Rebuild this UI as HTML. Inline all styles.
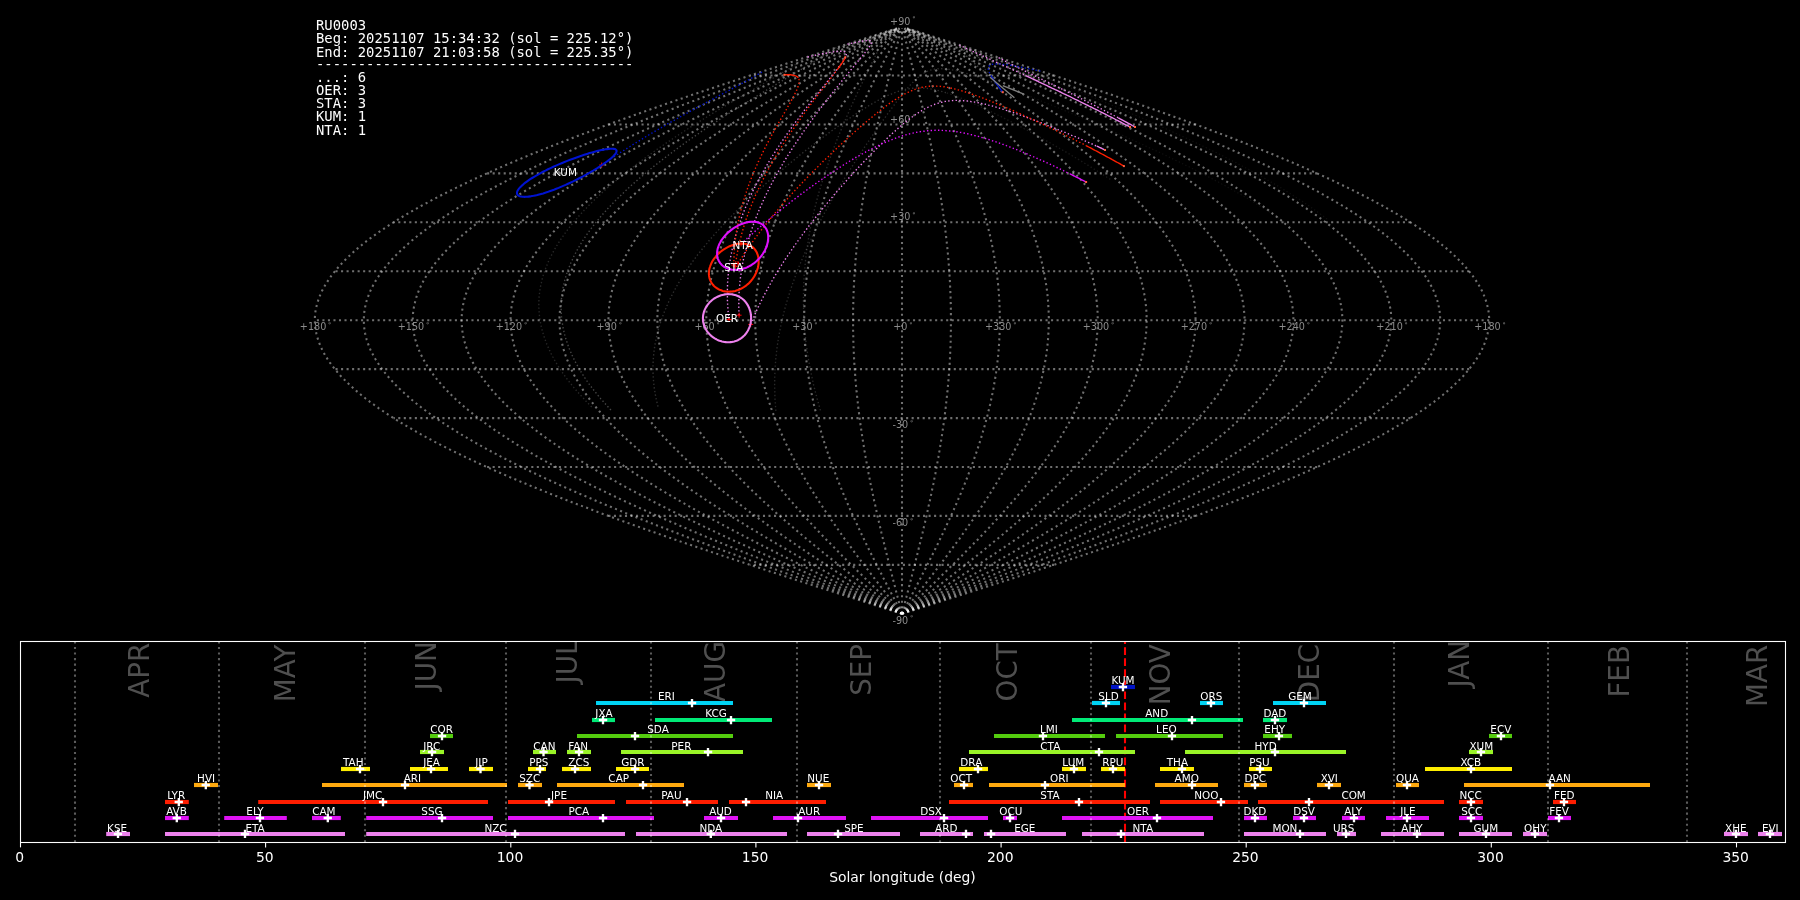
<!DOCTYPE html>
<html><head><meta charset="utf-8"><title>RU0003</title>
<style>html,body{margin:0;padding:0;background:#000;overflow:hidden}svg{display:block;will-change:transform;opacity:0.999}</style></head>
<body>
<svg width="1800" height="900" viewBox="0 0 1800 900">
<rect width="1800" height="900" fill="#000"/>
<g fill="none" stroke="#fff" stroke-opacity="0.44" stroke-width="2.08" stroke-dasharray="2.08 3.44">
<path d="M902.0 613.8L912.2 610.5L922.5 607.3L932.7 604.0L943.0 600.7L953.2 597.5L963.4 594.2L973.6 590.9L983.7 587.7L993.9 584.4L1004.0 581.2L1014.0 577.9L1024.1 574.6L1034.1 571.4L1044.0 568.1L1054.0 564.9L1063.8 561.6L1073.7 558.3L1083.4 555.1L1093.2 551.8L1102.8 548.5L1112.4 545.3L1122.0 542.0L1131.4 538.8L1140.8 535.5L1150.1 532.2L1159.4 529.0L1168.6 525.7L1177.7 522.4L1186.7 519.2L1195.6 515.9L1204.4 512.7L1213.1 509.4L1221.8 506.1L1230.3 502.9L1238.8 499.6L1247.1 496.3L1255.4 493.1L1263.5 489.8L1271.5 486.6L1279.4 483.3L1287.2 480.0L1294.9 476.8L1302.4 473.5L1309.9 470.3L1317.2 467.0L1324.4 463.7L1331.4 460.5L1338.3 457.2L1345.1 453.9L1351.8 450.7L1358.3 447.4L1364.7 444.2L1370.9 440.9L1377.0 437.6L1383.0 434.4L1388.8 431.1L1394.4 427.8L1399.9 424.6L1405.3 421.3L1410.5 418.1L1415.5 414.8L1420.4 411.5L1425.2 408.3L1429.7 405.0L1434.1 401.8L1438.4 398.5L1442.5 395.2L1446.4 392.0L1450.2 388.7L1453.7 385.4L1457.2 382.2L1460.4 378.9L1463.5 375.7L1466.4 372.4L1469.2 369.1L1471.7 365.9L1474.1 362.6L1476.3 359.3L1478.4 356.1L1480.2 352.8L1481.9 349.6L1483.4 346.3L1484.8 343.0L1485.9 339.8L1486.9 336.5L1487.7 333.2L1488.4 330.0L1488.8 326.7L1489.1 323.5L1489.2 320.2L1489.1 316.9L1488.8 313.7L1488.4 310.4L1487.7 307.2L1486.9 303.9L1485.9 300.6L1484.8 297.4L1483.4 294.1L1481.9 290.8L1480.2 287.6L1478.4 284.3L1476.3 281.1L1474.1 277.8L1471.7 274.5L1469.2 271.3L1466.4 268.0L1463.5 264.7L1460.4 261.5L1457.2 258.2L1453.7 255.0L1450.2 251.7L1446.4 248.4L1442.5 245.2L1438.4 241.9L1434.1 238.6L1429.7 235.4L1425.2 232.1L1420.4 228.9L1415.5 225.6L1410.5 222.3L1405.3 219.1L1399.9 215.8L1394.4 212.6L1388.8 209.3L1383.0 206.0L1377.0 202.8L1370.9 199.5L1364.7 196.2L1358.3 193.0L1351.8 189.7L1345.1 186.5L1338.3 183.2L1331.4 179.9L1324.4 176.7L1317.2 173.4L1309.9 170.1L1302.4 166.9L1294.9 163.6L1287.2 160.4L1279.4 157.1L1271.5 153.8L1263.5 150.6L1255.4 147.3L1247.1 144.1L1238.8 140.8L1230.3 137.5L1221.8 134.3L1213.1 131.0L1204.4 127.7L1195.6 124.5L1186.7 121.2L1177.7 118.0L1168.6 114.7L1159.4 111.4L1150.1 108.2L1140.8 104.9L1131.4 101.6L1122.0 98.4L1112.4 95.1L1102.8 91.9L1093.2 88.6L1083.4 85.3L1073.7 82.1L1063.8 78.8L1054.0 75.5L1044.0 72.3L1034.1 69.0L1024.1 65.8L1014.0 62.5L1004.0 59.2L993.9 56.0L983.7 52.7L973.6 49.5L963.4 46.2L953.2 42.9L943.0 39.7L932.7 36.4L922.5 33.1L912.2 29.9L907.1 28.3"/>
<path d="M902.0 613.8L911.4 610.5L920.8 607.3L930.2 604.0L939.5 600.7L948.9 597.5L958.3 594.2L967.6 590.9L976.9 587.7L986.2 584.4L995.5 581.2L1004.7 577.9L1013.9 574.6L1023.1 571.4L1032.2 568.1L1041.3 564.9L1050.4 561.6L1059.4 558.3L1068.3 555.1L1077.2 551.8L1086.1 548.5L1094.9 545.3L1103.6 542.0L1112.3 538.8L1120.9 535.5L1129.5 532.2L1137.9 529.0L1146.4 525.7L1154.7 522.4L1162.9 519.2L1171.1 515.9L1179.2 512.7L1187.2 509.4L1195.1 506.1L1203.0 502.9L1210.7 499.6L1218.4 496.3L1225.9 493.1L1233.4 489.8L1240.7 486.6L1248.0 483.3L1255.1 480.0L1262.1 476.8L1269.1 473.5L1275.9 470.3L1282.6 467.0L1289.2 463.7L1295.6 460.5L1302.0 457.2L1308.2 453.9L1314.3 450.7L1320.3 447.4L1326.1 444.2L1331.8 440.9L1337.4 437.6L1342.9 434.4L1348.2 431.1L1353.4 427.8L1358.4 424.6L1363.4 421.3L1368.1 418.1L1372.7 414.8L1377.2 411.5L1381.6 408.3L1385.8 405.0L1389.8 401.8L1393.7 398.5L1397.4 395.2L1401.0 392.0L1404.5 388.7L1407.8 385.4L1410.9 382.2L1413.9 378.9L1416.7 375.7L1419.4 372.4L1421.9 369.1L1424.2 365.9L1426.4 362.6L1428.5 359.3L1430.3 356.1L1432.1 352.8L1433.6 349.6L1435.0 346.3L1436.2 343.0L1437.3 339.8L1438.2 336.5L1438.9 333.2L1439.5 330.0L1439.9 326.7L1440.1 323.5L1440.2 320.2L1440.1 316.9L1439.9 313.7L1439.5 310.4L1438.9 307.2L1438.2 303.9L1437.3 300.6L1436.2 297.4L1435.0 294.1L1433.6 290.8L1432.1 287.6L1430.3 284.3L1428.5 281.1L1426.4 277.8L1424.2 274.5L1421.9 271.3L1419.4 268.0L1416.7 264.7L1413.9 261.5L1410.9 258.2L1407.8 255.0L1404.5 251.7L1401.0 248.4L1397.4 245.2L1393.7 241.9L1389.8 238.6L1385.8 235.4L1381.6 232.1L1377.2 228.9L1372.7 225.6L1368.1 222.3L1363.4 219.1L1358.4 215.8L1353.4 212.6L1348.2 209.3L1342.9 206.0L1337.4 202.8L1331.8 199.5L1326.1 196.2L1320.3 193.0L1314.3 189.7L1308.2 186.5L1302.0 183.2L1295.6 179.9L1289.2 176.7L1282.6 173.4L1275.9 170.1L1269.1 166.9L1262.1 163.6L1255.1 160.4L1248.0 157.1L1240.7 153.8L1233.4 150.6L1225.9 147.3L1218.4 144.1L1210.7 140.8L1203.0 137.5L1195.1 134.3L1187.2 131.0L1179.2 127.7L1171.1 124.5L1162.9 121.2L1154.7 118.0L1146.4 114.7L1137.9 111.4L1129.5 108.2L1120.9 104.9L1112.3 101.6L1103.6 98.4L1094.9 95.1L1086.1 91.9L1077.2 88.6L1068.3 85.3L1059.4 82.1L1050.4 78.8L1041.3 75.5L1032.2 72.3L1023.1 69.0L1013.9 65.8L1004.7 62.5L995.5 59.2L986.2 56.0L976.9 52.7L967.6 49.5L958.3 46.2L948.9 42.9L939.5 39.7L930.2 36.4L920.8 33.1L911.4 29.9L906.7 28.3"/>
<path d="M902.0 613.8L910.5 610.5L919.1 607.3L927.6 604.0L936.1 600.7L944.6 597.5L953.1 594.2L961.6 590.9L970.1 587.7L978.5 584.4L987.0 581.2L995.4 577.9L1003.7 574.6L1012.1 571.4L1020.4 568.1L1028.6 564.9L1036.9 561.6L1045.1 558.3L1053.2 555.1L1061.3 551.8L1069.4 548.5L1077.3 545.3L1085.3 542.0L1093.2 538.8L1101.0 535.5L1108.8 532.2L1116.5 529.0L1124.1 525.7L1131.7 522.4L1139.2 519.2L1146.7 515.9L1154.0 512.7L1161.3 509.4L1168.5 506.1L1175.6 502.9L1182.7 499.6L1189.6 496.3L1196.5 493.1L1203.2 489.8L1209.9 486.6L1216.5 483.3L1223.0 480.0L1229.4 476.8L1235.7 473.5L1241.9 470.3L1248.0 467.0L1254.0 463.7L1259.9 460.5L1265.6 457.2L1271.3 453.9L1276.8 450.7L1282.3 447.4L1287.6 444.2L1292.8 440.9L1297.9 437.6L1302.8 434.4L1307.6 431.1L1312.4 427.8L1316.9 424.6L1321.4 421.3L1325.7 418.1L1330.0 414.8L1334.0 411.5L1338.0 408.3L1341.8 405.0L1345.5 401.8L1349.0 398.5L1352.4 395.2L1355.7 392.0L1358.8 388.7L1361.8 385.4L1364.6 382.2L1367.4 378.9L1369.9 375.7L1372.3 372.4L1374.6 369.1L1376.8 365.9L1378.8 362.6L1380.6 359.3L1382.3 356.1L1383.9 352.8L1385.3 349.6L1386.5 346.3L1387.7 343.0L1388.6 339.8L1389.4 336.5L1390.1 333.2L1390.6 330.0L1391.0 326.7L1391.2 323.5L1391.3 320.2L1391.2 316.9L1391.0 313.7L1390.6 310.4L1390.1 307.2L1389.4 303.9L1388.6 300.6L1387.7 297.4L1386.5 294.1L1385.3 290.8L1383.9 287.6L1382.3 284.3L1380.6 281.1L1378.8 277.8L1376.8 274.5L1374.6 271.3L1372.3 268.0L1369.9 264.7L1367.4 261.5L1364.6 258.2L1361.8 255.0L1358.8 251.7L1355.7 248.4L1352.4 245.2L1349.0 241.9L1345.5 238.6L1341.8 235.4L1338.0 232.1L1334.0 228.9L1330.0 225.6L1325.7 222.3L1321.4 219.1L1316.9 215.8L1312.4 212.6L1307.6 209.3L1302.8 206.0L1297.9 202.8L1292.8 199.5L1287.6 196.2L1282.3 193.0L1276.8 189.7L1271.3 186.5L1265.6 183.2L1259.9 179.9L1254.0 176.7L1248.0 173.4L1241.9 170.1L1235.7 166.9L1229.4 163.6L1223.0 160.4L1216.5 157.1L1209.9 153.8L1203.2 150.6L1196.5 147.3L1189.6 144.1L1182.7 140.8L1175.6 137.5L1168.5 134.3L1161.3 131.0L1154.0 127.7L1146.7 124.5L1139.2 121.2L1131.7 118.0L1124.1 114.7L1116.5 111.4L1108.8 108.2L1101.0 104.9L1093.2 101.6L1085.3 98.4L1077.3 95.1L1069.4 91.9L1061.3 88.6L1053.2 85.3L1045.1 82.1L1036.9 78.8L1028.6 75.5L1020.4 72.3L1012.1 69.0L1003.7 65.8L995.4 62.5L987.0 59.2L978.5 56.0L970.1 52.7L961.6 49.5L953.1 46.2L944.6 42.9L936.1 39.7L927.6 36.4L919.1 33.1L910.5 29.9L906.3 28.3"/>
<path d="M902.0 613.8L909.7 610.5L917.4 607.3L925.0 604.0L932.7 600.7L940.4 597.5L948.0 594.2L955.7 590.9L963.3 587.7L970.9 584.4L978.5 581.2L986.0 577.9L993.6 574.6L1001.1 571.4L1008.5 568.1L1016.0 564.9L1023.4 561.6L1030.8 558.3L1038.1 555.1L1045.4 551.8L1052.6 548.5L1059.8 545.3L1067.0 542.0L1074.1 538.8L1081.1 535.5L1088.1 532.2L1095.0 529.0L1101.9 525.7L1108.7 522.4L1115.5 519.2L1122.2 515.9L1128.8 512.7L1135.4 509.4L1141.8 506.1L1148.3 502.9L1154.6 499.6L1160.8 496.3L1167.0 493.1L1173.1 489.8L1179.1 486.6L1185.1 483.3L1190.9 480.0L1196.7 476.8L1202.3 473.5L1207.9 470.3L1213.4 467.0L1218.8 463.7L1224.1 460.5L1229.3 457.2L1234.4 453.9L1239.3 450.7L1244.2 447.4L1249.0 444.2L1253.7 440.9L1258.3 437.6L1262.7 434.4L1267.1 431.1L1271.3 427.8L1275.5 424.6L1279.5 421.3L1283.4 418.1L1287.2 414.8L1290.8 411.5L1294.4 408.3L1297.8 405.0L1301.1 401.8L1304.3 398.5L1307.4 395.2L1310.3 392.0L1313.1 388.7L1315.8 385.4L1318.4 382.2L1320.8 378.9L1323.1 375.7L1325.3 372.4L1327.4 369.1L1329.3 365.9L1331.1 362.6L1332.7 359.3L1334.3 356.1L1335.7 352.8L1336.9 349.6L1338.1 346.3L1339.1 343.0L1340.0 339.8L1340.7 336.5L1341.3 333.2L1341.8 330.0L1342.1 326.7L1342.3 323.5L1342.4 320.2L1342.3 316.9L1342.1 313.7L1341.8 310.4L1341.3 307.2L1340.7 303.9L1340.0 300.6L1339.1 297.4L1338.1 294.1L1336.9 290.8L1335.7 287.6L1334.3 284.3L1332.7 281.1L1331.1 277.8L1329.3 274.5L1327.4 271.3L1325.3 268.0L1323.1 264.7L1320.8 261.5L1318.4 258.2L1315.8 255.0L1313.1 251.7L1310.3 248.4L1307.4 245.2L1304.3 241.9L1301.1 238.6L1297.8 235.4L1294.4 232.1L1290.8 228.9L1287.2 225.6L1283.4 222.3L1279.5 219.1L1275.5 215.8L1271.3 212.6L1267.1 209.3L1262.7 206.0L1258.3 202.8L1253.7 199.5L1249.0 196.2L1244.2 193.0L1239.3 189.7L1234.4 186.5L1229.3 183.2L1224.1 179.9L1218.8 176.7L1213.4 173.4L1207.9 170.1L1202.3 166.9L1196.7 163.6L1190.9 160.4L1185.1 157.1L1179.1 153.8L1173.1 150.6L1167.0 147.3L1160.8 144.1L1154.6 140.8L1148.3 137.5L1141.8 134.3L1135.4 131.0L1128.8 127.7L1122.2 124.5L1115.5 121.2L1108.7 118.0L1101.9 114.7L1095.0 111.4L1088.1 108.2L1081.1 104.9L1074.1 101.6L1067.0 98.4L1059.8 95.1L1052.6 91.9L1045.4 88.6L1038.1 85.3L1030.8 82.1L1023.4 78.8L1016.0 75.5L1008.5 72.3L1001.1 69.0L993.6 65.8L986.0 62.5L978.5 59.2L970.9 56.0L963.3 52.7L955.7 49.5L948.0 46.2L940.4 42.9L932.7 39.7L925.0 36.4L917.4 33.1L909.7 29.9L905.8 28.3"/>
<path d="M902.0 613.8L908.8 610.5L915.7 607.3L922.5 604.0L929.3 600.7L936.1 597.5L942.9 594.2L949.7 590.9L956.5 587.7L963.2 584.4L970.0 581.2L976.7 577.9L983.4 574.6L990.1 571.4L996.7 568.1L1003.3 564.9L1009.9 561.6L1016.4 558.3L1023.0 555.1L1029.4 551.8L1035.9 548.5L1042.3 545.3L1048.6 542.0L1054.9 538.8L1061.2 535.5L1067.4 532.2L1073.6 529.0L1079.7 525.7L1085.8 522.4L1091.8 519.2L1097.7 515.9L1103.6 512.7L1109.4 509.4L1115.2 506.1L1120.9 502.9L1126.5 499.6L1132.1 496.3L1137.6 493.1L1143.0 489.8L1148.3 486.6L1153.6 483.3L1158.8 480.0L1163.9 476.8L1169.0 473.5L1173.9 470.3L1178.8 467.0L1183.6 463.7L1188.3 460.5L1192.9 457.2L1197.4 453.9L1201.9 450.7L1206.2 447.4L1210.5 444.2L1214.6 440.9L1218.7 437.6L1222.6 434.4L1226.5 431.1L1230.3 427.8L1234.0 424.6L1237.5 421.3L1241.0 418.1L1244.4 414.8L1247.6 411.5L1250.8 408.3L1253.8 405.0L1256.8 401.8L1259.6 398.5L1262.3 395.2L1264.9 392.0L1267.4 388.7L1269.8 385.4L1272.1 382.2L1274.3 378.9L1276.3 375.7L1278.3 372.4L1280.1 369.1L1281.8 365.9L1283.4 362.6L1284.9 359.3L1286.2 356.1L1287.5 352.8L1288.6 349.6L1289.6 346.3L1290.5 343.0L1291.3 339.8L1292.0 336.5L1292.5 333.2L1292.9 330.0L1293.2 326.7L1293.4 323.5L1293.4 320.2L1293.4 316.9L1293.2 313.7L1292.9 310.4L1292.5 307.2L1292.0 303.9L1291.3 300.6L1290.5 297.4L1289.6 294.1L1288.6 290.8L1287.5 287.6L1286.2 284.3L1284.9 281.1L1283.4 277.8L1281.8 274.5L1280.1 271.3L1278.3 268.0L1276.3 264.7L1274.3 261.5L1272.1 258.2L1269.8 255.0L1267.4 251.7L1264.9 248.4L1262.3 245.2L1259.6 241.9L1256.8 238.6L1253.8 235.4L1250.8 232.1L1247.6 228.9L1244.4 225.6L1241.0 222.3L1237.5 219.1L1234.0 215.8L1230.3 212.6L1226.5 209.3L1222.6 206.0L1218.7 202.8L1214.6 199.5L1210.5 196.2L1206.2 193.0L1201.9 189.7L1197.4 186.5L1192.9 183.2L1188.3 179.9L1183.6 176.7L1178.8 173.4L1173.9 170.1L1169.0 166.9L1163.9 163.6L1158.8 160.4L1153.6 157.1L1148.3 153.8L1143.0 150.6L1137.6 147.3L1132.1 144.1L1126.5 140.8L1120.9 137.5L1115.2 134.3L1109.4 131.0L1103.6 127.7L1097.7 124.5L1091.8 121.2L1085.8 118.0L1079.7 114.7L1073.6 111.4L1067.4 108.2L1061.2 104.9L1054.9 101.6L1048.6 98.4L1042.3 95.1L1035.9 91.9L1029.4 88.6L1023.0 85.3L1016.4 82.1L1009.9 78.8L1003.3 75.5L996.7 72.3L990.1 69.0L983.4 65.8L976.7 62.5L970.0 59.2L963.2 56.0L956.5 52.7L949.7 49.5L942.9 46.2L936.1 42.9L929.3 39.7L922.5 36.4L915.7 33.1L908.8 29.9L905.4 28.3"/>
<path d="M902.0 613.8L908.0 610.5L914.0 607.3L919.9 604.0L925.9 600.7L931.9 597.5L937.8 594.2L943.7 590.9L949.7 587.7L955.6 584.4L961.5 581.2L967.4 577.9L973.2 574.6L979.0 571.4L984.9 568.1L990.6 564.9L996.4 561.6L1002.1 558.3L1007.8 555.1L1013.5 551.8L1019.1 548.5L1024.7 545.3L1030.3 542.0L1035.8 538.8L1041.3 535.5L1046.8 532.2L1052.1 529.0L1057.5 525.7L1062.8 522.4L1068.1 519.2L1073.3 515.9L1078.4 512.7L1083.5 509.4L1088.5 506.1L1093.5 502.9L1098.5 499.6L1103.3 496.3L1108.1 493.1L1112.9 489.8L1117.5 486.6L1122.2 483.3L1126.7 480.0L1131.2 476.8L1135.6 473.5L1139.9 470.3L1144.2 467.0L1148.4 463.7L1152.5 460.5L1156.5 457.2L1160.5 453.9L1164.4 450.7L1168.2 447.4L1171.9 444.2L1175.5 440.9L1179.1 437.6L1182.6 434.4L1186.0 431.1L1189.3 427.8L1192.5 424.6L1195.6 421.3L1198.6 418.1L1201.6 414.8L1204.4 411.5L1207.2 408.3L1209.8 405.0L1212.4 401.8L1214.9 398.5L1217.3 395.2L1219.6 392.0L1221.8 388.7L1223.9 385.4L1225.8 382.2L1227.7 378.9L1229.5 375.7L1231.2 372.4L1232.8 369.1L1234.3 365.9L1235.7 362.6L1237.0 359.3L1238.2 356.1L1239.3 352.8L1240.3 349.6L1241.2 346.3L1242.0 343.0L1242.6 339.8L1243.2 336.5L1243.7 333.2L1244.0 330.0L1244.3 326.7L1244.5 323.5L1244.5 320.2L1244.5 316.9L1244.3 313.7L1244.0 310.4L1243.7 307.2L1243.2 303.9L1242.6 300.6L1242.0 297.4L1241.2 294.1L1240.3 290.8L1239.3 287.6L1238.2 284.3L1237.0 281.1L1235.7 277.8L1234.3 274.5L1232.8 271.3L1231.2 268.0L1229.5 264.7L1227.7 261.5L1225.8 258.2L1223.9 255.0L1221.8 251.7L1219.6 248.4L1217.3 245.2L1214.9 241.9L1212.4 238.6L1209.8 235.4L1207.2 232.1L1204.4 228.9L1201.6 225.6L1198.6 222.3L1195.6 219.1L1192.5 215.8L1189.3 212.6L1186.0 209.3L1182.6 206.0L1179.1 202.8L1175.5 199.5L1171.9 196.2L1168.2 193.0L1164.4 189.7L1160.5 186.5L1156.5 183.2L1152.5 179.9L1148.4 176.7L1144.2 173.4L1139.9 170.1L1135.6 166.9L1131.2 163.6L1126.7 160.4L1122.2 157.1L1117.5 153.8L1112.9 150.6L1108.1 147.3L1103.3 144.1L1098.5 140.8L1093.5 137.5L1088.5 134.3L1083.5 131.0L1078.4 127.7L1073.3 124.5L1068.1 121.2L1062.8 118.0L1057.5 114.7L1052.1 111.4L1046.8 108.2L1041.3 104.9L1035.8 101.6L1030.3 98.4L1024.7 95.1L1019.1 91.9L1013.5 88.6L1007.8 85.3L1002.1 82.1L996.4 78.8L990.6 75.5L984.9 72.3L979.0 69.0L973.2 65.8L967.4 62.5L961.5 59.2L955.6 56.0L949.7 52.7L943.7 49.5L937.8 46.2L931.9 42.9L925.9 39.7L919.9 36.4L914.0 33.1L908.0 29.9L905.0 28.3"/>
<path d="M902.0 613.8L907.1 610.5L912.2 607.3L917.4 604.0L922.5 600.7L927.6 597.5L932.7 594.2L937.8 590.9L942.9 587.7L947.9 584.4L953.0 581.2L958.0 577.9L963.0 574.6L968.0 571.4L973.0 568.1L978.0 564.9L982.9 561.6L987.8 558.3L992.7 555.1L997.6 551.8L1002.4 548.5L1007.2 545.3L1012.0 542.0L1016.7 538.8L1021.4 535.5L1026.1 532.2L1030.7 529.0L1035.3 525.7L1039.8 522.4L1044.3 519.2L1048.8 515.9L1053.2 512.7L1057.6 509.4L1061.9 506.1L1066.2 502.9L1070.4 499.6L1074.6 496.3L1078.7 493.1L1082.7 489.8L1086.8 486.6L1090.7 483.3L1094.6 480.0L1098.4 476.8L1102.2 473.5L1105.9 470.3L1109.6 467.0L1113.2 463.7L1116.7 460.5L1120.2 457.2L1123.6 453.9L1126.9 450.7L1130.2 447.4L1133.3 444.2L1136.5 440.9L1139.5 437.6L1142.5 434.4L1145.4 431.1L1148.2 427.8L1151.0 424.6L1153.6 421.3L1156.2 418.1L1158.8 414.8L1161.2 411.5L1163.6 408.3L1165.9 405.0L1168.1 401.8L1170.2 398.5L1172.2 395.2L1174.2 392.0L1176.1 388.7L1177.9 385.4L1179.6 382.2L1181.2 378.9L1182.8 375.7L1184.2 372.4L1185.6 369.1L1186.9 365.9L1188.1 362.6L1189.2 359.3L1190.2 356.1L1191.1 352.8L1192.0 349.6L1192.7 346.3L1193.4 343.0L1194.0 339.8L1194.5 336.5L1194.9 333.2L1195.2 330.0L1195.4 326.7L1195.5 323.5L1195.6 320.2L1195.5 316.9L1195.4 313.7L1195.2 310.4L1194.9 307.2L1194.5 303.9L1194.0 300.6L1193.4 297.4L1192.7 294.1L1192.0 290.8L1191.1 287.6L1190.2 284.3L1189.2 281.1L1188.1 277.8L1186.9 274.5L1185.6 271.3L1184.2 268.0L1182.8 264.7L1181.2 261.5L1179.6 258.2L1177.9 255.0L1176.1 251.7L1174.2 248.4L1172.2 245.2L1170.2 241.9L1168.1 238.6L1165.9 235.4L1163.6 232.1L1161.2 228.9L1158.8 225.6L1156.2 222.3L1153.6 219.1L1151.0 215.8L1148.2 212.6L1145.4 209.3L1142.5 206.0L1139.5 202.8L1136.5 199.5L1133.3 196.2L1130.2 193.0L1126.9 189.7L1123.6 186.5L1120.2 183.2L1116.7 179.9L1113.2 176.7L1109.6 173.4L1105.9 170.1L1102.2 166.9L1098.4 163.6L1094.6 160.4L1090.7 157.1L1086.8 153.8L1082.7 150.6L1078.7 147.3L1074.6 144.1L1070.4 140.8L1066.2 137.5L1061.9 134.3L1057.6 131.0L1053.2 127.7L1048.8 124.5L1044.3 121.2L1039.8 118.0L1035.3 114.7L1030.7 111.4L1026.1 108.2L1021.4 104.9L1016.7 101.6L1012.0 98.4L1007.2 95.1L1002.4 91.9L997.6 88.6L992.7 85.3L987.8 82.1L982.9 78.8L978.0 75.5L973.0 72.3L968.0 69.0L963.0 65.8L958.0 62.5L953.0 59.2L947.9 56.0L942.9 52.7L937.8 49.5L932.7 46.2L927.6 42.9L922.5 39.7L917.4 36.4L912.2 33.1L907.1 29.9L904.6 28.3"/>
<path d="M902.0 613.8L906.3 610.5L910.5 607.3L914.8 604.0L919.1 600.7L923.3 597.5L927.6 594.2L931.8 590.9L936.0 587.7L940.3 584.4L944.5 581.2L948.7 577.9L952.9 574.6L957.0 571.4L961.2 568.1L965.3 564.9L969.4 561.6L973.5 558.3L977.6 555.1L981.7 551.8L985.7 548.5L989.7 545.3L993.6 542.0L997.6 538.8L1001.5 535.5L1005.4 532.2L1009.2 529.0L1013.1 525.7L1016.9 522.4L1020.6 519.2L1024.3 515.9L1028.0 512.7L1031.6 509.4L1035.2 506.1L1038.8 502.9L1042.3 499.6L1045.8 496.3L1049.2 493.1L1052.6 489.8L1056.0 486.6L1059.3 483.3L1062.5 480.0L1065.7 476.8L1068.9 473.5L1071.9 470.3L1075.0 467.0L1078.0 463.7L1080.9 460.5L1083.8 457.2L1086.6 453.9L1089.4 450.7L1092.1 447.4L1094.8 444.2L1097.4 440.9L1099.9 437.6L1102.4 434.4L1104.8 431.1L1107.2 427.8L1109.5 424.6L1111.7 421.3L1113.9 418.1L1116.0 414.8L1118.0 411.5L1120.0 408.3L1121.9 405.0L1123.7 401.8L1125.5 398.5L1127.2 395.2L1128.8 392.0L1130.4 388.7L1131.9 385.4L1133.3 382.2L1134.7 378.9L1136.0 375.7L1137.2 372.4L1138.3 369.1L1139.4 365.9L1140.4 362.6L1141.3 359.3L1142.2 356.1L1142.9 352.8L1143.6 349.6L1144.3 346.3L1144.8 343.0L1145.3 339.8L1145.7 336.5L1146.1 333.2L1146.3 330.0L1146.5 326.7L1146.6 323.5L1146.7 320.2L1146.6 316.9L1146.5 313.7L1146.3 310.4L1146.1 307.2L1145.7 303.9L1145.3 300.6L1144.8 297.4L1144.3 294.1L1143.6 290.8L1142.9 287.6L1142.2 284.3L1141.3 281.1L1140.4 277.8L1139.4 274.5L1138.3 271.3L1137.2 268.0L1136.0 264.7L1134.7 261.5L1133.3 258.2L1131.9 255.0L1130.4 251.7L1128.8 248.4L1127.2 245.2L1125.5 241.9L1123.7 238.6L1121.9 235.4L1120.0 232.1L1118.0 228.9L1116.0 225.6L1113.9 222.3L1111.7 219.1L1109.5 215.8L1107.2 212.6L1104.8 209.3L1102.4 206.0L1099.9 202.8L1097.4 199.5L1094.8 196.2L1092.1 193.0L1089.4 189.7L1086.6 186.5L1083.8 183.2L1080.9 179.9L1078.0 176.7L1075.0 173.4L1071.9 170.1L1068.9 166.9L1065.7 163.6L1062.5 160.4L1059.3 157.1L1056.0 153.8L1052.6 150.6L1049.2 147.3L1045.8 144.1L1042.3 140.8L1038.8 137.5L1035.2 134.3L1031.6 131.0L1028.0 127.7L1024.3 124.5L1020.6 121.2L1016.9 118.0L1013.1 114.7L1009.2 111.4L1005.4 108.2L1001.5 104.9L997.6 101.6L993.6 98.4L989.7 95.1L985.7 91.9L981.7 88.6L977.6 85.3L973.5 82.1L969.4 78.8L965.3 75.5L961.2 72.3L957.0 69.0L952.9 65.8L948.7 62.5L944.5 59.2L940.3 56.0L936.0 52.7L931.8 49.5L927.6 46.2L923.3 42.9L919.1 39.7L914.8 36.4L910.5 33.1L906.3 29.9L904.1 28.3"/>
<path d="M902.0 613.8L905.4 610.5L908.8 607.3L912.2 604.0L915.7 600.7L919.1 597.5L922.5 594.2L925.9 590.9L929.2 587.7L932.6 584.4L936.0 581.2L939.3 577.9L942.7 574.6L946.0 571.4L949.3 568.1L952.7 564.9L955.9 561.6L959.2 558.3L962.5 555.1L965.7 551.8L968.9 548.5L972.1 545.3L975.3 542.0L978.5 538.8L981.6 535.5L984.7 532.2L987.8 529.0L990.9 525.7L993.9 522.4L996.9 519.2L999.9 515.9L1002.8 512.7L1005.7 509.4L1008.6 506.1L1011.4 502.9L1014.3 499.6L1017.0 496.3L1019.8 493.1L1022.5 489.8L1025.2 486.6L1027.8 483.3L1030.4 480.0L1033.0 476.8L1035.5 473.5L1038.0 470.3L1040.4 467.0L1042.8 463.7L1045.1 460.5L1047.4 457.2L1049.7 453.9L1051.9 450.7L1054.1 447.4L1056.2 444.2L1058.3 440.9L1060.3 437.6L1062.3 434.4L1064.3 431.1L1066.1 427.8L1068.0 424.6L1069.8 421.3L1071.5 418.1L1073.2 414.8L1074.8 411.5L1076.4 408.3L1077.9 405.0L1079.4 401.8L1080.8 398.5L1082.2 395.2L1083.5 392.0L1084.7 388.7L1085.9 385.4L1087.1 382.2L1088.1 378.9L1089.2 375.7L1090.1 372.4L1091.1 369.1L1091.9 365.9L1092.7 362.6L1093.4 359.3L1094.1 356.1L1094.7 352.8L1095.3 349.6L1095.8 346.3L1096.3 343.0L1096.6 339.8L1097.0 336.5L1097.2 333.2L1097.5 330.0L1097.6 326.7L1097.7 323.5L1097.7 320.2L1097.7 316.9L1097.6 313.7L1097.5 310.4L1097.2 307.2L1097.0 303.9L1096.6 300.6L1096.3 297.4L1095.8 294.1L1095.3 290.8L1094.7 287.6L1094.1 284.3L1093.4 281.1L1092.7 277.8L1091.9 274.5L1091.1 271.3L1090.1 268.0L1089.2 264.7L1088.1 261.5L1087.1 258.2L1085.9 255.0L1084.7 251.7L1083.5 248.4L1082.2 245.2L1080.8 241.9L1079.4 238.6L1077.9 235.4L1076.4 232.1L1074.8 228.9L1073.2 225.6L1071.5 222.3L1069.8 219.1L1068.0 215.8L1066.1 212.6L1064.3 209.3L1062.3 206.0L1060.3 202.8L1058.3 199.5L1056.2 196.2L1054.1 193.0L1051.9 189.7L1049.7 186.5L1047.4 183.2L1045.1 179.9L1042.8 176.7L1040.4 173.4L1038.0 170.1L1035.5 166.9L1033.0 163.6L1030.4 160.4L1027.8 157.1L1025.2 153.8L1022.5 150.6L1019.8 147.3L1017.0 144.1L1014.3 140.8L1011.4 137.5L1008.6 134.3L1005.7 131.0L1002.8 127.7L999.9 124.5L996.9 121.2L993.9 118.0L990.9 114.7L987.8 111.4L984.7 108.2L981.6 104.9L978.5 101.6L975.3 98.4L972.1 95.1L968.9 91.9L965.7 88.6L962.5 85.3L959.2 82.1L955.9 78.8L952.7 75.5L949.3 72.3L946.0 69.0L942.7 65.8L939.3 62.5L936.0 59.2L932.6 56.0L929.2 52.7L925.9 49.5L922.5 46.2L919.1 42.9L915.7 39.7L912.2 36.4L908.8 33.1L905.4 29.9L903.7 28.3"/>
<path d="M902.0 613.8L904.6 610.5L907.1 607.3L909.7 604.0L912.2 600.7L914.8 597.5L917.3 594.2L919.9 590.9L922.4 587.7L925.0 584.4L927.5 581.2L930.0 577.9L932.5 574.6L935.0 571.4L937.5 568.1L940.0 564.9L942.5 561.6L944.9 558.3L947.4 555.1L949.8 551.8L952.2 548.5L954.6 545.3L957.0 542.0L959.4 538.8L961.7 535.5L964.0 532.2L966.3 529.0L968.6 525.7L970.9 522.4L973.2 519.2L975.4 515.9L977.6 512.7L979.8 509.4L981.9 506.1L984.1 502.9L986.2 499.6L988.3 496.3L990.3 493.1L992.4 489.8L994.4 486.6L996.4 483.3L998.3 480.0L1000.2 476.8L1002.1 473.5L1004.0 470.3L1005.8 467.0L1007.6 463.7L1009.4 460.5L1011.1 457.2L1012.8 453.9L1014.4 450.7L1016.1 447.4L1017.7 444.2L1019.2 440.9L1020.8 437.6L1022.2 434.4L1023.7 431.1L1025.1 427.8L1026.5 424.6L1027.8 421.3L1029.1 418.1L1030.4 414.8L1031.6 411.5L1032.8 408.3L1033.9 405.0L1035.0 401.8L1036.1 398.5L1037.1 395.2L1038.1 392.0L1039.0 388.7L1039.9 385.4L1040.8 382.2L1041.6 378.9L1042.4 375.7L1043.1 372.4L1043.8 369.1L1044.4 365.9L1045.0 362.6L1045.6 359.3L1046.1 356.1L1046.6 352.8L1047.0 349.6L1047.4 346.3L1047.7 343.0L1048.0 339.8L1048.2 336.5L1048.4 333.2L1048.6 330.0L1048.7 326.7L1048.8 323.5L1048.8 320.2L1048.8 316.9L1048.7 313.7L1048.6 310.4L1048.4 307.2L1048.2 303.9L1048.0 300.6L1047.7 297.4L1047.4 294.1L1047.0 290.8L1046.6 287.6L1046.1 284.3L1045.6 281.1L1045.0 277.8L1044.4 274.5L1043.8 271.3L1043.1 268.0L1042.4 264.7L1041.6 261.5L1040.8 258.2L1039.9 255.0L1039.0 251.7L1038.1 248.4L1037.1 245.2L1036.1 241.9L1035.0 238.6L1033.9 235.4L1032.8 232.1L1031.6 228.9L1030.4 225.6L1029.1 222.3L1027.8 219.1L1026.5 215.8L1025.1 212.6L1023.7 209.3L1022.2 206.0L1020.8 202.8L1019.2 199.5L1017.7 196.2L1016.1 193.0L1014.4 189.7L1012.8 186.5L1011.1 183.2L1009.4 179.9L1007.6 176.7L1005.8 173.4L1004.0 170.1L1002.1 166.9L1000.2 163.6L998.3 160.4L996.4 157.1L994.4 153.8L992.4 150.6L990.3 147.3L988.3 144.1L986.2 140.8L984.1 137.5L981.9 134.3L979.8 131.0L977.6 127.7L975.4 124.5L973.2 121.2L970.9 118.0L968.6 114.7L966.3 111.4L964.0 108.2L961.7 104.9L959.4 101.6L957.0 98.4L954.6 95.1L952.2 91.9L949.8 88.6L947.4 85.3L944.9 82.1L942.5 78.8L940.0 75.5L937.5 72.3L935.0 69.0L932.5 65.8L930.0 62.5L927.5 59.2L925.0 56.0L922.4 52.7L919.9 49.5L917.3 46.2L914.8 42.9L912.2 39.7L909.7 36.4L907.1 33.1L904.6 29.9L903.3 28.3"/>
<path d="M902.0 613.8L903.7 610.5L905.4 607.3L907.1 604.0L908.8 600.7L910.5 597.5L912.2 594.2L913.9 590.9L915.6 587.7L917.3 584.4L919.0 581.2L920.7 577.9L922.3 574.6L924.0 571.4L925.7 568.1L927.3 564.9L929.0 561.6L930.6 558.3L932.2 555.1L933.9 551.8L935.5 548.5L937.1 545.3L938.7 542.0L940.2 538.8L941.8 535.5L943.4 532.2L944.9 529.0L946.4 525.7L947.9 522.4L949.4 519.2L950.9 515.9L952.4 512.7L953.9 509.4L955.3 506.1L956.7 502.9L958.1 499.6L959.5 496.3L960.9 493.1L962.2 489.8L963.6 486.6L964.9 483.3L966.2 480.0L967.5 476.8L968.7 473.5L970.0 470.3L971.2 467.0L972.4 463.7L973.6 460.5L974.7 457.2L975.9 453.9L977.0 450.7L978.1 447.4L979.1 444.2L980.2 440.9L981.2 437.6L982.2 434.4L983.1 431.1L984.1 427.8L985.0 424.6L985.9 421.3L986.7 418.1L987.6 414.8L988.4 411.5L989.2 408.3L990.0 405.0L990.7 401.8L991.4 398.5L992.1 395.2L992.7 392.0L993.4 388.7L994.0 385.4L994.5 382.2L995.1 378.9L995.6 375.7L996.1 372.4L996.5 369.1L997.0 365.9L997.4 362.6L997.7 359.3L998.1 356.1L998.4 352.8L998.7 349.6L998.9 346.3L999.1 343.0L999.3 339.8L999.5 336.5L999.6 333.2L999.7 330.0L999.8 326.7L999.8 323.5L999.9 320.2L999.8 316.9L999.8 313.7L999.7 310.4L999.6 307.2L999.5 303.9L999.3 300.6L999.1 297.4L998.9 294.1L998.7 290.8L998.4 287.6L998.1 284.3L997.7 281.1L997.4 277.8L997.0 274.5L996.5 271.3L996.1 268.0L995.6 264.7L995.1 261.5L994.5 258.2L994.0 255.0L993.4 251.7L992.7 248.4L992.1 245.2L991.4 241.9L990.7 238.6L990.0 235.4L989.2 232.1L988.4 228.9L987.6 225.6L986.7 222.3L985.9 219.1L985.0 215.8L984.1 212.6L983.1 209.3L982.2 206.0L981.2 202.8L980.2 199.5L979.1 196.2L978.1 193.0L977.0 189.7L975.9 186.5L974.7 183.2L973.6 179.9L972.4 176.7L971.2 173.4L970.0 170.1L968.7 166.9L967.5 163.6L966.2 160.4L964.9 157.1L963.6 153.8L962.2 150.6L960.9 147.3L959.5 144.1L958.1 140.8L956.7 137.5L955.3 134.3L953.9 131.0L952.4 127.7L950.9 124.5L949.4 121.2L947.9 118.0L946.4 114.7L944.9 111.4L943.4 108.2L941.8 104.9L940.2 101.6L938.7 98.4L937.1 95.1L935.5 91.9L933.9 88.6L932.2 85.3L930.6 82.1L929.0 78.8L927.3 75.5L925.7 72.3L924.0 69.0L922.3 65.8L920.7 62.5L919.0 59.2L917.3 56.0L915.6 52.7L913.9 49.5L912.2 46.2L910.5 42.9L908.8 39.7L907.1 36.4L905.4 33.1L903.7 29.9L902.9 28.3"/>
<path d="M902.0 613.8L902.9 610.5L903.7 607.3L904.6 604.0L905.4 600.7L906.3 597.5L907.1 594.2L908.0 590.9L908.8 587.7L909.7 584.4L910.5 581.2L911.3 577.9L912.2 574.6L913.0 571.4L913.8 568.1L914.7 564.9L915.5 561.6L916.3 558.3L917.1 555.1L917.9 551.8L918.7 548.5L919.5 545.3L920.3 542.0L921.1 538.8L921.9 535.5L922.7 532.2L923.4 529.0L924.2 525.7L925.0 522.4L925.7 519.2L926.5 515.9L927.2 512.7L927.9 509.4L928.6 506.1L929.4 502.9L930.1 499.6L930.8 496.3L931.4 493.1L932.1 489.8L932.8 486.6L933.5 483.3L934.1 480.0L934.7 476.8L935.4 473.5L936.0 470.3L936.6 467.0L937.2 463.7L937.8 460.5L938.4 457.2L938.9 453.9L939.5 450.7L940.0 447.4L940.6 444.2L941.1 440.9L941.6 437.6L942.1 434.4L942.6 431.1L943.0 427.8L943.5 424.6L943.9 421.3L944.4 418.1L944.8 414.8L945.2 411.5L945.6 408.3L946.0 405.0L946.3 401.8L946.7 398.5L947.0 395.2L947.4 392.0L947.7 388.7L948.0 385.4L948.3 382.2L948.5 378.9L948.8 375.7L949.0 372.4L949.3 369.1L949.5 365.9L949.7 362.6L949.9 359.3L950.0 356.1L950.2 352.8L950.3 349.6L950.5 346.3L950.6 343.0L950.7 339.8L950.7 336.5L950.8 333.2L950.9 330.0L950.9 326.7L950.9 323.5L950.9 320.2L950.9 316.9L950.9 313.7L950.9 310.4L950.8 307.2L950.7 303.9L950.7 300.6L950.6 297.4L950.5 294.1L950.3 290.8L950.2 287.6L950.0 284.3L949.9 281.1L949.7 277.8L949.5 274.5L949.3 271.3L949.0 268.0L948.8 264.7L948.5 261.5L948.3 258.2L948.0 255.0L947.7 251.7L947.4 248.4L947.0 245.2L946.7 241.9L946.3 238.6L946.0 235.4L945.6 232.1L945.2 228.9L944.8 225.6L944.4 222.3L943.9 219.1L943.5 215.8L943.0 212.6L942.6 209.3L942.1 206.0L941.6 202.8L941.1 199.5L940.6 196.2L940.0 193.0L939.5 189.7L938.9 186.5L938.4 183.2L937.8 179.9L937.2 176.7L936.6 173.4L936.0 170.1L935.4 166.9L934.7 163.6L934.1 160.4L933.5 157.1L932.8 153.8L932.1 150.6L931.4 147.3L930.8 144.1L930.1 140.8L929.4 137.5L928.6 134.3L927.9 131.0L927.2 127.7L926.5 124.5L925.7 121.2L925.0 118.0L924.2 114.7L923.4 111.4L922.7 108.2L921.9 104.9L921.1 101.6L920.3 98.4L919.5 95.1L918.7 91.9L917.9 88.6L917.1 85.3L916.3 82.1L915.5 78.8L914.7 75.5L913.8 72.3L913.0 69.0L912.2 65.8L911.3 62.5L910.5 59.2L909.7 56.0L908.8 52.7L908.0 49.5L907.1 46.2L906.3 42.9L905.4 39.7L904.6 36.4L903.7 33.1L902.9 29.9L902.4 28.3"/>
<path d="M902.0 613.8L902.0 610.5L902.0 607.3L902.0 604.0L902.0 600.7L902.0 597.5L902.0 594.2L902.0 590.9L902.0 587.7L902.0 584.4L902.0 581.2L902.0 577.9L902.0 574.6L902.0 571.4L902.0 568.1L902.0 564.9L902.0 561.6L902.0 558.3L902.0 555.1L902.0 551.8L902.0 548.5L902.0 545.3L902.0 542.0L902.0 538.8L902.0 535.5L902.0 532.2L902.0 529.0L902.0 525.7L902.0 522.4L902.0 519.2L902.0 515.9L902.0 512.7L902.0 509.4L902.0 506.1L902.0 502.9L902.0 499.6L902.0 496.3L902.0 493.1L902.0 489.8L902.0 486.6L902.0 483.3L902.0 480.0L902.0 476.8L902.0 473.5L902.0 470.3L902.0 467.0L902.0 463.7L902.0 460.5L902.0 457.2L902.0 453.9L902.0 450.7L902.0 447.4L902.0 444.2L902.0 440.9L902.0 437.6L902.0 434.4L902.0 431.1L902.0 427.8L902.0 424.6L902.0 421.3L902.0 418.1L902.0 414.8L902.0 411.5L902.0 408.3L902.0 405.0L902.0 401.8L902.0 398.5L902.0 395.2L902.0 392.0L902.0 388.7L902.0 385.4L902.0 382.2L902.0 378.9L902.0 375.7L902.0 372.4L902.0 369.1L902.0 365.9L902.0 362.6L902.0 359.3L902.0 356.1L902.0 352.8L902.0 349.6L902.0 346.3L902.0 343.0L902.0 339.8L902.0 336.5L902.0 333.2L902.0 330.0L902.0 326.7L902.0 323.5L902.0 320.2L902.0 316.9L902.0 313.7L902.0 310.4L902.0 307.2L902.0 303.9L902.0 300.6L902.0 297.4L902.0 294.1L902.0 290.8L902.0 287.6L902.0 284.3L902.0 281.1L902.0 277.8L902.0 274.5L902.0 271.3L902.0 268.0L902.0 264.7L902.0 261.5L902.0 258.2L902.0 255.0L902.0 251.7L902.0 248.4L902.0 245.2L902.0 241.9L902.0 238.6L902.0 235.4L902.0 232.1L902.0 228.9L902.0 225.6L902.0 222.3L902.0 219.1L902.0 215.8L902.0 212.6L902.0 209.3L902.0 206.0L902.0 202.8L902.0 199.5L902.0 196.2L902.0 193.0L902.0 189.7L902.0 186.5L902.0 183.2L902.0 179.9L902.0 176.7L902.0 173.4L902.0 170.1L902.0 166.9L902.0 163.6L902.0 160.4L902.0 157.1L902.0 153.8L902.0 150.6L902.0 147.3L902.0 144.1L902.0 140.8L902.0 137.5L902.0 134.3L902.0 131.0L902.0 127.7L902.0 124.5L902.0 121.2L902.0 118.0L902.0 114.7L902.0 111.4L902.0 108.2L902.0 104.9L902.0 101.6L902.0 98.4L902.0 95.1L902.0 91.9L902.0 88.6L902.0 85.3L902.0 82.1L902.0 78.8L902.0 75.5L902.0 72.3L902.0 69.0L902.0 65.8L902.0 62.5L902.0 59.2L902.0 56.0L902.0 52.7L902.0 49.5L902.0 46.2L902.0 42.9L902.0 39.7L902.0 36.4L902.0 33.1L902.0 29.9L902.0 28.3"/>
<path d="M902.0 613.8L901.1 610.5L900.3 607.3L899.4 604.0L898.6 600.7L897.7 597.5L896.9 594.2L896.0 590.9L895.2 587.7L894.3 584.4L893.5 581.2L892.7 577.9L891.8 574.6L891.0 571.4L890.2 568.1L889.3 564.9L888.5 561.6L887.7 558.3L886.9 555.1L886.1 551.8L885.3 548.5L884.5 545.3L883.7 542.0L882.9 538.8L882.1 535.5L881.3 532.2L880.6 529.0L879.8 525.7L879.0 522.4L878.3 519.2L877.5 515.9L876.8 512.7L876.1 509.4L875.4 506.1L874.6 502.9L873.9 499.6L873.2 496.3L872.6 493.1L871.9 489.8L871.2 486.6L870.5 483.3L869.9 480.0L869.3 476.8L868.6 473.5L868.0 470.3L867.4 467.0L866.8 463.7L866.2 460.5L865.6 457.2L865.1 453.9L864.5 450.7L864.0 447.4L863.4 444.2L862.9 440.9L862.4 437.6L861.9 434.4L861.4 431.1L861.0 427.8L860.5 424.6L860.1 421.3L859.6 418.1L859.2 414.8L858.8 411.5L858.4 408.3L858.0 405.0L857.7 401.8L857.3 398.5L857.0 395.2L856.6 392.0L856.3 388.7L856.0 385.4L855.7 382.2L855.5 378.9L855.2 375.7L855.0 372.4L854.7 369.1L854.5 365.9L854.3 362.6L854.1 359.3L854.0 356.1L853.8 352.8L853.7 349.6L853.5 346.3L853.4 343.0L853.3 339.8L853.3 336.5L853.2 333.2L853.1 330.0L853.1 326.7L853.1 323.5L853.1 320.2L853.1 316.9L853.1 313.7L853.1 310.4L853.2 307.2L853.3 303.9L853.3 300.6L853.4 297.4L853.5 294.1L853.7 290.8L853.8 287.6L854.0 284.3L854.1 281.1L854.3 277.8L854.5 274.5L854.7 271.3L855.0 268.0L855.2 264.7L855.5 261.5L855.7 258.2L856.0 255.0L856.3 251.7L856.6 248.4L857.0 245.2L857.3 241.9L857.7 238.6L858.0 235.4L858.4 232.1L858.8 228.9L859.2 225.6L859.6 222.3L860.1 219.1L860.5 215.8L861.0 212.6L861.4 209.3L861.9 206.0L862.4 202.8L862.9 199.5L863.4 196.2L864.0 193.0L864.5 189.7L865.1 186.5L865.6 183.2L866.2 179.9L866.8 176.7L867.4 173.4L868.0 170.1L868.6 166.9L869.3 163.6L869.9 160.4L870.5 157.1L871.2 153.8L871.9 150.6L872.6 147.3L873.2 144.1L873.9 140.8L874.6 137.5L875.4 134.3L876.1 131.0L876.8 127.7L877.5 124.5L878.3 121.2L879.0 118.0L879.8 114.7L880.6 111.4L881.3 108.2L882.1 104.9L882.9 101.6L883.7 98.4L884.5 95.1L885.3 91.9L886.1 88.6L886.9 85.3L887.7 82.1L888.5 78.8L889.3 75.5L890.2 72.3L891.0 69.0L891.8 65.8L892.7 62.5L893.5 59.2L894.3 56.0L895.2 52.7L896.0 49.5L896.9 46.2L897.7 42.9L898.6 39.7L899.4 36.4L900.3 33.1L901.1 29.9L901.6 28.3"/>
<path d="M902.0 613.8L900.3 610.5L898.6 607.3L896.9 604.0L895.2 600.7L893.5 597.5L891.8 594.2L890.1 590.9L888.4 587.7L886.7 584.4L885.0 581.2L883.3 577.9L881.7 574.6L880.0 571.4L878.3 568.1L876.7 564.9L875.0 561.6L873.4 558.3L871.8 555.1L870.1 551.8L868.5 548.5L866.9 545.3L865.3 542.0L863.8 538.8L862.2 535.5L860.6 532.2L859.1 529.0L857.6 525.7L856.1 522.4L854.6 519.2L853.1 515.9L851.6 512.7L850.1 509.4L848.7 506.1L847.3 502.9L845.9 499.6L844.5 496.3L843.1 493.1L841.8 489.8L840.4 486.6L839.1 483.3L837.8 480.0L836.5 476.8L835.3 473.5L834.0 470.3L832.8 467.0L831.6 463.7L830.4 460.5L829.3 457.2L828.1 453.9L827.0 450.7L825.9 447.4L824.9 444.2L823.8 440.9L822.8 437.6L821.8 434.4L820.9 431.1L819.9 427.8L819.0 424.6L818.1 421.3L817.3 418.1L816.4 414.8L815.6 411.5L814.8 408.3L814.0 405.0L813.3 401.8L812.6 398.5L811.9 395.2L811.3 392.0L810.6 388.7L810.0 385.4L809.5 382.2L808.9 378.9L808.4 375.7L807.9 372.4L807.5 369.1L807.0 365.9L806.6 362.6L806.3 359.3L805.9 356.1L805.6 352.8L805.3 349.6L805.1 346.3L804.9 343.0L804.7 339.8L804.5 336.5L804.4 333.2L804.3 330.0L804.2 326.7L804.2 323.5L804.1 320.2L804.2 316.9L804.2 313.7L804.3 310.4L804.4 307.2L804.5 303.9L804.7 300.6L804.9 297.4L805.1 294.1L805.3 290.8L805.6 287.6L805.9 284.3L806.3 281.1L806.6 277.8L807.0 274.5L807.5 271.3L807.9 268.0L808.4 264.7L808.9 261.5L809.5 258.2L810.0 255.0L810.6 251.7L811.3 248.4L811.9 245.2L812.6 241.9L813.3 238.6L814.0 235.4L814.8 232.1L815.6 228.9L816.4 225.6L817.3 222.3L818.1 219.1L819.0 215.8L819.9 212.6L820.9 209.3L821.8 206.0L822.8 202.8L823.8 199.5L824.9 196.2L825.9 193.0L827.0 189.7L828.1 186.5L829.3 183.2L830.4 179.9L831.6 176.7L832.8 173.4L834.0 170.1L835.3 166.9L836.5 163.6L837.8 160.4L839.1 157.1L840.4 153.8L841.8 150.6L843.1 147.3L844.5 144.1L845.9 140.8L847.3 137.5L848.7 134.3L850.1 131.0L851.6 127.7L853.1 124.5L854.6 121.2L856.1 118.0L857.6 114.7L859.1 111.4L860.6 108.2L862.2 104.9L863.8 101.6L865.3 98.4L866.9 95.1L868.5 91.9L870.1 88.6L871.8 85.3L873.4 82.1L875.0 78.8L876.7 75.5L878.3 72.3L880.0 69.0L881.7 65.8L883.3 62.5L885.0 59.2L886.7 56.0L888.4 52.7L890.1 49.5L891.8 46.2L893.5 42.9L895.2 39.7L896.9 36.4L898.6 33.1L900.3 29.9L901.1 28.3"/>
<path d="M902.0 613.8L899.4 610.5L896.9 607.3L894.3 604.0L891.8 600.7L889.2 597.5L886.7 594.2L884.1 590.9L881.6 587.7L879.0 584.4L876.5 581.2L874.0 577.9L871.5 574.6L869.0 571.4L866.5 568.1L864.0 564.9L861.5 561.6L859.1 558.3L856.6 555.1L854.2 551.8L851.8 548.5L849.4 545.3L847.0 542.0L844.6 538.8L842.3 535.5L840.0 532.2L837.7 529.0L835.4 525.7L833.1 522.4L830.8 519.2L828.6 515.9L826.4 512.7L824.2 509.4L822.1 506.1L819.9 502.9L817.8 499.6L815.7 496.3L813.7 493.1L811.6 489.8L809.6 486.6L807.6 483.3L805.7 480.0L803.8 476.8L801.9 473.5L800.0 470.3L798.2 467.0L796.4 463.7L794.6 460.5L792.9 457.2L791.2 453.9L789.6 450.7L787.9 447.4L786.3 444.2L784.8 440.9L783.2 437.6L781.8 434.4L780.3 431.1L778.9 427.8L777.5 424.6L776.2 421.3L774.9 418.1L773.6 414.8L772.4 411.5L771.2 408.3L770.1 405.0L769.0 401.8L767.9 398.5L766.9 395.2L765.9 392.0L765.0 388.7L764.1 385.4L763.2 382.2L762.4 378.9L761.6 375.7L760.9 372.4L760.2 369.1L759.6 365.9L759.0 362.6L758.4 359.3L757.9 356.1L757.4 352.8L757.0 349.6L756.6 346.3L756.3 343.0L756.0 339.8L755.8 336.5L755.6 333.2L755.4 330.0L755.3 326.7L755.2 323.5L755.2 320.2L755.2 316.9L755.3 313.7L755.4 310.4L755.6 307.2L755.8 303.9L756.0 300.6L756.3 297.4L756.6 294.1L757.0 290.8L757.4 287.6L757.9 284.3L758.4 281.1L759.0 277.8L759.6 274.5L760.2 271.3L760.9 268.0L761.6 264.7L762.4 261.5L763.2 258.2L764.1 255.0L765.0 251.7L765.9 248.4L766.9 245.2L767.9 241.9L769.0 238.6L770.1 235.4L771.2 232.1L772.4 228.9L773.6 225.6L774.9 222.3L776.2 219.1L777.5 215.8L778.9 212.6L780.3 209.3L781.8 206.0L783.2 202.8L784.8 199.5L786.3 196.2L787.9 193.0L789.6 189.7L791.2 186.5L792.9 183.2L794.6 179.9L796.4 176.7L798.2 173.4L800.0 170.1L801.9 166.9L803.8 163.6L805.7 160.4L807.6 157.1L809.6 153.8L811.6 150.6L813.7 147.3L815.7 144.1L817.8 140.8L819.9 137.5L822.1 134.3L824.2 131.0L826.4 127.7L828.6 124.5L830.8 121.2L833.1 118.0L835.4 114.7L837.7 111.4L840.0 108.2L842.3 104.9L844.6 101.6L847.0 98.4L849.4 95.1L851.8 91.9L854.2 88.6L856.6 85.3L859.1 82.1L861.5 78.8L864.0 75.5L866.5 72.3L869.0 69.0L871.5 65.8L874.0 62.5L876.5 59.2L879.0 56.0L881.6 52.7L884.1 49.5L886.7 46.2L889.2 42.9L891.8 39.7L894.3 36.4L896.9 33.1L899.4 29.9L900.7 28.3"/>
<path d="M902.0 613.8L898.6 610.5L895.2 607.3L891.8 604.0L888.3 600.7L884.9 597.5L881.5 594.2L878.1 590.9L874.8 587.7L871.4 584.4L868.0 581.2L864.7 577.9L861.3 574.6L858.0 571.4L854.7 568.1L851.3 564.9L848.1 561.6L844.8 558.3L841.5 555.1L838.3 551.8L835.1 548.5L831.9 545.3L828.7 542.0L825.5 538.8L822.4 535.5L819.3 532.2L816.2 529.0L813.1 525.7L810.1 522.4L807.1 519.2L804.1 515.9L801.2 512.7L798.3 509.4L795.4 506.1L792.6 502.9L789.7 499.6L787.0 496.3L784.2 493.1L781.5 489.8L778.8 486.6L776.2 483.3L773.6 480.0L771.0 476.8L768.5 473.5L766.0 470.3L763.6 467.0L761.2 463.7L758.9 460.5L756.6 457.2L754.3 453.9L752.1 450.7L749.9 447.4L747.8 444.2L745.7 440.9L743.7 437.6L741.7 434.4L739.7 431.1L737.9 427.8L736.0 424.6L734.2 421.3L732.5 418.1L730.8 414.8L729.2 411.5L727.6 408.3L726.1 405.0L724.6 401.8L723.2 398.5L721.8 395.2L720.5 392.0L719.3 388.7L718.1 385.4L716.9 382.2L715.9 378.9L714.8 375.7L713.9 372.4L712.9 369.1L712.1 365.9L711.3 362.6L710.6 359.3L709.9 356.1L709.3 352.8L708.7 349.6L708.2 346.3L707.7 343.0L707.4 339.8L707.0 336.5L706.8 333.2L706.5 330.0L706.4 326.7L706.3 323.5L706.3 320.2L706.3 316.9L706.4 313.7L706.5 310.4L706.8 307.2L707.0 303.9L707.4 300.6L707.7 297.4L708.2 294.1L708.7 290.8L709.3 287.6L709.9 284.3L710.6 281.1L711.3 277.8L712.1 274.5L712.9 271.3L713.9 268.0L714.8 264.7L715.9 261.5L716.9 258.2L718.1 255.0L719.3 251.7L720.5 248.4L721.8 245.2L723.2 241.9L724.6 238.6L726.1 235.4L727.6 232.1L729.2 228.9L730.8 225.6L732.5 222.3L734.2 219.1L736.0 215.8L737.9 212.6L739.7 209.3L741.7 206.0L743.7 202.8L745.7 199.5L747.8 196.2L749.9 193.0L752.1 189.7L754.3 186.5L756.6 183.2L758.9 179.9L761.2 176.7L763.6 173.4L766.0 170.1L768.5 166.9L771.0 163.6L773.6 160.4L776.2 157.1L778.8 153.8L781.5 150.6L784.2 147.3L787.0 144.1L789.7 140.8L792.6 137.5L795.4 134.3L798.3 131.0L801.2 127.7L804.1 124.5L807.1 121.2L810.1 118.0L813.1 114.7L816.2 111.4L819.3 108.2L822.4 104.9L825.5 101.6L828.7 98.4L831.9 95.1L835.1 91.9L838.3 88.6L841.5 85.3L844.8 82.1L848.1 78.8L851.3 75.5L854.7 72.3L858.0 69.0L861.3 65.8L864.7 62.5L868.0 59.2L871.4 56.0L874.8 52.7L878.1 49.5L881.5 46.2L884.9 42.9L888.3 39.7L891.8 36.4L895.2 33.1L898.6 29.9L900.3 28.3"/>
<path d="M902.0 613.8L897.7 610.5L893.5 607.3L889.2 604.0L884.9 600.7L880.7 597.5L876.4 594.2L872.2 590.9L868.0 587.7L863.7 584.4L859.5 581.2L855.3 577.9L851.1 574.6L847.0 571.4L842.8 568.1L838.7 564.9L834.6 561.6L830.5 558.3L826.4 555.1L822.3 551.8L818.3 548.5L814.3 545.3L810.4 542.0L806.4 538.8L802.5 535.5L798.6 532.2L794.8 529.0L790.9 525.7L787.1 522.4L783.4 519.2L779.7 515.9L776.0 512.7L772.4 509.4L768.8 506.1L765.2 502.9L761.7 499.6L758.2 496.3L754.8 493.1L751.4 489.8L748.0 486.6L744.7 483.3L741.5 480.0L738.3 476.8L735.1 473.5L732.1 470.3L729.0 467.0L726.0 463.7L723.1 460.5L720.2 457.2L717.4 453.9L714.6 450.7L711.9 447.4L709.2 444.2L706.6 440.9L704.1 437.6L701.6 434.4L699.2 431.1L696.8 427.8L694.5 424.6L692.3 421.3L690.1 418.1L688.0 414.8L686.0 411.5L684.0 408.3L682.1 405.0L680.3 401.8L678.5 398.5L676.8 395.2L675.2 392.0L673.6 388.7L672.1 385.4L670.7 382.2L669.3 378.9L668.0 375.7L666.8 372.4L665.7 369.1L664.6 365.9L663.6 362.6L662.7 359.3L661.8 356.1L661.1 352.8L660.4 349.6L659.7 346.3L659.2 343.0L658.7 339.8L658.3 336.5L657.9 333.2L657.7 330.0L657.5 326.7L657.4 323.5L657.4 320.2L657.4 316.9L657.5 313.7L657.7 310.4L657.9 307.2L658.3 303.9L658.7 300.6L659.2 297.4L659.7 294.1L660.4 290.8L661.1 287.6L661.8 284.3L662.7 281.1L663.6 277.8L664.6 274.5L665.7 271.3L666.8 268.0L668.0 264.7L669.3 261.5L670.7 258.2L672.1 255.0L673.6 251.7L675.2 248.4L676.8 245.2L678.5 241.9L680.3 238.6L682.1 235.4L684.0 232.1L686.0 228.9L688.0 225.6L690.1 222.3L692.3 219.1L694.5 215.8L696.8 212.6L699.2 209.3L701.6 206.0L704.1 202.8L706.6 199.5L709.2 196.2L711.9 193.0L714.6 189.7L717.4 186.5L720.2 183.2L723.1 179.9L726.0 176.7L729.0 173.4L732.1 170.1L735.1 166.9L738.3 163.6L741.5 160.4L744.7 157.1L748.0 153.8L751.4 150.6L754.8 147.3L758.2 144.1L761.7 140.8L765.2 137.5L768.8 134.3L772.4 131.0L776.0 127.7L779.7 124.5L783.4 121.2L787.1 118.0L790.9 114.7L794.8 111.4L798.6 108.2L802.5 104.9L806.4 101.6L810.4 98.4L814.3 95.1L818.3 91.9L822.3 88.6L826.4 85.3L830.5 82.1L834.6 78.8L838.7 75.5L842.8 72.3L847.0 69.0L851.1 65.8L855.3 62.5L859.5 59.2L863.7 56.0L868.0 52.7L872.2 49.5L876.4 46.2L880.7 42.9L884.9 39.7L889.2 36.4L893.5 33.1L897.7 29.9L899.9 28.3"/>
<path d="M902.0 613.8L896.9 610.5L891.8 607.3L886.6 604.0L881.5 600.7L876.4 597.5L871.3 594.2L866.2 590.9L861.1 587.7L856.1 584.4L851.0 581.2L846.0 577.9L841.0 574.6L836.0 571.4L831.0 568.1L826.0 564.9L821.1 561.6L816.2 558.3L811.3 555.1L806.4 551.8L801.6 548.5L796.8 545.3L792.0 542.0L787.3 538.8L782.6 535.5L777.9 532.2L773.3 529.0L768.7 525.7L764.2 522.4L759.7 519.2L755.2 515.9L750.8 512.7L746.4 509.4L742.1 506.1L737.8 502.9L733.6 499.6L729.4 496.3L725.3 493.1L721.3 489.8L717.2 486.6L713.3 483.3L709.4 480.0L705.6 476.8L701.8 473.5L698.1 470.3L694.4 467.0L690.8 463.7L687.3 460.5L683.8 457.2L680.4 453.9L677.1 450.7L673.8 447.4L670.7 444.2L667.5 440.9L664.5 437.6L661.5 434.4L658.6 431.1L655.8 427.8L653.0 424.6L650.4 421.3L647.8 418.1L645.2 414.8L642.8 411.5L640.4 408.3L638.1 405.0L635.9 401.8L633.8 398.5L631.8 395.2L629.8 392.0L627.9 388.7L626.1 385.4L624.4 382.2L622.8 378.9L621.2 375.7L619.8 372.4L618.4 369.1L617.1 365.9L615.9 362.6L614.8 359.3L613.8 356.1L612.9 352.8L612.0 349.6L611.3 346.3L610.6 343.0L610.0 339.8L609.5 336.5L609.1 333.2L608.8 330.0L608.6 326.7L608.5 323.5L608.4 320.2L608.5 316.9L608.6 313.7L608.8 310.4L609.1 307.2L609.5 303.9L610.0 300.6L610.6 297.4L611.3 294.1L612.0 290.8L612.9 287.6L613.8 284.3L614.8 281.1L615.9 277.8L617.1 274.5L618.4 271.3L619.8 268.0L621.2 264.7L622.8 261.5L624.4 258.2L626.1 255.0L627.9 251.7L629.8 248.4L631.8 245.2L633.8 241.9L635.9 238.6L638.1 235.4L640.4 232.1L642.8 228.9L645.2 225.6L647.8 222.3L650.4 219.1L653.0 215.8L655.8 212.6L658.6 209.3L661.5 206.0L664.5 202.8L667.5 199.5L670.7 196.2L673.8 193.0L677.1 189.7L680.4 186.5L683.8 183.2L687.3 179.9L690.8 176.7L694.4 173.4L698.1 170.1L701.8 166.9L705.6 163.6L709.4 160.4L713.3 157.1L717.2 153.8L721.3 150.6L725.3 147.3L729.4 144.1L733.6 140.8L737.8 137.5L742.1 134.3L746.4 131.0L750.8 127.7L755.2 124.5L759.7 121.2L764.2 118.0L768.7 114.7L773.3 111.4L777.9 108.2L782.6 104.9L787.3 101.6L792.0 98.4L796.8 95.1L801.6 91.9L806.4 88.6L811.3 85.3L816.2 82.1L821.1 78.8L826.0 75.5L831.0 72.3L836.0 69.0L841.0 65.8L846.0 62.5L851.0 59.2L856.1 56.0L861.1 52.7L866.2 49.5L871.3 46.2L876.4 42.9L881.5 39.7L886.6 36.4L891.8 33.1L896.9 29.9L899.4 28.3"/>
<path d="M902.0 613.8L896.0 610.5L890.0 607.3L884.1 604.0L878.1 600.7L872.1 597.5L866.2 594.2L860.3 590.9L854.3 587.7L848.4 584.4L842.5 581.2L836.6 577.9L830.8 574.6L825.0 571.4L819.1 568.1L813.4 564.9L807.6 561.6L801.9 558.3L796.2 555.1L790.5 551.8L784.9 548.5L779.3 545.3L773.7 542.0L768.2 538.8L762.7 535.5L757.2 532.2L751.9 529.0L746.5 525.7L741.2 522.4L735.9 519.2L730.7 515.9L725.6 512.7L720.5 509.4L715.5 506.1L710.5 502.9L705.5 499.6L700.7 496.3L695.9 493.1L691.1 489.8L686.5 486.6L681.8 483.3L677.3 480.0L672.8 476.8L668.4 473.5L664.1 470.3L659.8 467.0L655.6 463.7L651.5 460.5L647.5 457.2L643.5 453.9L639.6 450.7L635.8 447.4L632.1 444.2L628.5 440.9L624.9 437.6L621.4 434.4L618.0 431.1L614.7 427.8L611.5 424.6L608.4 421.3L605.4 418.1L602.4 414.8L599.6 411.5L596.8 408.3L594.2 405.0L591.6 401.8L589.1 398.5L586.7 395.2L584.4 392.0L582.2 388.7L580.1 385.4L578.2 382.2L576.3 378.9L574.5 375.7L572.8 372.4L571.2 369.1L569.7 365.9L568.3 362.6L567.0 359.3L565.8 356.1L564.7 352.8L563.7 349.6L562.8 346.3L562.0 343.0L561.4 339.8L560.8 336.5L560.3 333.2L560.0 330.0L559.7 326.7L559.5 323.5L559.5 320.2L559.5 316.9L559.7 313.7L560.0 310.4L560.3 307.2L560.8 303.9L561.4 300.6L562.0 297.4L562.8 294.1L563.7 290.8L564.7 287.6L565.8 284.3L567.0 281.1L568.3 277.8L569.7 274.5L571.2 271.3L572.8 268.0L574.5 264.7L576.3 261.5L578.2 258.2L580.1 255.0L582.2 251.7L584.4 248.4L586.7 245.2L589.1 241.9L591.6 238.6L594.2 235.4L596.8 232.1L599.6 228.9L602.4 225.6L605.4 222.3L608.4 219.1L611.5 215.8L614.7 212.6L618.0 209.3L621.4 206.0L624.9 202.8L628.5 199.5L632.1 196.2L635.8 193.0L639.6 189.7L643.5 186.5L647.5 183.2L651.5 179.9L655.6 176.7L659.8 173.4L664.1 170.1L668.4 166.9L672.8 163.6L677.3 160.4L681.8 157.1L686.5 153.8L691.1 150.6L695.9 147.3L700.7 144.1L705.5 140.8L710.5 137.5L715.5 134.3L720.5 131.0L725.6 127.7L730.7 124.5L735.9 121.2L741.2 118.0L746.5 114.7L751.9 111.4L757.2 108.2L762.7 104.9L768.2 101.6L773.7 98.4L779.3 95.1L784.9 91.9L790.5 88.6L796.2 85.3L801.9 82.1L807.6 78.8L813.4 75.5L819.1 72.3L825.0 69.0L830.8 65.8L836.6 62.5L842.5 59.2L848.4 56.0L854.3 52.7L860.3 49.5L866.2 46.2L872.1 42.9L878.1 39.7L884.1 36.4L890.0 33.1L896.0 29.9L899.0 28.3"/>
<path d="M902.0 613.8L895.2 610.5L888.3 607.3L881.5 604.0L874.7 600.7L867.9 597.5L861.1 594.2L854.3 590.9L847.5 587.7L840.8 584.4L834.0 581.2L827.3 577.9L820.6 574.6L813.9 571.4L807.3 568.1L800.7 564.9L794.1 561.6L787.6 558.3L781.0 555.1L774.6 551.8L768.1 548.5L761.7 545.3L755.4 542.0L749.1 538.8L742.8 535.5L736.6 532.2L730.4 529.0L724.3 525.7L718.2 522.4L712.2 519.2L706.3 515.9L700.4 512.7L694.6 509.4L688.8 506.1L683.1 502.9L677.5 499.6L671.9 496.3L666.4 493.1L661.0 489.8L655.7 486.6L650.4 483.3L645.2 480.0L640.1 476.8L635.0 473.5L630.1 470.3L625.2 467.0L620.4 463.7L615.7 460.5L611.1 457.2L606.6 453.9L602.1 450.7L597.8 447.4L593.5 444.2L589.4 440.9L585.3 437.6L581.4 434.4L577.5 431.1L573.7 427.8L570.0 424.6L566.5 421.3L563.0 418.1L559.6 414.8L556.4 411.5L553.2 408.3L550.2 405.0L547.2 401.8L544.4 398.5L541.7 395.2L539.1 392.0L536.6 388.7L534.2 385.4L531.9 382.2L529.7 378.9L527.7 375.7L525.7 372.4L523.9 369.1L522.2 365.9L520.6 362.6L519.1 359.3L517.8 356.1L516.5 352.8L515.4 349.6L514.4 346.3L513.5 343.0L512.7 339.8L512.0 336.5L511.5 333.2L511.1 330.0L510.8 326.7L510.6 323.5L510.6 320.2L510.6 316.9L510.8 313.7L511.1 310.4L511.5 307.2L512.0 303.9L512.7 300.6L513.5 297.4L514.4 294.1L515.4 290.8L516.5 287.6L517.8 284.3L519.1 281.1L520.6 277.8L522.2 274.5L523.9 271.3L525.7 268.0L527.7 264.7L529.7 261.5L531.9 258.2L534.2 255.0L536.6 251.7L539.1 248.4L541.7 245.2L544.4 241.9L547.2 238.6L550.2 235.4L553.2 232.1L556.4 228.9L559.6 225.6L563.0 222.3L566.5 219.1L570.0 215.8L573.7 212.6L577.5 209.3L581.4 206.0L585.3 202.8L589.4 199.5L593.5 196.2L597.8 193.0L602.1 189.7L606.6 186.5L611.1 183.2L615.7 179.9L620.4 176.7L625.2 173.4L630.1 170.1L635.0 166.9L640.1 163.6L645.2 160.4L650.4 157.1L655.7 153.8L661.0 150.6L666.4 147.3L671.9 144.1L677.5 140.8L683.1 137.5L688.8 134.3L694.6 131.0L700.4 127.7L706.3 124.5L712.2 121.2L718.2 118.0L724.3 114.7L730.4 111.4L736.6 108.2L742.8 104.9L749.1 101.6L755.4 98.4L761.7 95.1L768.1 91.9L774.6 88.6L781.0 85.3L787.6 82.1L794.1 78.8L800.7 75.5L807.3 72.3L813.9 69.0L820.6 65.8L827.3 62.5L834.0 59.2L840.8 56.0L847.5 52.7L854.3 49.5L861.1 46.2L867.9 42.9L874.7 39.7L881.5 36.4L888.3 33.1L895.2 29.9L898.6 28.3"/>
<path d="M902.0 613.8L894.3 610.5L886.6 607.3L879.0 604.0L871.3 600.7L863.6 597.5L856.0 594.2L848.3 590.9L840.7 587.7L833.1 584.4L825.5 581.2L818.0 577.9L810.4 574.6L802.9 571.4L795.5 568.1L788.0 564.9L780.6 561.6L773.2 558.3L765.9 555.1L758.6 551.8L751.4 548.5L744.2 545.3L737.0 542.0L729.9 538.8L722.9 535.5L715.9 532.2L709.0 529.0L702.1 525.7L695.3 522.4L688.5 519.2L681.8 515.9L675.2 512.7L668.6 509.4L662.2 506.1L655.7 502.9L649.4 499.6L643.2 496.3L637.0 493.1L630.9 489.8L624.9 486.6L618.9 483.3L613.1 480.0L607.3 476.8L601.7 473.5L596.1 470.3L590.6 467.0L585.2 463.7L579.9 460.5L574.7 457.2L569.6 453.9L564.7 450.7L559.8 447.4L555.0 444.2L550.3 440.9L545.7 437.6L541.3 434.4L536.9 431.1L532.7 427.8L528.5 424.6L524.5 421.3L520.6 418.1L516.8 414.8L513.2 411.5L509.6 408.3L506.2 405.0L502.9 401.8L499.7 398.5L496.6 395.2L493.7 392.0L490.9 388.7L488.2 385.4L485.6 382.2L483.2 378.9L480.9 375.7L478.7 372.4L476.6 369.1L474.7 365.9L472.9 362.6L471.3 359.3L469.7 356.1L468.3 352.8L467.1 349.6L465.9 346.3L464.9 343.0L464.0 339.8L463.3 336.5L462.7 333.2L462.2 330.0L461.9 326.7L461.7 323.5L461.6 320.2L461.7 316.9L461.9 313.7L462.2 310.4L462.7 307.2L463.3 303.9L464.0 300.6L464.9 297.4L465.9 294.1L467.1 290.8L468.3 287.6L469.7 284.3L471.3 281.1L472.9 277.8L474.7 274.5L476.6 271.3L478.7 268.0L480.9 264.7L483.2 261.5L485.6 258.2L488.2 255.0L490.9 251.7L493.7 248.4L496.6 245.2L499.7 241.9L502.9 238.6L506.2 235.4L509.6 232.1L513.2 228.9L516.8 225.6L520.6 222.3L524.5 219.1L528.5 215.8L532.7 212.6L536.9 209.3L541.3 206.0L545.7 202.8L550.3 199.5L555.0 196.2L559.8 193.0L564.7 189.7L569.6 186.5L574.7 183.2L579.9 179.9L585.2 176.7L590.6 173.4L596.1 170.1L601.7 166.9L607.3 163.6L613.1 160.4L618.9 157.1L624.9 153.8L630.9 150.6L637.0 147.3L643.2 144.1L649.4 140.8L655.7 137.5L662.2 134.3L668.6 131.0L675.2 127.7L681.8 124.5L688.5 121.2L695.3 118.0L702.1 114.7L709.0 111.4L715.9 108.2L722.9 104.9L729.9 101.6L737.0 98.4L744.2 95.1L751.4 91.9L758.6 88.6L765.9 85.3L773.2 82.1L780.6 78.8L788.0 75.5L795.5 72.3L802.9 69.0L810.4 65.8L818.0 62.5L825.5 59.2L833.1 56.0L840.7 52.7L848.3 49.5L856.0 46.2L863.6 42.9L871.3 39.7L879.0 36.4L886.6 33.1L894.3 29.9L898.2 28.3"/>
<path d="M902.0 613.8L893.5 610.5L884.9 607.3L876.4 604.0L867.9 600.7L859.4 597.5L850.9 594.2L842.4 590.9L833.9 587.7L825.5 584.4L817.0 581.2L808.6 577.9L800.3 574.6L791.9 571.4L783.6 568.1L775.4 564.9L767.1 561.6L758.9 558.3L750.8 555.1L742.7 551.8L734.6 548.5L726.7 545.3L718.7 542.0L710.8 538.8L703.0 535.5L695.2 532.2L687.5 529.0L679.9 525.7L672.3 522.4L664.8 519.2L657.3 515.9L650.0 512.7L642.7 509.4L635.5 506.1L628.4 502.9L621.3 499.6L614.4 496.3L607.5 493.1L600.8 489.8L594.1 486.6L587.5 483.3L581.0 480.0L574.6 476.8L568.3 473.5L562.1 470.3L556.0 467.0L550.0 463.7L544.1 460.5L538.4 457.2L532.7 453.9L527.2 450.7L521.7 447.4L516.4 444.2L511.2 440.9L506.1 437.6L501.2 434.4L496.4 431.1L491.6 427.8L487.1 424.6L482.6 421.3L478.3 418.1L474.0 414.8L470.0 411.5L466.0 408.3L462.2 405.0L458.5 401.8L455.0 398.5L451.6 395.2L448.3 392.0L445.2 388.7L442.2 385.4L439.4 382.2L436.6 378.9L434.1 375.7L431.7 372.4L429.4 369.1L427.2 365.9L425.2 362.6L423.4 359.3L421.7 356.1L420.1 352.8L418.7 349.6L417.5 346.3L416.3 343.0L415.4 339.8L414.6 336.5L413.9 333.2L413.4 330.0L413.0 326.7L412.8 323.5L412.7 320.2L412.8 316.9L413.0 313.7L413.4 310.4L413.9 307.2L414.6 303.9L415.4 300.6L416.3 297.4L417.5 294.1L418.7 290.8L420.1 287.6L421.7 284.3L423.4 281.1L425.2 277.8L427.2 274.5L429.4 271.3L431.7 268.0L434.1 264.7L436.6 261.5L439.4 258.2L442.2 255.0L445.2 251.7L448.3 248.4L451.6 245.2L455.0 241.9L458.5 238.6L462.2 235.4L466.0 232.1L470.0 228.9L474.0 225.6L478.3 222.3L482.6 219.1L487.1 215.8L491.6 212.6L496.4 209.3L501.2 206.0L506.1 202.8L511.2 199.5L516.4 196.2L521.7 193.0L527.2 189.7L532.7 186.5L538.4 183.2L544.1 179.9L550.0 176.7L556.0 173.4L562.1 170.1L568.3 166.9L574.6 163.6L581.0 160.4L587.5 157.1L594.1 153.8L600.8 150.6L607.5 147.3L614.4 144.1L621.3 140.8L628.4 137.5L635.5 134.3L642.7 131.0L650.0 127.7L657.3 124.5L664.8 121.2L672.3 118.0L679.9 114.7L687.5 111.4L695.2 108.2L703.0 104.9L710.8 101.6L718.7 98.4L726.7 95.1L734.6 91.9L742.7 88.6L750.8 85.3L758.9 82.1L767.1 78.8L775.4 75.5L783.6 72.3L791.9 69.0L800.3 65.8L808.6 62.5L817.0 59.2L825.5 56.0L833.9 52.7L842.4 49.5L850.9 46.2L859.4 42.9L867.9 39.7L876.4 36.4L884.9 33.1L893.5 29.9L897.7 28.3"/>
<path d="M902.0 613.8L892.6 610.5L883.2 607.3L873.8 604.0L864.5 600.7L855.1 597.5L845.7 594.2L836.4 590.9L827.1 587.7L817.8 584.4L808.5 581.2L799.3 577.9L790.1 574.6L780.9 571.4L771.8 568.1L762.7 564.9L753.6 561.6L744.6 558.3L735.7 555.1L726.8 551.8L717.9 548.5L709.1 545.3L700.4 542.0L691.7 538.8L683.1 535.5L674.5 532.2L666.1 529.0L657.6 525.7L649.3 522.4L641.1 519.2L632.9 515.9L624.8 512.7L616.8 509.4L608.9 506.1L601.0 502.9L593.3 499.6L585.6 496.3L578.1 493.1L570.6 489.8L563.3 486.6L556.0 483.3L548.9 480.0L541.9 476.8L534.9 473.5L528.1 470.3L521.4 467.0L514.8 463.7L508.4 460.5L502.0 457.2L495.8 453.9L489.7 450.7L483.7 447.4L477.9 444.2L472.2 440.9L466.6 437.6L461.1 434.4L455.8 431.1L450.6 427.8L445.6 424.6L440.6 421.3L435.9 418.1L431.3 414.8L426.8 411.5L422.4 408.3L418.2 405.0L414.2 401.8L410.3 398.5L406.6 395.2L403.0 392.0L399.5 388.7L396.2 385.4L393.1 382.2L390.1 378.9L387.3 375.7L384.6 372.4L382.1 369.1L379.8 365.9L377.6 362.6L375.5 359.3L373.7 356.1L371.9 352.8L370.4 349.6L369.0 346.3L367.8 343.0L366.7 339.8L365.8 336.5L365.1 333.2L364.5 330.0L364.1 326.7L363.9 323.5L363.8 320.2L363.9 316.9L364.1 313.7L364.5 310.4L365.1 307.2L365.8 303.9L366.7 300.6L367.8 297.4L369.0 294.1L370.4 290.8L371.9 287.6L373.7 284.3L375.5 281.1L377.6 277.8L379.8 274.5L382.1 271.3L384.6 268.0L387.3 264.7L390.1 261.5L393.1 258.2L396.2 255.0L399.5 251.7L403.0 248.4L406.6 245.2L410.3 241.9L414.2 238.6L418.2 235.4L422.4 232.1L426.8 228.9L431.3 225.6L435.9 222.3L440.6 219.1L445.6 215.8L450.6 212.6L455.8 209.3L461.1 206.0L466.6 202.8L472.2 199.5L477.9 196.2L483.7 193.0L489.7 189.7L495.8 186.5L502.0 183.2L508.4 179.9L514.8 176.7L521.4 173.4L528.1 170.1L534.9 166.9L541.9 163.6L548.9 160.4L556.0 157.1L563.3 153.8L570.6 150.6L578.1 147.3L585.6 144.1L593.3 140.8L601.0 137.5L608.9 134.3L616.8 131.0L624.8 127.7L632.9 124.5L641.1 121.2L649.3 118.0L657.6 114.7L666.1 111.4L674.5 108.2L683.1 104.9L691.7 101.6L700.4 98.4L709.1 95.1L717.9 91.9L726.8 88.6L735.7 85.3L744.6 82.1L753.6 78.8L762.7 75.5L771.8 72.3L780.9 69.0L790.1 65.8L799.3 62.5L808.5 59.2L817.8 56.0L827.1 52.7L836.4 49.5L845.7 46.2L855.1 42.9L864.5 39.7L873.8 36.4L883.2 33.1L892.6 29.9L897.3 28.3"/>
<path d="M902.0 613.8L891.8 610.5L881.5 607.3L871.3 604.0L861.0 600.7L850.8 597.5L840.6 594.2L830.4 590.9L820.3 587.7L810.1 584.4L800.0 581.2L790.0 577.9L779.9 574.6L769.9 571.4L760.0 568.1L750.0 564.9L740.2 561.6L730.3 558.3L720.6 555.1L710.8 551.8L701.2 548.5L691.6 545.3L682.0 542.0L672.6 538.8L663.2 535.5L653.9 532.2L644.6 529.0L635.4 525.7L626.3 522.4L617.3 519.2L608.4 515.9L599.6 512.7L590.9 509.4L582.2 506.1L573.7 502.9L565.2 499.6L556.9 496.3L548.6 493.1L540.5 489.8L532.5 486.6L524.6 483.3L516.8 480.0L509.1 476.8L501.6 473.5L494.1 470.3L486.8 467.0L479.6 463.7L472.6 460.5L465.7 457.2L458.9 453.9L452.2 450.7L445.7 447.4L439.3 444.2L433.1 440.9L427.0 437.6L421.0 434.4L415.2 431.1L409.6 427.8L404.1 424.6L398.7 421.3L393.5 418.1L388.5 414.8L383.6 411.5L378.8 408.3L374.3 405.0L369.9 401.8L365.6 398.5L361.5 395.2L357.6 392.0L353.8 388.7L350.3 385.4L346.8 382.2L343.6 378.9L340.5 375.7L337.6 372.4L334.8 369.1L332.3 365.9L329.9 362.6L327.7 359.3L325.6 356.1L323.8 352.8L322.1 349.6L320.6 346.3L319.2 343.0L318.1 339.8L317.1 336.5L316.3 333.2L315.6 330.0L315.2 326.7L314.9 323.5L314.8 320.2L314.9 316.9L315.2 313.7L315.6 310.4L316.3 307.2L317.1 303.9L318.1 300.6L319.2 297.4L320.6 294.1L322.1 290.8L323.8 287.6L325.6 284.3L327.7 281.1L329.9 277.8L332.3 274.5L334.8 271.3L337.6 268.0L340.5 264.7L343.6 261.5L346.8 258.2L350.3 255.0L353.8 251.7L357.6 248.4L361.5 245.2L365.6 241.9L369.9 238.6L374.3 235.4L378.8 232.1L383.6 228.9L388.5 225.6L393.5 222.3L398.7 219.1L404.1 215.8L409.6 212.6L415.2 209.3L421.0 206.0L427.0 202.8L433.1 199.5L439.3 196.2L445.7 193.0L452.2 189.7L458.9 186.5L465.7 183.2L472.6 179.9L479.6 176.7L486.8 173.4L494.1 170.1L501.6 166.9L509.1 163.6L516.8 160.4L524.6 157.1L532.5 153.8L540.5 150.6L548.6 147.3L556.9 144.1L565.2 140.8L573.7 137.5L582.2 134.3L590.9 131.0L599.6 127.7L608.4 124.5L617.3 121.2L626.3 118.0L635.4 114.7L644.6 111.4L653.9 108.2L663.2 104.9L672.6 101.6L682.0 98.4L691.6 95.1L701.2 91.9L710.8 88.6L720.6 85.3L730.3 82.1L740.2 78.8L750.0 75.5L760.0 72.3L769.9 69.0L779.9 65.8L790.0 62.5L800.0 59.2L810.1 56.0L820.3 52.7L830.4 49.5L840.6 46.2L850.8 42.9L861.0 39.7L871.3 36.4L881.5 33.1L891.8 29.9L896.9 28.3"/>
<path d="M1054.0 564.9L750.0 564.9"/>
<path d="M1195.6 515.9L608.4 515.9"/>
<path d="M1317.2 467.0L486.8 467.0"/>
<path d="M1410.5 418.1L393.5 418.1"/>
<path d="M1469.2 369.1L334.8 369.1"/>
<path d="M1489.2 320.2L314.8 320.2"/>
<path d="M1469.2 271.3L334.8 271.3"/>
<path d="M1410.5 222.3L393.5 222.3"/>
<path d="M1317.2 173.4L486.8 173.4"/>
<path d="M1195.6 124.5L608.4 124.5"/>
<path d="M1054.0 75.5L750.0 75.5"/>
</g>
<g font-family="'DejaVu Sans','Liberation Sans',sans-serif" font-size="9.64" fill="#8c8c8c" text-anchor="middle">
<text x="1490.0" y="330.2">+180<tspan font-size="6.5" dx="1.8" dy="-3.4">°</tspan></text>
<text x="1392.1" y="330.2">+210<tspan font-size="6.5" dx="1.8" dy="-3.4">°</tspan></text>
<text x="1294.2" y="330.2">+240<tspan font-size="6.5" dx="1.8" dy="-3.4">°</tspan></text>
<text x="1196.4" y="330.2">+270<tspan font-size="6.5" dx="1.8" dy="-3.4">°</tspan></text>
<text x="1098.5" y="330.2">+300<tspan font-size="6.5" dx="1.8" dy="-3.4">°</tspan></text>
<text x="1000.7" y="330.2">+330<tspan font-size="6.5" dx="1.8" dy="-3.4">°</tspan></text>
<text x="902.8" y="330.2">+0<tspan font-size="6.5" dx="1.8" dy="-3.4">°</tspan></text>
<text x="804.9" y="330.2">+30<tspan font-size="6.5" dx="1.8" dy="-3.4">°</tspan></text>
<text x="707.1" y="330.2">+60<tspan font-size="6.5" dx="1.8" dy="-3.4">°</tspan></text>
<text x="609.2" y="330.2">+90<tspan font-size="6.5" dx="1.8" dy="-3.4">°</tspan></text>
<text x="511.4" y="330.2">+120<tspan font-size="6.5" dx="1.8" dy="-3.4">°</tspan></text>
<text x="413.5" y="330.2">+150<tspan font-size="6.5" dx="1.8" dy="-3.4">°</tspan></text>
<text x="315.6" y="330.2">+180<tspan font-size="6.5" dx="1.8" dy="-3.4">°</tspan></text>
<text x="902.8" y="24.6">+90<tspan font-size="6.5" dx="1.8" dy="-3.4">°</tspan></text>
<text x="902.8" y="122.5">+60<tspan font-size="6.5" dx="1.8" dy="-3.4">°</tspan></text>
<text x="902.8" y="220.3">+30<tspan font-size="6.5" dx="1.8" dy="-3.4">°</tspan></text>
<text x="902.8" y="428.1">-30<tspan font-size="6.5" dx="1.8" dy="-3.4">°</tspan></text>
<text x="902.8" y="525.9">-60<tspan font-size="6.5" dx="1.8" dy="-3.4">°</tspan></text>
<text x="902.8" y="623.8">-90<tspan font-size="6.5" dx="1.8" dy="-3.4">°</tspan></text>
</g>
<g fill="none" stroke="#fff" stroke-width="1.39" stroke-dasharray="1.39 2.29">
<path d="M591.7 406.9L590.1 405.3L588.5 403.7L586.9 402.1L585.4 400.5L583.9 398.8L582.4 397.2L580.9 395.6L579.4 394.0L578.0 392.4L576.6 390.8L575.2 389.2L573.9 387.6L572.6 386.0L571.3 384.4L570.0 382.8L568.7 381.2L567.5 379.6L566.3 378.0L565.1 376.3L563.9 374.7L562.8 373.1L561.7 371.5L560.6 369.9L559.6 368.3L558.5 366.7L557.5 365.1L556.6 363.5L555.6 361.9L554.7 360.3L553.8 358.6L552.9 357.0L552.1 355.4L551.2 353.8L550.4 352.2L549.7 350.6L548.9 349.0L548.2 347.4L547.5 345.8L546.8 344.2L546.2 342.5L545.6 340.9L545.0 339.3L544.4 337.7L543.9 336.1L543.4 334.5L542.9 332.9L542.4 331.3L542.0 329.7L541.6 328.1L541.2 326.4L540.9 324.8L540.6 323.2L540.3 321.6L540.0 320.0L539.8 318.4L539.5 316.8L539.4 315.2L539.2 313.6L539.1 311.9L539.0 310.3L538.9 308.7L538.8 307.1L538.8 305.5L538.8 303.9L538.8 302.3L538.9 300.7L539.0 299.1L539.1 297.5L539.2 295.8L539.4 294.2L539.6 292.6L539.8 291.0L540.0 289.4L540.3 287.8L540.6 286.2L540.9 284.6L541.3 283.0L541.6 281.4L542.0 279.7L542.5 278.1L542.9 276.5L543.4 274.9L543.9 273.3L544.5 271.7L545.0 270.1L545.6 268.5L546.2 266.9L546.9 265.3L547.5 263.7L548.2 262.0L549.0 260.4L549.7 258.8L550.5 257.2L551.3 255.6L552.1 254.0L553.0 252.4L553.8 250.8L554.7 249.2L555.7 247.6L556.6 246.0L557.6 244.4L558.6 242.8L559.6 241.2L560.7 239.5L561.8 237.9L562.9 236.3L564.0 234.7L565.1 233.1L566.3 231.5L567.5 229.9L568.8 228.3L570.0 226.7L571.3 225.1L572.6 223.5L573.9 221.9L575.3 220.3L576.6 218.7L578.0 217.1L579.4 215.5L580.9 213.9L582.3 212.3L583.8 210.7L585.3 209.1L586.9 207.5L588.4 205.9L590.0 204.3L591.6 202.7L593.2 201.1L594.9 199.5L596.6 197.9L598.2 196.3L600.0 194.7L601.7 193.1L603.4 191.5L605.2 189.9L607.0 188.3L608.8 186.7L610.7 185.1L612.5 183.5L614.4 181.9L616.3 180.3L618.2 178.7L620.2 177.1L622.1 175.6L624.1 174.0L626.1 172.4L628.1 170.8L630.1 169.2L632.2 167.6L634.3 166.0L636.4 164.4L638.5 162.8L640.6 161.3L642.7 159.7L644.9 158.1L647.1 156.5L649.2 154.9L651.5 153.4L653.7 151.8L655.9 150.2L658.2 148.6L660.4 147.1L662.7 145.5L665.0 143.9L667.3 142.3L669.7 140.8L672.0 139.2L674.4 137.6L676.7 136.1L679.1 134.5L681.5 133.0L683.9 131.4L686.3 129.8L688.7 128.3L691.2 126.7L693.6 125.2L696.1 123.6L698.5 122.1L701.0 120.6L703.5 119.0L706.0 117.5L708.5 115.9L711.0 114.4L713.5 112.9L716.0 111.4L718.5 109.8L721.1 108.3L723.6 106.8L726.1 105.3L728.6 103.8L731.2 102.3L733.7 100.8L736.2 99.3L738.8 97.9L741.3 96.4L743.8 94.9L746.3 93.5L748.8 92.0L751.3 90.6L753.8 89.1L756.3 87.7L758.7 86.3L761.1 84.9L763.6 83.5L766.0 82.1L768.3 80.8L770.7 79.4L773.0 78.1L775.2 76.8L777.5 75.5L779.7 74.2L781.8 72.9L783.9 71.7L785.9 70.5L787.9 69.3L789.8 68.1L791.6 67.0L793.3 65.9L794.9 64.9L796.4 63.9L797.8 62.9L799.0 62.0L800.1 61.2L801.1 60.4L801.8 59.6L802.4 58.9M1001.1 58.3L997.9 57.8L994.9 57.3L992.2 57.0L989.8 56.7L987.5 56.5L985.6 56.3L983.9 56.3L982.4 56.4L981.1 56.5L980.1 56.7L979.3 57.1L978.7 57.4L978.3 57.9L978.1 58.5L978.1 59.1L978.2 59.8L978.4 60.6L978.8 61.4L979.3 62.2L980.0 63.2L980.7 64.1L981.5 65.2L982.4 66.2L983.3 67.3L984.3 68.4L985.4 69.6L986.6 70.8L987.7 72.0L989.0 73.2L990.2 74.5L991.5 75.8L992.8 77.1L994.2 78.4" stroke-opacity="0.16"/>
<path d="M610.9 410.0L609.4 408.3L607.9 406.7L606.4 405.1L605.0 403.5L603.6 401.9L602.1 400.3L600.7 398.7L599.4 397.0L598.0 395.4L596.7 393.8L595.4 392.2L594.1 390.6L592.9 389.0L591.6 387.3L590.4 385.7L589.2 384.1L588.1 382.5L586.9 380.9L585.8 379.2L584.7 377.6L583.7 376.0L582.6 374.4L581.6 372.8L580.6 371.2L579.6 369.5L578.7 367.9L577.8 366.3L576.9 364.7L576.0 363.1L575.1 361.5L574.3 359.8L573.5 358.2L572.7 356.6L572.0 355.0L571.3 353.4L570.6 351.7L569.9 350.1L569.2 348.5L568.6 346.9L568.0 345.3L567.4 343.6L566.9 342.0L566.3 340.4L565.8 338.8L565.4 337.2L564.9 335.6L564.5 333.9L564.1 332.3L563.7 330.7L563.4 329.1L563.0 327.5L562.7 325.8L562.5 324.2L562.2 322.6L562.0 321.0L561.8 319.4L561.6 317.7L561.5 316.1L561.3 314.5L561.3 312.9L561.2 311.3L561.1 309.7L561.1 308.0L561.1 306.4L561.2 304.8L561.2 303.2L561.3 301.6L561.4 299.9L561.5 298.3L561.7 296.7L561.9 295.1L562.1 293.5L562.3 291.8L562.6 290.2L562.9 288.6L563.2 287.0L563.5 285.4L563.9 283.8L564.3 282.1L564.7 280.5L565.1 278.9L565.6 277.3L566.1 275.7L566.6 274.0L567.1 272.4L567.7 270.8L568.3 269.2L568.9 267.6L569.6 266.0L570.2 264.3L570.9 262.7L571.6 261.1L572.4 259.5L573.1 257.9L573.9 256.2L574.7 254.6L575.6 253.0L576.4 251.4L577.3 249.8L578.2 248.2L579.2 246.5L580.1 244.9L581.1 243.3L582.1 241.7L583.1 240.1L584.2 238.5L585.3 236.8L586.4 235.2L587.5 233.6L588.6 232.0L589.8 230.4L591.0 228.8L592.2 227.2L593.5 225.5L594.7 223.9L596.0 222.3L597.3 220.7L598.7 219.1L600.0 217.5L601.4 215.8L602.8 214.2L604.2 212.6L605.7 211.0L607.1 209.4L608.6 207.8L610.1 206.2L611.7 204.6L613.2 202.9L614.8 201.3L616.4 199.7L618.0 198.1L619.6 196.5L621.3 194.9L623.0 193.3L624.6 191.7L626.4 190.0L628.1 188.4L629.9 186.8L631.6 185.2L633.4 183.6L635.2 182.0L637.1 180.4L638.9 178.8L640.8 177.2L642.7 175.6L644.6 174.0L646.5 172.4L648.5 170.7L650.5 169.1L652.4 167.5L654.4 165.9L656.5 164.3L658.5 162.7L660.6 161.1L662.6 159.5L664.7 157.9L666.8 156.3L668.9 154.7L671.1 153.1L673.2 151.5L675.4 149.9L677.6 148.3L679.8 146.7L682.0 145.1L684.2 143.5L686.5 141.9L688.7 140.3L691.0 138.7L693.3 137.2L695.6 135.6L697.9 134.0L700.2 132.4L702.5 130.8L704.9 129.2L707.2 127.6L709.6 126.0L712.0 124.5L714.4 122.9L716.8 121.3L719.2 119.7L721.6 118.1L724.1 116.6L726.5 115.0L729.0 113.4L731.4 111.9L733.9 110.3L736.4 108.7L738.9 107.2L741.4 105.6L743.9 104.0L746.4 102.5L748.9 100.9L751.4 99.4L753.9 97.9L756.4 96.3L758.9 94.8L761.5 93.2L764.0 91.7L766.5 90.2L769.0 88.7L771.5 87.2L774.0 85.7L776.5 84.2L779.0 82.7L781.5 81.2L784.0 79.7L786.5 78.3L788.9 76.8L791.3 75.4L793.7 73.9L796.1 72.5L798.5 71.1L800.8 69.7L803.1 68.3L805.4 67.0L807.6 65.7L809.8 64.3L811.9 63.1L813.9 61.8L815.9 60.6L817.8 59.4L819.6 58.2L821.2 57.1L822.8 56.1L824.2 55.1L825.5 54.1L826.5 53.3L827.4 52.4L828.1 51.7L828.4 51.1L828.6 50.5M975.5 50.1L972.8 49.8L970.5 49.5L968.6 49.4L966.9 49.4L965.6 49.5L964.6 49.8L964.0 50.1L963.6 50.6L963.4 51.1L963.5 51.7L963.8 52.5L964.3 53.3L964.9 54.2L965.7 55.1L966.6 56.1L967.7 57.2L968.8 58.3L970.0 59.4L971.3 60.6L972.7 61.8L974.1 63.1L975.6 64.4L977.1 65.7L978.7 67.0L980.3 68.4L982.0 69.8L983.6 71.1L985.3 72.6L987.0 74.0L988.7 75.4L990.5 76.8L992.2 78.3" stroke-opacity="0.28"/>
<path d="M658.0 406.6L657.6 405.1L657.2 403.5L656.9 402.0L656.5 400.5L656.2 399.0L655.9 397.4L655.6 395.9L655.3 394.4L655.0 392.9L654.8 391.3L654.5 389.8L654.3 388.3L654.1 386.7L653.9 385.2L653.8 383.7L653.6 382.1L653.5 380.6L653.4 379.1L653.3 377.5L653.2 376.0L653.1 374.5L653.0 372.9L653.0 371.4L653.0 369.9L653.0 368.3L653.0 366.8L653.0 365.2L653.1 363.7L653.1 362.2L653.2 360.6L653.3 359.1L653.4 357.6L653.5 356.0L653.7 354.5L653.9 352.9L654.0 351.4L654.2 349.8L654.4 348.3L654.7 346.8L654.9 345.2L655.2 343.7L655.5 342.1L655.8 340.6L656.1 339.0L656.4 337.5L656.8 336.0L657.1 334.4L657.5 332.9L657.9 331.3L658.3 329.8L658.8 328.2L659.2 326.7L659.7 325.2L660.1 323.6L660.6 322.1L661.2 320.5L661.7 319.0L662.2 317.4L662.8 315.9L663.4 314.3L664.0 312.8L664.6 311.3L665.2 309.7L665.9 308.2L666.5 306.6L667.2 305.1L667.9 303.5L668.6 302.0L669.3 300.5L670.1 298.9L670.8 297.4L671.6 295.8L672.4 294.3L673.2 292.7L674.0 291.2L674.8 289.7L675.7 288.1L676.5 286.6L677.4 285.0L678.3 283.5L679.2 282.0L680.2 280.4L681.1 278.9L682.1 277.3L683.0 275.8L684.0 274.3L685.0 272.7L686.0 271.2L687.0 269.6L688.1 268.1L689.1 266.6L690.2 265.0L691.3 263.5L692.4 262.0L693.5 260.4L694.6 258.9L695.8 257.4L696.9 255.8L698.1 254.3L699.3 252.8L700.5 251.2L701.7 249.7L702.9 248.2L704.1 246.7L705.4 245.1L706.7 243.6L707.9 242.1L709.2 240.5L710.5 239.0L711.8 237.5L713.1 236.0L714.5 234.4L715.8 232.9L717.2 231.4L718.6 229.9L719.9 228.4L721.3 226.8L722.7 225.3L724.2 223.8L725.6 222.3L727.0 220.8L728.5 219.3L729.9 217.8L731.4 216.3L732.9 214.7L734.4 213.2L735.9 211.7L737.4 210.2L738.9 208.7L740.4 207.2L742.0 205.7L743.5 204.2L745.1 202.7L746.6 201.2L748.2 199.7L749.8 198.3L751.4 196.8L753.0 195.3L754.6 193.8L756.2 192.3L757.9 190.8L759.5 189.3L761.1 187.9L762.8 186.4L764.4 184.9L766.1 183.4L767.8 182.0L769.4 180.5L771.1 179.0L772.8 177.6L774.5 176.1L776.2 174.7L777.9 173.2L779.6 171.8L781.3 170.3L783.1 168.9L784.8 167.4L786.5 166.0L788.3 164.6L790.0 163.1L791.8 161.7L793.5 160.3L795.3 158.9L797.0 157.5L798.8 156.0L800.5 154.6L802.3 153.2L804.1 151.8L805.8 150.4L807.6 149.1L809.4 147.7L811.2 146.3L812.9 144.9L814.7 143.6L816.5 142.2L818.3 140.9L820.0 139.5L821.8 138.2L823.6 136.8L825.4 135.5L827.2 134.2L828.9 132.9L830.7 131.6L832.5 130.3L834.3 129.0L836.0 127.7L837.8 126.5L839.6 125.2L841.3 124.0L843.1 122.7L844.8 121.5L846.6 120.3L848.3 119.1L850.1 117.9L851.8 116.7L853.5 115.5L855.3 114.4L857.0 113.2L858.7 112.1L860.4 111.0L862.1 109.9L863.8 108.8L865.5 107.8L867.2 106.8L868.9 105.7L870.6 104.7L872.2 103.7L873.9 102.8L875.5 101.9L877.2 100.9L878.8 100.0L880.5 99.2L882.1 98.3L883.7 97.5L885.3 96.7L886.9 96.0L888.5 95.2L890.1 94.5L891.7 93.9L893.3 93.2L894.9 92.6L896.5 92.0L898.0 91.5L899.6 91.0L901.2 90.5L902.8 90.1L904.3 89.7L905.9 89.3L907.5 89.0L909.1 88.8L910.7 88.5L912.3 88.3L913.8 88.2L915.5 88.1L917.1 88.0L918.7 88.0L920.3 88.0L922.0 88.0L923.6 88.1L925.3 88.3L927.0 88.4L928.7 88.6L930.4 88.9L932.2 89.2L933.9 89.5L935.7 89.9L937.5 90.3L939.3 90.8L941.1 91.3L943.0 91.8L944.9 92.4L946.8 93.0" stroke-opacity="0.19"/>
<path d="M946.8 93.0L948.7 93.6L950.6 94.2L952.6 94.9L954.6 95.7L956.6 96.4L958.6 97.2L960.6 98.0L962.7 98.8L964.8 99.7L966.8 100.6L969.0 101.5L971.1 102.4L973.3 103.3L975.4 104.3L977.6 105.3L979.8 106.3L982.0 107.4L984.2 108.4L986.5 109.5L988.7 110.6L991.0 111.7L993.3 112.8L995.6 113.9L997.9 115.1L1000.2 116.2L1002.5 117.4L1004.9 118.6L1007.2 119.8L1009.6 121.0L1011.9 122.2L1014.3 123.4L1016.6 124.7L1019.0 125.9L1021.4 127.2L1023.8 128.5L1026.2 129.7L1028.6 131.0L1031.0 132.3L1033.4 133.6L1035.8 135.0L1038.2 136.3L1040.6 137.6L1043.0 138.9L1045.4 140.3L1047.8 141.6L1050.2 143.0L1052.6 144.4L1055.0 145.7L1057.4 147.1L1059.8 148.5L1062.2 149.9L1064.6 151.3L1067.0 152.7L1069.3 154.0L1071.7 155.5L1074.1 156.9L1076.5 158.3L1078.8 159.7L1081.2 161.1L1083.5 162.5L1085.9 164.0L1088.2 165.4L1090.5 166.8L1092.9 168.3L1095.2 169.7L1097.5 171.2L1099.8 172.6L1102.1 174.1L1104.3 175.5L1106.6 177.0L1108.9 178.4L1111.1 179.9" stroke-opacity="0.10"/>
<path d="M820.4 410.4L820.0 408.8L819.5 407.1L819.0 405.5L818.6 403.9L818.1 402.3L817.7 400.6L817.2 399.0L816.8 397.4L816.4 395.7L815.9 394.1L815.5 392.5L815.1 390.9L814.7 389.2L814.3 387.6L813.9 386.0L813.5 384.4L813.2 382.7L812.8 381.1L812.4 379.5L812.1 377.8L811.7 376.2L811.4 374.6L811.1 373.0L810.7 371.3L810.4 369.7L810.1 368.1L809.8 366.4L809.5 364.8L809.2 363.2L808.9 361.6L808.6 359.9L808.4 358.3L808.1 356.7L807.8 355.0L807.6 353.4L807.3 351.8L807.1 350.2L806.9 348.5L806.7 346.9L806.4 345.3L806.2 343.7L806.0 342.0L805.8 340.4L805.7 338.8L805.5 337.1L805.3 335.5L805.1 333.9L805.0 332.3L804.8 330.6L804.7 329.0L804.6 327.4L804.4 325.7L804.3 324.1L804.2 322.5L804.1 320.9L804.0 319.2L803.9 317.6L803.8 316.0L803.8 314.3L803.7 312.7L803.6 311.1L803.6 309.5L803.5 307.8L803.5 306.2L803.5 304.6L803.4 303.0L803.4 301.3L803.4 299.7L803.4 298.1L803.4 296.4L803.5 294.8L803.5 293.2L803.5 291.6L803.5 289.9L803.6 288.3L803.6 286.7L803.7 285.0L803.8 283.4L803.8 281.8L803.9 280.2L804.0 278.5L804.1 276.9L804.2 275.3L804.3 273.6L804.4 272.0L804.6 270.4L804.7 268.8L804.9 267.1L805.0 265.5L805.2 263.9L805.3 262.3L805.5 260.6L805.7 259.0L805.9 257.4L806.0 255.7L806.2 254.1L806.5 252.5L806.7 250.9L806.9 249.2L807.1 247.6L807.4 246.0L807.6 244.3L807.9 242.7L808.1 241.1L808.4 239.5L808.6 237.8L808.9 236.2L809.2 234.6L809.5 233.0L809.8 231.3L810.1 229.7L810.4 228.1L810.7 226.4L811.1 224.8L811.4 223.2L811.8 221.6L812.1 219.9L812.5 218.3L812.8 216.7L813.2 215.1L813.6 213.4L813.9 211.8L814.3 210.2L814.7 208.5L815.1 206.9L815.5 205.3L816.0 203.7L816.4 202.0L816.8 200.4L817.2 198.8L817.7 197.2L818.1 195.5L818.6 193.9L819.0 192.3L819.5 190.7L820.0 189.0L820.5 187.4L820.9 185.8L821.4 184.2L821.9 182.5L822.4 180.9L822.9 179.3L823.5 177.7L824.0 176.0L824.5 174.4L825.0 172.8L825.6 171.2L826.1 169.5L826.7 167.9L827.2 166.3L827.8 164.7L828.4 163.0L828.9 161.4L829.5 159.8L830.1 158.2L830.7 156.5L831.3 154.9L831.9 153.3L832.5 151.7L833.1 150.0L833.7 148.4L834.3 146.8L834.9 145.2L835.6 143.5L836.2 141.9L836.8 140.3L837.5 138.7L838.1 137.1L838.8 135.4L839.4 133.8L840.1 132.2L840.8 130.6L841.4 129.0L842.1 127.3L842.8 125.7L843.5 124.1L844.2 122.5L844.9 120.9L845.6 119.2L846.3 117.6L847.0 116.0L847.7 114.4L848.4 112.8L849.1 111.2L849.8 109.5L850.5 107.9L851.3 106.3L852.0 104.7L852.7 103.1L853.5 101.5L854.2 99.9L855.0 98.2L855.7 96.6L856.5 95.0L857.2 93.4L858.0 91.8L858.7 90.2L859.5 88.6L860.2 87.0L861.0 85.4L861.8 83.8L862.5 82.2L863.3 80.6L864.1 79.0L864.8 77.4L865.6 75.8L866.4 74.3L867.2 72.7L867.9 71.1L868.7 69.5L869.5 67.9L870.2 66.4L871.0 64.8L871.8 63.3L872.5 61.7L873.3 60.2L874.0 58.6L874.8 57.1L875.5 55.6L876.3 54.1L877.0 52.6L877.7 51.2L878.3 49.7L879.0 48.3L879.6 46.9L880.2 45.6L880.7 44.3L881.1 43.1L881.5 41.9L881.7 40.9L881.8 39.9L881.6 39.1L881.2 38.5L880.4 38.0L879.2 37.8L877.5 37.8L875.3 38.1L872.7 38.6L869.5 39.2L865.9 40.1L861.9 41.0L857.7 42.1L853.2 43.3L848.4 44.5L843.5 45.8L838.5 47.2L833.4 48.6M974.6 50.0L978.3 51.4L982.0 52.9" stroke-opacity="0.17"/>
<path d="M982.0 52.9L985.8 54.4L989.6 55.9L993.5 57.4L997.4 58.9L1001.3 60.5L1005.2 62.0L1009.2 63.6L1013.2 65.1L1017.1 66.7L1021.1 68.2L1025.1 69.8L1029.1 71.4L1033.0 73.0L1037.0 74.6L1041.0 76.1L1045.0 77.7L1049.0 79.3L1052.9 80.9L1056.9 82.5L1060.8 84.1L1064.8 85.7L1068.7 87.3L1072.7 88.9L1076.6 90.5L1080.5 92.1L1084.4 93.7L1088.3 95.3L1092.2 96.9L1096.1 98.6L1100.0 100.2L1103.8 101.8L1107.6 103.4L1111.5 105.0L1115.3 106.6L1119.1 108.2L1122.8 109.8L1126.6 111.5L1130.4 113.1L1134.1 114.7L1137.8 116.3L1141.5 117.9L1145.2 119.5L1148.9 121.2L1152.5 122.8L1156.1 124.4L1159.8 126.0L1163.4 127.6L1166.9 129.3L1170.5 130.9L1174.0 132.5L1177.5 134.1L1181.0 135.7L1184.5 137.4L1188.0 139.0L1191.4 140.6L1194.8 142.2L1198.2 143.9L1201.6 145.5L1204.9 147.1L1208.3 148.7L1211.6 150.3L1214.8 152.0L1218.1 153.6L1221.3 155.2L1224.5 156.8L1227.7 158.5L1230.9 160.1L1234.0 161.7L1237.1 163.3L1240.2 165.0L1243.3 166.6L1246.3 168.2L1249.3 169.8L1252.3 171.5L1255.3 173.1L1258.2 174.7L1261.1 176.3L1264.0 178.0L1266.8 179.6L1269.7 181.2L1272.4 182.8L1275.2 184.5L1278.0 186.1L1280.7 187.7L1283.3 189.3L1286.0 191.0L1288.6 192.6L1291.2 194.2L1293.8 195.8L1296.3 197.5L1298.8 199.1L1301.3 200.7L1303.8 202.4L1306.2 204.0L1308.6 205.6L1310.9 207.2L1313.2 208.9L1315.5 210.5L1317.8 212.1L1320.0 213.7L1322.2 215.4L1324.4 217.0L1326.5 218.6L1328.6 220.2" stroke-opacity="0.06"/>
<path d="M775.9 410.9L775.8 409.3L775.6 407.8L775.5 406.2L775.4 404.6L775.3 403.0L775.2 401.4L775.1 399.9L775.0 398.3L774.9 396.7L774.9 395.1L774.8 393.5L774.8 391.9L774.7 390.4L774.7 388.8L774.7 387.2L774.7 385.6L774.6 384.0L774.7 382.4L774.7 380.9L774.7 379.3L774.7 377.7L774.8 376.1L774.8 374.5L774.9 372.9L775.0 371.3L775.0 369.8L775.1 368.2L775.2 366.6L775.3 365.0L775.4 363.4L775.6 361.8L775.7 360.2L775.8 358.6L776.0 357.1L776.2 355.5L776.3 353.9L776.5 352.3L776.7 350.7L776.9 349.1L777.1 347.5L777.3 345.9L777.5 344.3L777.8 342.8L778.0 341.2L778.3 339.6L778.5 338.0L778.8 336.4L779.1 334.8L779.4 333.2L779.7 331.6L780.0 330.0L780.3 328.4L780.6 326.9L780.9 325.3L781.3 323.7L781.6 322.1L782.0 320.5L782.4 318.9L782.7 317.3L783.1 315.7L783.5 314.1L783.9 312.5L784.3 311.0L784.7 309.4L785.2 307.8L785.6 306.2L786.0 304.6L786.5 303.0L786.9 301.4L787.4 299.8L787.9 298.2L788.4 296.7L788.9 295.1L789.4 293.5L789.9 291.9L790.4 290.3L790.9 288.7L791.5 287.1L792.0 285.5L792.5 283.9L793.1 282.4L793.7 280.8L794.2 279.2L794.8 277.6L795.4 276.0L796.0 274.4L796.6 272.8L797.2 271.2L797.8 269.7L798.5 268.1L799.1 266.5L799.7 264.9L800.4 263.3L801.0 261.7L801.7 260.1L802.4 258.6L803.1 257.0L803.7 255.4L804.4 253.8L805.1 252.2L805.8 250.6L806.5 249.0L807.3 247.5L808.0 245.9L808.7 244.3L809.5 242.7L810.2 241.1L811.0 239.6L811.7 238.0L812.5 236.4L813.3 234.8L814.0 233.2L814.8 231.7L815.6 230.1L816.4 228.5L817.2 226.9L818.0 225.3L818.8 223.8L819.6 222.2L820.5 220.6L821.3 219.0L822.1 217.5L823.0 215.9L823.8 214.3L824.7 212.7L825.5 211.2L826.4 209.6L827.3 208.0L828.1 206.5L829.0 204.9L829.9 203.3L830.8 201.8L831.7 200.2L832.6 198.6L833.5 197.1L834.4 195.5L835.3 193.9L836.2 192.4L837.1 190.8L838.0 189.2L839.0 187.7L839.9 186.1L840.8 184.6L841.8 183.0L842.7 181.5L843.7 179.9L844.6 178.3L845.6 176.8L846.5 175.2L847.5 173.7L848.5 172.2L849.4 170.6L850.4 169.1L851.4 167.5L852.4 166.0L853.3 164.4L854.3 162.9L855.3 161.4L856.3 159.8L857.3 158.3L858.3 156.8L859.3 155.2L860.3 153.7L861.3 152.2L862.3 150.7L863.3 149.1L864.3 147.6L865.3 146.1L866.3 144.6L867.3 143.1L868.3 141.6L869.3 140.1L870.4 138.6L871.4 137.1L872.4 135.6L873.4 134.1L874.4 132.6L875.5 131.1L876.5 129.7L877.5 128.2L878.5 126.7L879.5 125.3L880.6 123.8L881.6 122.3L882.6 120.9L883.6 119.4L884.7 118.0L885.7 116.6L886.7 115.1L887.7 113.7L888.8 112.3L889.8 110.9L890.8 109.5L891.8 108.1L892.9 106.7L893.9 105.4L894.9 104.0L895.9 102.7L896.9 101.3L898.0 100.0L899.0 98.7L900.0 97.4L901.0 96.1L902.0 94.8L903.1 93.5L904.1 92.3L905.1 91.0L906.1 89.8L907.1 88.6L908.2 87.4L909.2 86.3L910.2 85.1L911.2 84.0L912.3 82.9L913.3 81.9L914.4 80.8L915.4 79.8L916.5 78.9L917.5 77.9L918.6 77.0L919.7 76.1L920.8 75.3L921.9 74.5L923.0 73.7L924.2 73.0L925.3 72.4L926.5 71.8L927.7 71.2L929.0 70.7L930.3 70.2L931.6 69.8L932.9 69.5L934.3 69.2L935.8 69.0L937.3 68.8L938.8 68.7L940.4 68.6L942.1 68.7L943.8 68.7L945.5 68.9L947.4 69.1L949.3 69.4L951.2 69.7L953.2 70.1L955.3 70.5L957.5 71.0L959.7 71.5L962.0 72.1L964.3 72.8L966.7 73.5L969.2 74.2L971.7 75.0L974.3 75.8L976.9 76.7L979.6 77.6L982.3 78.5L985.1 79.5L987.9 80.5L990.8 81.5L993.7 82.5L996.6 83.6L999.6 84.7" stroke-opacity="0.17"/>
<path d="M999.6 84.7L1002.7 85.9L1005.7 87.0L1008.8 88.2L1011.9 89.4L1015.0 90.6L1018.2 91.8L1021.4 93.0L1024.6 94.3L1027.8 95.6L1031.1 96.9L1034.4 98.2L1037.6 99.5L1040.9 100.8L1044.2 102.2L1047.6 103.5L1050.9 104.9L1054.2 106.2L1057.6 107.6L1060.9 109.0L1064.3 110.4L1067.7 111.8L1071.0 113.2L1074.4 114.6L1077.8 116.0L1081.2 117.5L1084.6 118.9L1087.9 120.3L1091.3 121.8L1094.7 123.2L1098.1 124.7L1101.4 126.2L1104.8 127.6L1108.2 129.1L1111.5 130.6L1114.9 132.1L1118.2 133.6L1121.6 135.0L1124.9 136.5L1128.2 138.0L1131.5 139.5L1134.8 141.0L1138.1 142.5L1141.4 144.0L1144.7 145.5L1147.9 147.1L1151.2 148.6L1154.4 150.1L1157.7 151.6L1160.9 153.1L1164.1 154.7L1167.3 156.2L1170.4 157.7L1173.6 159.3L1176.7 160.8L1179.9 162.3L1183.0 163.9L1186.1 165.4L1189.2 166.9L1192.2 168.5L1195.3 170.0L1198.3 171.6L1201.3 173.1L1204.3 174.7L1207.3 176.2L1210.2 177.8L1213.2 179.3L1216.1 180.9L1219.0 182.4L1221.8 184.0L1224.7 185.5L1227.5 187.1L1230.4 188.7L1233.1 190.2L1235.9 191.8L1238.7 193.3L1241.4 194.9L1244.1 196.5L1246.8 198.0L1249.4 199.6L1252.1 201.2L1254.7 202.7L1257.3 204.3L1259.8 205.9L1262.4 207.4L1264.9 209.0L1267.4 210.6L1269.8 212.2L1272.3 213.7L1274.7 215.3L1277.1 216.9L1279.5 218.4L1281.8 220.0L1284.1 221.6L1286.4 223.2L1288.6 224.7L1290.9 226.3" stroke-opacity="0.06"/>
</g>
<g fill="none" stroke-width="1.39">
<path d="M739.1 315.2L739.1 314.4L739.0 313.6L739.0 312.8L739.0 312.0L738.9 311.1L738.9 310.3L738.9 309.5L738.9 308.7L738.9 307.9L738.8 307.1L738.8 306.3L738.8 305.5L738.8 304.6L738.8 303.8L738.8 303.0L738.8 302.2L738.8 301.4L738.9 300.6L738.9 299.8L738.9 299.0L738.9 298.1L738.9 297.3L739.0 296.5L739.0 295.7L739.0 294.9L739.1 294.1L739.1 293.3L739.1 292.5L739.2 291.6L739.2 290.8L739.3 290.0L739.3 289.2L739.4 288.4L739.5 287.6L739.5 286.8L739.6 286.0L739.7 285.1L739.7 284.3L739.8 283.5L739.9 282.7L740.0 281.9L740.1 281.1L740.2 280.3L740.3 279.5L740.4 278.6L740.4 277.8L740.6 277.0L740.7 276.2L740.8 275.4L740.9 274.6L741.0 273.8L741.1 273.0L741.2 272.2L741.3 271.3L741.5 270.5L741.6 269.7L741.7 268.9L741.9 268.1L742.0 267.3L742.1 266.5L742.3 265.7L742.4 264.8L742.6 264.0L742.7 263.2L742.9 262.4L743.1 261.6L743.2 260.8L743.4 260.0L743.5 259.2L743.7 258.3L743.9 257.5L744.1 256.7L744.3 255.9L744.4 255.1L744.6 254.3L744.8 253.5L745.0 252.7L745.2 251.9L745.4 251.0L745.6 250.2L745.8 249.4L746.0 248.6L746.2 247.8L746.4 247.0L746.6 246.2L746.9 245.4L747.1 244.5L747.3 243.7L747.5 242.9L747.8 242.1L748.0 241.3L748.2 240.5L748.5 239.7L748.7 238.9L749.0 238.0L749.2 237.2L749.5 236.4L749.7 235.6L750.0 234.8L750.2 234.0L750.5 233.2L750.7 232.4L751.0 231.6L751.3 230.7L751.6 229.9L751.8 229.1L752.1 228.3L752.4 227.5L752.7 226.7L753.0 225.9L753.3 225.1L753.5 224.3L753.8 223.4L754.1 222.6L754.4 221.8L754.7 221.0L755.0 220.2L755.4 219.4L755.7 218.6L756.0 217.8L756.3 216.9L756.6 216.1L756.9 215.3L757.3 214.5L757.6 213.7L757.9 212.9L758.3 212.1L758.6 211.3L758.9 210.5L759.3 209.6L759.6 208.8L760.0 208.0L760.3 207.2L760.7 206.4L761.0 205.6L761.4 204.8L761.8 204.0L762.1 203.2L762.5 202.3L762.9 201.5L763.2 200.7L763.6 199.9L764.0 199.1L764.4 198.3L764.7 197.5L765.1 196.7L765.5 195.9L765.9 195.0L766.3 194.2L766.7 193.4L767.1 192.6L767.5 191.8L767.9 191.0L768.3 190.2L768.7 189.4L769.1 188.6L769.5 187.7L769.9 186.9L770.3 186.1L770.8 185.3L771.2 184.5L771.6 183.7L772.0 182.9L772.5 182.1L772.9 181.3L773.3 180.5L773.8 179.6L774.2 178.8L774.6 178.0L775.1 177.2L775.5 176.4L776.0 175.6L776.4 174.8L776.9 174.0L777.3 173.2L777.8 172.4L778.3 171.5L778.7 170.7L779.2 169.9L779.6 169.1L780.1 168.3L780.6 167.5L781.1 166.7L781.5 165.9L782.0 165.1L782.5 164.3L783.0 163.4L783.5 162.6L783.9 161.8L784.4 161.0L784.9 160.2L785.4 159.4L785.9 158.6L786.4 157.8L786.9 157.0L787.4 156.2L787.9 155.4L788.4 154.5L788.9 153.7L789.4 152.9L790.0 152.1L790.5 151.3L791.0 150.5L791.5 149.7L792.0 148.9L792.5 148.1L793.1 147.3L793.6 146.5L794.1 145.7L794.6 144.8L795.2 144.0L795.7 143.2L796.3 142.4L796.8 141.6L797.3 140.8L797.9 140.0L798.4 139.2L799.0 138.4L799.5 137.6L800.1 136.8L800.6 136.0L801.2 135.2L801.7 134.3L802.3 133.5L802.8 132.7L803.4 131.9L803.9 131.1L804.5 130.3L805.1 129.5L805.6 128.7L806.2 127.9L806.8 127.1L807.4 126.3L807.9 125.5L808.5 124.7L809.1 123.9L809.7 123.1L810.2 122.3L810.8 121.4L811.4 120.6L812.0 119.8L812.6 119.0L813.2 118.2L813.7 117.4L814.3 116.6L814.9 115.8L815.5 115.0L816.1 114.2L816.7 113.4L817.3 112.6L817.9 111.8L818.5 111.0L819.1 110.2L819.7 109.4L820.3 108.6L820.9 107.8L821.5 107.0L822.1 106.2L822.8 105.4L823.4 104.6L824.0 103.8L824.6 103.0L825.2 102.2L825.8 101.4L826.4 100.6L827.0 99.8L827.7 99.0L828.3 98.2L828.9 97.4L829.5 96.6L830.2 95.8L830.8 95.0L831.4 94.2L832.0 93.4L832.7 92.6L833.3 91.8L833.9 91.0L834.5 90.2L835.2 89.4L835.8 88.6L836.4 87.8L837.1 87.1L837.7 86.3L838.3 85.5L838.9 84.7L839.6 83.9L840.2 83.1L840.8 82.3L841.5 81.5L842.1 80.7L842.8 79.9L843.4 79.2L844.0 78.4L844.7 77.6L845.3 76.8L845.9 76.0L846.6 75.3L847.2 74.5L847.8 73.7L848.5 72.9L849.1 72.1L849.7 71.4L850.4 70.6L851.0 69.8L851.6 69.1L852.2 68.3L852.9 67.5L853.5 66.8L854.1 66.0L854.7 65.2L855.4 64.5L856.0 63.7L856.6 63.0L857.2 62.2L857.8 61.5L858.4 60.7L859.0 60.0L859.6 59.2L860.2 58.5L860.8 57.8L861.4 57.0L862.0 56.3L862.6 55.6L863.1 54.9L863.7 54.2L864.3 53.5L864.8 52.8L865.3 52.1L865.9 51.4L866.4 50.8L866.9 50.1L867.4 49.4L867.8 48.8L868.3 48.2L868.7 47.6L869.1 47.0L869.5 46.4L869.9 45.8L870.2 45.2L870.5 44.7L870.8 44.2L871.0 43.7L871.2 43.3L871.3 42.8L871.4 42.4L871.4 42.0L871.3 41.7L871.2 41.4L871.0 41.1L870.6 40.9L870.2 40.7L869.7 40.6L869.1 40.5L868.4 40.5L867.5 40.5L866.6 40.6L865.5 40.7L864.3 40.8L863.0 41.0L861.6 41.3L860.0 41.5L858.4 41.9L856.6 42.2L854.8 42.6L852.8 43.0L850.8 43.5L848.7 43.9L846.5 44.4M959.3 45.0L960.3 45.5L961.5 46.1L962.6 46.6L963.9 47.2L965.1 47.8L966.4 48.5L967.8 49.1L969.2 49.7L970.6 50.4L972.0 51.1L973.5 51.7L974.9 52.4L976.4 53.1L978.0 53.8L979.5 54.5L981.0 55.2L982.6 55.9L984.2 56.6L985.8 57.4L987.4 58.1L989.0 58.8L990.6 59.6L992.2 60.3L993.8 61.1L995.5 61.8L997.1 62.5L998.8 63.3L1000.4 64.1L1002.1 64.8L1003.7 65.6L1005.4 66.3L1007.1 67.1L1008.7 67.9L1010.4 68.6L1012.1 69.4L1013.8 70.2L1015.5 70.9L1017.2 71.7L1018.8 72.5L1020.5 73.3L1022.2 74.0L1023.9 74.8L1025.6 75.6" stroke="#ee82ee" stroke-dasharray="1.39 2.29"/>
<path d="M1025.6 75.6L1027.3 76.4L1028.9 77.1L1030.6 77.9L1032.2 78.7L1033.9 79.5L1035.5 80.2L1037.2 81.0L1038.8 81.8L1040.5 82.6L1042.1 83.4L1043.8 84.1L1045.4 84.9L1047.1 85.7L1048.7 86.5L1050.4 87.3L1052.0 88.1L1053.7 88.8L1055.3 89.6L1057.0 90.4L1058.6 91.2L1060.3 92.0L1061.9 92.8L1063.5 93.6L1065.2 94.4L1066.8 95.2L1068.4 95.9L1070.1 96.7L1071.7 97.5L1073.3 98.3L1074.9 99.1L1076.6 99.9L1078.2 100.7L1079.8 101.5L1081.4 102.3L1083.0 103.1L1084.6 103.9L1086.2 104.7L1087.9 105.5L1089.5 106.3L1091.1 107.0L1092.7 107.8L1094.2 108.6L1095.8 109.4L1097.4 110.2L1099.0 111.0L1100.6 111.8L1102.2 112.6L1103.7 113.4L1105.3 114.2L1106.9 115.0L1108.4 115.8L1110.0 116.6L1111.6 117.4L1113.1 118.2L1114.7 119.0L1116.2 119.8L1117.8 120.6L1119.3 121.4L1120.9 122.2L1122.4 123.0L1123.9 123.8L1125.4 124.6L1127.0 125.4L1128.5 126.2L1130.0 127.0" stroke="#ee82ee"/>
<path d="M729.0 319.5L728.9 318.7L728.8 317.9L728.7 317.1L728.6 316.3L728.5 315.5L728.4 314.7L728.3 313.9L728.3 313.0L728.2 312.2L728.1 311.4L728.0 310.6L728.0 309.8L727.9 309.0L727.9 308.2L727.8 307.4L727.7 306.6L727.7 305.8L727.6 305.0L727.6 304.2L727.6 303.4L727.5 302.6L727.5 301.7L727.5 300.9L727.4 300.1L727.4 299.3L727.4 298.5L727.4 297.7L727.4 296.9L727.3 296.1L727.3 295.3L727.3 294.5L727.3 293.7L727.3 292.9L727.3 292.1L727.3 291.3L727.3 290.5L727.4 289.6L727.4 288.8L727.4 288.0L727.4 287.2L727.5 286.4L727.5 285.6L727.5 284.8L727.6 284.0L727.6 283.2L727.6 282.4L727.7 281.6L727.7 280.8L727.8 280.0L727.8 279.2L727.9 278.4L728.0 277.5L728.0 276.7L728.1 275.9L728.2 275.1L728.3 274.3L728.3 273.5L728.4 272.7L728.5 271.9L728.6 271.1L728.7 270.3L728.8 269.5L728.9 268.7L729.0 267.9L729.1 267.1L729.2 266.3L729.3 265.5L729.4 264.6L729.5 263.8L729.7 263.0L729.8 262.2L729.9 261.4L730.0 260.6L730.2 259.8L730.3 259.0L730.4 258.2L730.6 257.4L730.7 256.6L730.9 255.8L731.0 255.0L731.2 254.2L731.4 253.4L731.5 252.6L731.7 251.8L731.8 250.9L732.0 250.1L732.2 249.3L732.4 248.5L732.6 247.7L732.7 246.9L732.9 246.1L733.1 245.3L733.3 244.5L733.5 243.7L733.7 242.9L733.9 242.1L734.1 241.3L734.3 240.5L734.5 239.7L734.8 238.9L735.0 238.1L735.2 237.3L735.4 236.4L735.6 235.6L735.9 234.8L736.1 234.0L736.3 233.2L736.6 232.4L736.8 231.6L737.1 230.8L737.3 230.0L737.6 229.2L737.8 228.4L738.1 227.6L738.4 226.8L738.6 226.0L738.9 225.2L739.2 224.4L739.4 223.6L739.7 222.8L740.0 222.0L740.3 221.2L740.6 220.3L740.8 219.5L741.1 218.7L741.4 217.9L741.7 217.1L742.0 216.3L742.3 215.5L742.6 214.7L742.9 213.9L743.3 213.1L743.6 212.3L743.9 211.5L744.2 210.7L744.5 209.9L744.9 209.1L745.2 208.3L745.5 207.5L745.9 206.7L746.2 205.9L746.5 205.1L746.9 204.3L747.2 203.5L747.6 202.7L747.9 201.9L748.3 201.1L748.6 200.3L749.0 199.5L749.4 198.7L749.7 197.8L750.1 197.0L750.5 196.2L750.8 195.4L751.2 194.6L751.6 193.8L752.0 193.0L752.4 192.2L752.7 191.4L753.1 190.6L753.5 189.8L753.9 189.0L754.3 188.2L754.7 187.4L755.1 186.6L755.5 185.8L755.9 185.0L756.4 184.2L756.8 183.4L757.2 182.6L757.6 181.8L758.0 181.0L758.5 180.2L758.9 179.4L759.3 178.6L759.7 177.8L760.2 177.0L760.6 176.2L761.1 175.4L761.5 174.6L761.9 173.8L762.4 173.0L762.8 172.2L763.3 171.4L763.7 170.6L764.2 169.8L764.7 169.0L765.1 168.2L765.6 167.4L766.0 166.6L766.5 165.8L767.0 165.0L767.5 164.2L767.9 163.4L768.4 162.6L768.9 161.8L769.4 161.0L769.9 160.2L770.4 159.4L770.8 158.6L771.3 157.8L771.8 157.0L772.3 156.2L772.8 155.4L773.3 154.7L773.8 153.9L774.3 153.1L774.8 152.3L775.3 151.5L775.9 150.7L776.4 149.9L776.9 149.1L777.4 148.3L777.9 147.5L778.4 146.7L779.0 145.9L779.5 145.1L780.0 144.3L780.6 143.5L781.1 142.7L781.6 141.9L782.2 141.1L782.7 140.4L783.2 139.6L783.8 138.8L784.3 138.0L784.9 137.2L785.4 136.4L786.0 135.6L786.5 134.8L787.1 134.0L787.6 133.2L788.2 132.4L788.7 131.7L789.3 130.9L789.8 130.1L790.4 129.3L791.0 128.5L791.5 127.7L792.1 126.9L792.7 126.1L793.2 125.4L793.8 124.6L794.4 123.8L795.0 123.0L795.5 122.2L796.1 121.4L796.7 120.7L797.3 119.9L797.9 119.1L798.4 118.3L799.0 117.5L799.6 116.7L800.2 116.0L800.8 115.2L801.4 114.4L802.0 113.6L802.6 112.8L803.2 112.1L803.7 111.3L804.3 110.5L804.9 109.7L805.5 109.0L806.1 108.2L806.7 107.4L807.3 106.7L807.9 105.9L808.5 105.1L809.1 104.3L809.7 103.6L810.3 102.8L810.9 102.0L811.5 101.3L812.1 100.5L812.7 99.7L813.3 99.0L814.0 98.2L814.6 97.4L815.2 96.7L815.8 95.9L816.4 95.2L817.0 94.4L817.6 93.7L818.2 92.9L818.8 92.2L819.4 91.4L820.0 90.7L820.6 89.9L821.2 89.2L821.8 88.4L822.4 87.7L823.0 86.9L823.6 86.2L824.2 85.4L824.8 84.7L825.4 84.0L826.0 83.2L826.6 82.5L827.2 81.8L827.7 81.1L828.3 80.3L828.9 79.6L829.5 78.9L830.1 78.2L830.7 77.5L831.2 76.8L831.8 76.1L832.4 75.4L832.9 74.7L833.5 74.0L834.0 73.3L834.6 72.6L835.1 71.9L835.7 71.2L836.2 70.6L836.7 69.9L837.2 69.2L837.7 68.6L838.2 67.9L838.7 67.3L839.2 66.6L839.7 66.0L840.2 65.4L840.6 64.7L841.1 64.1L841.5 63.5L842.0 62.9L842.4 62.3L842.8 61.7L843.1 61.2L843.5 60.6L843.9 60.0L844.2 59.5L844.5 59.0L844.8 58.4L845.1 57.9L845.3 57.4L845.6 57.0L845.7 56.5L845.9 56.0L846.1 55.6L846.2 55.2L846.2 54.8L846.3 54.4L846.3 54.0L846.3 53.7L846.2 53.4L846.1 53.1L845.9 52.8L845.7 52.5L845.4 52.3L845.1 52.1L844.8 51.9L844.3 51.7L843.9 51.6L843.3 51.5L842.7 51.4L842.1 51.3L841.3 51.3L840.5 51.3L839.7 51.3L838.8 51.3L837.8 51.4L836.7 51.5L835.6 51.6L834.4 51.8L833.1 51.9L831.8 52.1L830.4 52.4L828.9 52.6L827.4 52.9L825.8 53.2L824.2 53.5L822.5 53.8L820.7 54.2L818.9 54.5L817.0 54.9L815.1 55.3L813.1 55.8L811.1 56.2L809.0 56.7L806.9 57.1M998.6 57.6L999.5 58.1L1000.4 58.6L1001.4 59.2L1002.4 59.7L1003.4 60.2L1004.5 60.8L1005.6 61.4L1006.7 61.9L1007.9 62.5L1009.0 63.1L1010.2 63.7L1011.4 64.3L1012.7 64.9L1013.9 65.6L1015.2 66.2L1016.5 66.8L1017.8 67.5L1019.1 68.1L1020.4 68.8L1021.8 69.5L1023.1 70.1L1024.5 70.8L1025.9 71.5L1027.3 72.1L1028.7 72.8L1030.1 73.5L1031.5 74.2L1032.9 74.9L1034.4 75.6L1035.8 76.3L1037.3 77.0L1038.7 77.7L1040.2 78.4L1041.7 79.2L1043.1 79.9L1044.6 80.6L1046.1 81.3L1047.6 82.0L1049.1 82.8L1050.6 83.5L1052.0 84.2L1053.5 85.0L1055.0 85.7L1056.5 86.4L1058.1 87.2L1059.6 87.9L1061.1 88.7L1062.6 89.4L1064.1 90.2L1065.6 90.9L1067.1 91.7L1068.6 92.4L1070.2 93.2L1071.7 93.9L1073.2 94.7L1074.7 95.4L1076.2 96.2L1077.7 97.0L1079.3 97.7L1080.8 98.5L1082.3 99.2L1083.8 100.0L1085.3 100.8L1086.8 101.5L1088.4 102.3L1089.9 103.1L1091.4 103.8L1092.9 104.6L1094.4 105.4L1095.9 106.1L1097.4 106.9L1098.9 107.7L1100.4 108.5L1101.9 109.2L1103.4 110.0L1104.9 110.8L1106.4 111.6L1107.9 112.3L1109.4 113.1L1110.9 113.9L1112.4 114.7L1113.9 115.5L1115.3 116.2L1116.8 117.0L1118.3 117.8" stroke="#ee82ee" stroke-dasharray="1.39 2.29"/>
<path d="M1118.3 117.8L1119.7 118.6L1121.1 119.3L1122.5 120.1L1123.9 120.9L1125.3 121.6L1126.7 122.4L1128.1 123.2L1129.5 123.9L1130.9 124.7L1132.2 125.5L1133.6 126.2L1135.0 127.0" stroke="#ee82ee"/>
<path d="M750.7 324.4L751.0 323.6L751.3 322.9L751.6 322.1L751.9 321.4L752.2 320.6L752.5 319.9L752.9 319.1L753.2 318.4L753.5 317.6L753.8 316.9L754.1 316.1L754.5 315.4L754.8 314.6L755.1 313.9L755.5 313.1L755.8 312.4L756.1 311.6L756.5 310.9L756.8 310.1L757.2 309.4L757.5 308.6L757.9 307.9L758.2 307.1L758.6 306.4L758.9 305.6L759.3 304.9L759.7 304.1L760.0 303.4L760.4 302.6L760.8 301.9L761.1 301.1L761.5 300.4L761.9 299.6L762.3 298.9L762.6 298.1L763.0 297.4L763.4 296.6L763.8 295.9L764.2 295.1L764.6 294.4L765.0 293.6L765.4 292.9L765.8 292.1L766.2 291.4L766.6 290.6L767.0 289.9L767.4 289.1L767.8 288.4L768.2 287.6L768.6 286.9L769.0 286.1L769.4 285.4L769.9 284.6L770.3 283.9L770.7 283.1L771.1 282.4L771.6 281.6L772.0 280.9L772.4 280.1L772.9 279.4L773.3 278.6L773.7 277.9L774.2 277.1L774.6 276.4L775.1 275.6L775.5 274.9L776.0 274.2L776.4 273.4L776.9 272.7L777.3 271.9L777.8 271.2L778.2 270.4L778.7 269.7L779.2 268.9L779.6 268.2L780.1 267.4L780.6 266.7L781.0 265.9L781.5 265.2L782.0 264.5L782.4 263.7L782.9 263.0L783.4 262.2L783.9 261.5L784.4 260.7L784.9 260.0L785.3 259.2L785.8 258.5L786.3 257.8L786.8 257.0L787.3 256.3L787.8 255.5L788.3 254.8L788.8 254.0L789.3 253.3L789.8 252.6L790.3 251.8L790.8 251.1L791.3 250.3L791.8 249.6L792.3 248.9L792.8 248.1L793.4 247.4L793.9 246.6L794.4 245.9L794.9 245.2L795.4 244.4L796.0 243.7L796.5 242.9L797.0 242.2L797.5 241.5L798.1 240.7L798.6 240.0L799.1 239.2L799.7 238.5L800.2 237.8L800.7 237.0L801.3 236.3L801.8 235.6L802.3 234.8L802.9 234.1L803.4 233.4L804.0 232.6L804.5 231.9L805.1 231.2L805.6 230.4L806.2 229.7L806.7 229.0L807.3 228.2L807.8 227.5L808.4 226.8L808.9 226.0L809.5 225.3L810.1 224.6L810.6 223.8L811.2 223.1L811.8 222.4L812.3 221.7L812.9 220.9L813.5 220.2L814.0 219.5L814.6 218.7L815.2 218.0L815.7 217.3L816.3 216.6L816.9 215.8L817.5 215.1L818.0 214.4L818.6 213.7L819.2 212.9L819.8 212.2L820.4 211.5L820.9 210.8L821.5 210.0L822.1 209.3L822.7 208.6L823.3 207.9L823.9 207.2L824.5 206.4L825.1 205.7L825.6 205.0L826.2 204.3L826.8 203.6L827.4 202.9L828.0 202.1L828.6 201.4L829.2 200.7L829.8 200.0L830.4 199.3L831.0 198.6L831.6 197.9L832.2 197.2L832.8 196.4L833.4 195.7L834.0 195.0L834.6 194.3L835.2 193.6L835.8 192.9L836.4 192.2L837.0 191.5L837.6 190.8L838.3 190.1L838.9 189.4L839.5 188.7L840.1 188.0L840.7 187.3L841.3 186.6L841.9 185.9L842.5 185.2L843.1 184.5L843.8 183.8L844.4 183.1L845.0 182.4L845.6 181.7L846.2 181.0L846.8 180.3L847.5 179.6L848.1 178.9L848.7 178.2L849.3 177.5L849.9 176.8L850.6 176.2L851.2 175.5L851.8 174.8L852.4 174.1L853.0 173.4L853.7 172.7L854.3 172.1L854.9 171.4L855.5 170.7L856.1 170.0L856.8 169.3L857.4 168.7L858.0 168.0L858.6 167.3L859.3 166.6L859.9 166.0L860.5 165.3L861.1 164.6L861.8 164.0L862.4 163.3L863.0 162.6L863.6 162.0L864.3 161.3L864.9 160.7L865.5 160.0L866.2 159.3L866.8 158.7L867.4 158.0L868.0 157.4L868.7 156.7L869.3 156.1L869.9 155.4L870.5 154.8L871.2 154.1L871.8 153.5L872.4 152.8L873.1 152.2L873.7 151.6L874.3 150.9L874.9 150.3L875.6 149.7L876.2 149.0L876.8 148.4L877.4 147.8L878.1 147.1L878.7 146.5L879.3 145.9L880.0 145.3L880.6 144.7L881.2 144.0L881.8 143.4L882.5 142.8L883.1 142.2L883.7 141.6L884.3 141.0L885.0 140.4L885.6 139.8L886.2 139.2L886.8 138.6L887.5 138.0L888.1 137.4L888.7 136.8L889.3 136.2L890.0 135.6L890.6 135.1L891.2 134.5L891.8 133.9L892.5 133.3L893.1 132.8L893.7 132.2L894.3 131.6L895.0 131.1L895.6 130.5L896.2 130.0L896.8 129.4L897.5 128.9L898.1 128.3L898.7 127.8L899.3 127.2L900.0 126.7L900.6 126.2L901.2 125.6L901.8 125.1L902.5 124.6L903.1 124.1L903.7 123.5L904.3 123.0L904.9 122.5L905.6 122.0L906.2 121.5L906.8 121.0L907.4 120.5L908.1 120.0L908.7 119.6L909.3 119.1L909.9 118.6L910.6 118.1L911.2 117.7L911.8 117.2L912.4 116.8L913.1 116.3L913.7 115.9L914.3 115.4L915.0 115.0L915.6 114.5L916.2 114.1L916.8 113.7L917.5 113.3L918.1 112.9L918.7 112.5L919.4 112.1L920.0 111.7L920.6 111.3L921.3 110.9L921.9 110.5L922.6 110.1L923.2 109.8L923.8 109.4L924.5 109.0L925.1 108.7L925.8 108.4L926.4 108.0L927.1 107.7L927.7 107.4L928.4 107.0L929.0 106.7L929.7 106.4L930.3 106.1L931.0 105.8L931.7 105.6L932.3 105.3L933.0 105.0L933.7 104.7L934.3 104.5L935.0 104.2L935.7 104.0L936.4 103.8L937.1 103.5L937.8 103.3L938.4 103.1L939.1 102.9L939.8 102.7L940.5 102.5L941.3 102.3L942.0 102.2L942.7 102.0L943.4 101.8L944.1 101.7L944.8 101.5L945.6 101.4L946.3 101.3L947.0 101.2L947.8 101.1L948.5 101.0L949.3 100.9L950.1 100.8L950.8 100.7L951.6 100.7L952.4 100.6L953.1 100.5L953.9 100.5L954.7 100.5L955.5 100.4L956.3 100.4L957.1 100.4L957.9 100.4L958.8 100.4L959.6 100.5L960.4 100.5L961.3 100.5L962.1 100.6L963.0 100.6L963.8 100.7L964.7 100.7L965.6 100.8L966.4 100.9L967.3 101.0L968.2 101.1L969.1 101.2L970.0 101.3L970.9 101.5L971.9 101.6L972.8 101.7L973.7 101.9L974.7 102.1L975.6 102.2L976.6 102.4L977.5 102.6L978.5 102.8L979.5 103.0L980.5 103.2L981.5 103.4L982.5 103.6L983.5 103.8L984.5 104.1L985.5 104.3L986.5 104.6L987.6 104.8L988.6 105.1L989.7 105.4L990.7 105.6L991.8 105.9L992.9 106.2L993.9 106.5L995.0 106.8L996.1 107.1L997.2 107.5L998.3 107.8L999.4 108.1L1000.6 108.5L1001.7 108.8L1002.8 109.2L1004.0 109.5L1005.1 109.9L1006.3 110.3L1007.4 110.6L1008.6 111.0L1009.8 111.4L1010.9 111.8L1012.1 112.2L1013.3 112.6L1014.5 113.0L1015.7 113.4L1016.9 113.8L1018.1 114.3L1019.4 114.7L1020.6 115.1L1021.8 115.6L1023.1 116.0L1024.3 116.5L1025.5 116.9L1026.8 117.4L1028.0 117.8L1029.3 118.3L1030.6 118.8L1031.8 119.2L1033.1 119.7L1034.4 120.2L1035.7 120.7L1037.0 121.2L1038.3 121.7L1039.6 122.2L1040.9 122.7L1042.2 123.2L1043.5 123.7L1044.8 124.2L1046.1 124.8L1047.4 125.3L1048.8 125.8L1050.1 126.3L1051.4 126.9L1052.8 127.4L1054.1 127.9L1055.4 128.5L1056.8 129.0L1058.1 129.6L1059.5 130.1L1060.8 130.7L1062.2 131.3L1063.5 131.8L1064.9 132.4L1066.3 133.0L1067.6 133.5L1069.0 134.1L1070.4 134.7L1071.7 135.3L1073.1 135.8L1074.5 136.4L1075.9 137.0L1077.2 137.6L1078.6 138.2L1080.0 138.8L1081.4 139.4L1082.8 140.0L1084.2 140.6L1085.6 141.2L1086.9 141.8L1088.3 142.4L1089.7 143.0L1091.1 143.6L1092.5 144.2L1093.9 144.9L1095.3 145.5L1096.7 146.1" stroke="#ee82ee" stroke-dasharray="1.39 2.29"/>
<path d="M1096.7 146.1L1098.1 146.7L1099.5 147.4L1100.9 148.0L1102.2 148.7L1103.6 149.3L1105.0 150.0" stroke="#ee82ee"/>
<path d="M738.0 263.5L738.5 262.7L739.0 262.0L739.4 261.2L739.9 260.4L740.4 259.7L740.9 258.9L741.4 258.1L741.9 257.4L742.4 256.6L742.9 255.8L743.4 255.0L743.9 254.3L744.4 253.5L745.0 252.7L745.5 252.0L746.0 251.2L746.5 250.4L747.0 249.7L747.6 248.9L748.1 248.1L748.6 247.4L749.2 246.6L749.7 245.8L750.2 245.1L750.8 244.3L751.3 243.6L751.9 242.8L752.4 242.0L753.0 241.3L753.5 240.5L754.1 239.7L754.6 239.0L755.2 238.2L755.8 237.4L756.3 236.7L756.9 235.9L757.5 235.1L758.1 234.4L758.6 233.6L759.2 232.9L759.8 232.1L760.4 231.3L761.0 230.6L761.5 229.8L762.1 229.0L762.7 228.3L763.3 227.5L763.9 226.8L764.5 226.0L765.1 225.2L765.7 224.5L766.3 223.7L766.9 223.0L767.5 222.2L768.1 221.4L768.8 220.7L769.4 219.9L770.0 219.2L770.6 218.4L771.2 217.7L771.9 216.9L772.5 216.1L773.1 215.4L773.7 214.6L774.4 213.9L775.0 213.1L775.6 212.4L776.3 211.6L776.9 210.9L777.6 210.1L778.2 209.3L778.8 208.6L779.5 207.8L780.1 207.1L780.8 206.3L781.4 205.6L782.1 204.8L782.8 204.1L783.4 203.3L784.1 202.6L784.7 201.8L785.4 201.1L786.1 200.3L786.7 199.6L787.4 198.8L788.1 198.1L788.7 197.3L789.4 196.6L790.1 195.8L790.8 195.1L791.4 194.3L792.1 193.6L792.8 192.8L793.5 192.1L794.2 191.4L794.8 190.6L795.5 189.9L796.2 189.1L796.9 188.4L797.6 187.6L798.3 186.9L799.0 186.2L799.7 185.4L800.4 184.7L801.1 183.9L801.8 183.2L802.5 182.5L803.2 181.7L803.9 181.0L804.6 180.3L805.3 179.5L806.0 178.8L806.7 178.0L807.4 177.3L808.1 176.6L808.8 175.8L809.5 175.1L810.2 174.4L811.0 173.7L811.7 172.9L812.4 172.2L813.1 171.5L813.8 170.7L814.5 170.0L815.3 169.3L816.0 168.6L816.7 167.8L817.4 167.1L818.2 166.4L818.9 165.7L819.6 164.9L820.3 164.2L821.1 163.5L821.8 162.8L822.5 162.1L823.2 161.3L824.0 160.6L824.7 159.9L825.4 159.2L826.2 158.5L826.9 157.8L827.6 157.1L828.4 156.4L829.1 155.6L829.8 154.9L830.6 154.2L831.3 153.5L832.0 152.8L832.8 152.1L833.5 151.4L834.3 150.7L835.0 150.0L835.7 149.3L836.5 148.6L837.2 147.9L838.0 147.2L838.7 146.5L839.4 145.8L840.2 145.1L840.9 144.4L841.7 143.8L842.4 143.1L843.1 142.4L843.9 141.7L844.6 141.0L845.4 140.3L846.1 139.7L846.8 139.0L847.6 138.3L848.3 137.6L849.1 136.9L849.8 136.3L850.6 135.6L851.3 134.9L852.0 134.3L852.8 133.6L853.5 132.9L854.3 132.3L855.0 131.6L855.8 131.0L856.5 130.3L857.2 129.6L858.0 129.0L858.7 128.3L859.5 127.7L860.2 127.1L860.9 126.4L861.7 125.8L862.4 125.1L863.1 124.5L863.9 123.9L864.6 123.2L865.4 122.6L866.1 122.0L866.8 121.3L867.6 120.7L868.3 120.1L869.0 119.5L869.8 118.9L870.5 118.3L871.2 117.7L872.0 117.1L872.7 116.5L873.4 115.9L874.2 115.3L874.9 114.7L875.6 114.1L876.3 113.5L877.1 112.9L877.8 112.3L878.5 111.8L879.3 111.2L880.0 110.6L880.7 110.1L881.4 109.5L882.1 109.0L882.9 108.4L883.6 107.9L884.3 107.3L885.0 106.8L885.7 106.2L886.5 105.7L887.2 105.2L887.9 104.7L888.6 104.1L889.3 103.6L890.0 103.1L890.8 102.6L891.5 102.1L892.2 101.6L892.9 101.2L893.6 100.7L894.3 100.2L895.0 99.7L895.7 99.3L896.4 98.8L897.2 98.4L897.9 97.9L898.6 97.5L899.3 97.1L900.0 96.6L900.7 96.2L901.4 95.8L902.1 95.4L902.8 95.0L903.5 94.6L904.2 94.2L904.9 93.8L905.7 93.5L906.4 93.1L907.1 92.8L907.8 92.4L908.5 92.1L909.2 91.7L909.9 91.4L910.6 91.1L911.3 90.8L912.1 90.5L912.8 90.2L913.5 89.9L914.2 89.7L914.9 89.4L915.6 89.2L916.4 88.9L917.1 88.7L917.8 88.5L918.6 88.2L919.3 88.0L920.0 87.8L920.8 87.7L921.5 87.5L922.3 87.3L923.0 87.2L923.8 87.0L924.5 86.9L925.3 86.8L926.0 86.6L926.8 86.5L927.6 86.5L928.3 86.4L929.1 86.3L929.9 86.2L930.7 86.2L931.5 86.1L932.3 86.1L933.1 86.1L933.9 86.1L934.7 86.1L935.6 86.1L936.4 86.1L937.2 86.2L938.1 86.2L938.9 86.3L939.7 86.3L940.6 86.4L941.5 86.5L942.3 86.6L943.2 86.7L944.1 86.8L945.0 87.0L945.9 87.1L946.8 87.3L947.7 87.4L948.6 87.6L949.6 87.8L950.5 88.0L951.5 88.2L952.4 88.4L953.4 88.6L954.3 88.8L955.3 89.1L956.3 89.3L957.3 89.6L958.3 89.9L959.3 90.1L960.3 90.4L961.3 90.7L962.3 91.0L963.4 91.3L964.4 91.6L965.5 92.0L966.5 92.3L967.6 92.6L968.6 93.0L969.7 93.4L970.8 93.7L971.9 94.1L973.0 94.5L974.1 94.9L975.2 95.3L976.3 95.7L977.5 96.1L978.6 96.5L979.7 96.9L980.9 97.3L982.0 97.8L983.2 98.2L984.4 98.7L985.5 99.1L986.7 99.6L987.9 100.1L989.1 100.5L990.3 101.0L991.5 101.5L992.7 102.0L993.9 102.5L995.1 103.0L996.3 103.5L997.5 104.0L998.8 104.5L1000.0 105.0L1001.2 105.5L1002.5 106.1L1003.7 106.6L1005.0 107.1L1006.3 107.7L1007.5 108.2L1008.8 108.8L1010.1 109.3L1011.3 109.9L1012.6 110.4L1013.9 111.0L1015.2 111.6L1016.5 112.2L1017.8 112.7L1019.1 113.3L1020.4 113.9L1021.7 114.5L1023.0 115.1L1024.3 115.7L1025.6 116.3L1026.9 116.9L1028.2 117.5L1029.5 118.1L1030.9 118.7L1032.2 119.3L1033.5 119.9L1034.8 120.5L1036.2 121.1L1037.5 121.8L1038.8 122.4L1040.2 123.0L1041.5 123.7L1042.8 124.3L1044.2 124.9L1045.5 125.6L1046.9 126.2L1048.2 126.8L1049.6 127.5L1050.9 128.1L1052.3 128.8L1053.6 129.4L1055.0 130.1L1056.3 130.7L1057.7 131.4L1059.0 132.1L1060.4 132.7L1061.7 133.4L1063.1 134.0L1064.4 134.7L1065.8 135.4L1067.1 136.1L1068.5 136.7L1069.9 137.4L1071.2 138.1L1072.6 138.7L1073.9 139.4L1075.3 140.1L1076.6 140.8L1078.0 141.5L1079.3 142.2L1080.7 142.8L1082.0 143.5L1083.4 144.2L1084.7 144.9L1086.1 145.6" stroke="#ff2000" stroke-dasharray="1.39 2.29"/>
<path d="M1086.1 145.6L1087.4 146.3L1088.7 147.0L1090.1 147.7L1091.4 148.4L1092.7 149.1L1094.0 149.8L1095.3 150.5L1096.7 151.2L1098.0 151.9L1099.3 152.6L1100.6 153.3L1101.9 154.0L1103.2 154.7L1104.5 155.4L1105.8 156.1L1107.1 156.8L1108.4 157.5L1109.7 158.2L1111.0 158.9L1112.3 159.7L1113.6 160.4L1114.9 161.1L1116.2 161.8L1117.5 162.5L1118.8 163.2L1120.1 163.9L1121.3 164.7L1122.6 165.4L1123.9 166.1" stroke="#ff2000"/>
<path d="M735.3 266.4L735.4 265.6L735.5 264.8L735.6 264.0L735.7 263.2L735.8 262.4L735.9 261.6L736.1 260.8L736.2 259.9L736.3 259.1L736.4 258.3L736.6 257.5L736.7 256.7L736.8 255.9L737.0 255.1L737.1 254.3L737.2 253.5L737.4 252.7L737.5 251.9L737.7 251.1L737.9 250.3L738.0 249.5L738.2 248.6L738.3 247.8L738.5 247.0L738.7 246.2L738.9 245.4L739.0 244.6L739.2 243.8L739.4 243.0L739.6 242.2L739.8 241.4L740.0 240.6L740.2 239.8L740.4 239.0L740.6 238.2L740.8 237.4L741.0 236.6L741.2 235.7L741.4 234.9L741.6 234.1L741.9 233.3L742.1 232.5L742.3 231.7L742.5 230.9L742.8 230.1L743.0 229.3L743.2 228.5L743.5 227.7L743.7 226.9L744.0 226.1L744.2 225.3L744.5 224.5L744.7 223.7L745.0 222.9L745.2 222.1L745.5 221.2L745.8 220.4L746.0 219.6L746.3 218.8L746.6 218.0L746.9 217.2L747.2 216.4L747.4 215.6L747.7 214.8L748.0 214.0L748.3 213.2L748.6 212.4L748.9 211.6L749.2 210.8L749.5 210.0L749.8 209.2L750.1 208.4L750.4 207.6L750.7 206.8L751.1 206.0L751.4 205.2L751.7 204.3L752.0 203.5L752.4 202.7L752.7 201.9L753.0 201.1L753.4 200.3L753.7 199.5L754.0 198.7L754.4 197.9L754.7 197.1L755.1 196.3L755.4 195.5L755.8 194.7L756.2 193.9L756.5 193.1L756.9 192.3L757.2 191.5L757.6 190.7L758.0 189.9L758.4 189.1L758.7 188.3L759.1 187.5L759.5 186.7L759.9 185.9L760.3 185.1L760.7 184.3L761.1 183.5L761.4 182.7L761.8 181.9L762.2 181.1L762.6 180.3L763.0 179.5L763.5 178.7L763.9 177.9L764.3 177.1L764.7 176.3L765.1 175.5L765.5 174.7L765.9 173.9L766.4 173.1L766.8 172.3L767.2 171.5L767.7 170.7L768.1 169.9L768.5 169.1L769.0 168.3L769.4 167.5L769.8 166.7L770.3 165.9L770.7 165.1L771.2 164.3L771.6 163.5L772.1 162.7L772.6 161.9L773.0 161.1L773.5 160.3L773.9 159.5L774.4 158.7L774.9 157.9L775.3 157.1L775.8 156.3L776.3 155.5L776.8 154.7L777.2 153.9L777.7 153.1L778.2 152.3L778.7 151.5L779.2 150.7L779.7 149.9L780.1 149.1L780.6 148.3L781.1 147.5L781.6 146.7L782.1 146.0L782.6 145.2L783.1 144.4L783.6 143.6L784.1 142.8L784.6 142.0L785.2 141.2L785.7 140.4L786.2 139.6L786.7 138.8L787.2 138.0L787.7 137.2L788.2 136.4L788.8 135.7L789.3 134.9L789.8 134.1L790.3 133.3L790.9 132.5L791.4 131.7L791.9 130.9L792.5 130.1L793.0 129.4L793.5 128.6L794.1 127.8L794.6 127.0L795.2 126.2L795.7 125.4L796.3 124.6L796.8 123.9L797.3 123.1L797.9 122.3L798.4 121.5L799.0 120.7L799.5 119.9L800.1 119.2L800.7 118.4L801.2 117.6L801.8 116.8L802.3 116.0L802.9 115.3L803.4 114.5L804.0 113.7L804.6 112.9L805.1 112.1L805.7 111.4L806.3 110.6L806.8 109.8L807.4 109.1L808.0 108.3L808.5 107.5L809.1 106.7L809.7 106.0L810.2 105.2L810.8 104.4L811.4 103.7L812.0 102.9L812.5 102.1L813.1 101.4L813.7 100.6L814.3 99.8L814.8 99.1L815.4 98.3L816.0 97.6L816.6 96.8L817.1 96.1L817.7 95.3L818.3 94.5L818.8 93.8L819.4 93.0L820.0 92.3L820.6 91.5L821.1 90.8L821.7 90.1L822.3 89.3L822.8 88.6L823.4 87.8L824.0 87.1L824.5 86.4L825.1 85.6L825.7 84.9L826.2 84.2L826.8 83.4L827.4 82.7L827.9 82.0L828.5 81.3L829.0 80.6L829.6 79.8L830.1 79.1L830.7 78.4L831.2 77.7L831.7 77.0L832.3 76.3L832.8 75.6L833.3 74.9L833.8 74.2L834.4 73.6L834.9 72.9L835.4 72.2L835.9 71.5L836.4 70.9L836.8 70.2L837.3 69.5L837.8 68.9" stroke="#ff2000" stroke-dasharray="1.39 2.29"/>
<path d="M837.8 68.9L838.3 68.3L838.7 67.6L839.2 67.0L839.6 66.4L840.1 65.8L840.5 65.2L840.9 64.6L841.3 64.0L841.7 63.4L842.1 62.9L842.5 62.3L842.8 61.7L843.2 61.2L843.5 60.7L843.8 60.1L844.1 59.6L844.4 59.1L844.7 58.6L844.9 58.1L845.1 57.7L845.3 57.2" stroke="#ff2000"/>
<path d="M733.8 265.0L733.8 264.2L733.8 263.4L733.8 262.6L733.8 261.9L733.8 261.1L733.9 260.3L733.9 259.5L733.9 258.7L733.9 257.9L734.0 257.1L734.0 256.4L734.0 255.6L734.1 254.8L734.1 254.0L734.1 253.2L734.2 252.4L734.2 251.6L734.3 250.9L734.3 250.1L734.4 249.3L734.5 248.5L734.5 247.7L734.6 246.9L734.7 246.2L734.7 245.4L734.8 244.6L734.9 243.8L735.0 243.0L735.0 242.2L735.1 241.4L735.2 240.7L735.3 239.9L735.4 239.1L735.5 238.3L735.6 237.5L735.7 236.7L735.8 236.0L735.9 235.2L736.0 234.4L736.2 233.6L736.3 232.8L736.4 232.1L736.5 231.3L736.6 230.5L736.8 229.7L736.9 228.9L737.0 228.1L737.2 227.4L737.3 226.6L737.5 225.8L737.6 225.0L737.8 224.2L737.9 223.5L738.1 222.7L738.2 221.9L738.4 221.1L738.5 220.3L738.7 219.6L738.9 218.8L739.0 218.0L739.2 217.2L739.4 216.5L739.6 215.7L739.8 214.9L739.9 214.1L740.1 213.3L740.3 212.6L740.5 211.8L740.7 211.0L740.9 210.2L741.1 209.5L741.3 208.7L741.5 207.9L741.7 207.1L741.9 206.3L742.2 205.6L742.4 204.8L742.6 204.0L742.8 203.2L743.0 202.5L743.3 201.7L743.5 200.9L743.7 200.1L744.0 199.4L744.2 198.6L744.4 197.8L744.7 197.1L744.9 196.3L745.2 195.5L745.4 194.7L745.7 194.0L745.9 193.2L746.2 192.4L746.4 191.7L746.7 190.9L747.0 190.1L747.2 189.3L747.5 188.6L747.8 187.8L748.0 187.0L748.3 186.3L748.6 185.5L748.9 184.7L749.2 184.0L749.5 183.2L749.7 182.4L750.0 181.7L750.3 180.9L750.6 180.1L750.9 179.4L751.2 178.6L751.5 177.8L751.8 177.1L752.1 176.3L752.4 175.6L752.7 174.8L753.1 174.0L753.4 173.3L753.7 172.5L754.0 171.7L754.3 171.0L754.6 170.2L755.0 169.5L755.3 168.7L755.6 167.9L756.0 167.2L756.3 166.4L756.6 165.7L757.0 164.9L757.3 164.2L757.6 163.4L758.0 162.7L758.3 161.9L758.7 161.1L759.0 160.4L759.4 159.6L759.7 158.9L760.1 158.1L760.4 157.4L760.8 156.6L761.1 155.9L761.5 155.1L761.9 154.4L762.2 153.6L762.6 152.9L763.0 152.2L763.3 151.4L763.7 150.7L764.1 149.9L764.4 149.2L764.8 148.4L765.2 147.7L765.6 147.0L765.9 146.2L766.3 145.5L766.7 144.7L767.1 144.0L767.5 143.3L767.8 142.5L768.2 141.8L768.6 141.1L769.0 140.3L769.4 139.6L769.8 138.9L770.2 138.1L770.6 137.4L770.9 136.7L771.3 136.0L771.7 135.2L772.1 134.5L772.5 133.8L772.9 133.1L773.3 132.4L773.7 131.6L774.1 130.9L774.5 130.2L774.9 129.5L775.3 128.8L775.7 128.1L776.1 127.3L776.5 126.6L776.9 125.9L777.3 125.2L777.7 124.5L778.1 123.8L778.5 123.1L778.9 122.4L779.3 121.7L779.7 121.0L780.1 120.3L780.5 119.6L780.9 118.9L781.3 118.3L781.7 117.6L782.1 116.9L782.5 116.2L782.9 115.5L783.2 114.8L783.6 114.2L784.0 113.5L784.4 112.8L784.8 112.1L785.2 111.5L785.6 110.8L786.0 110.1L786.3 109.5L786.7 108.8L787.1 108.2L787.5 107.5L787.8 106.9L788.2 106.2L788.6 105.6L788.9 104.9L789.3 104.3L789.7 103.7L790.0 103.0L790.4 102.4L790.7 101.8L791.1 101.2L791.4 100.5L791.7 99.9L792.1 99.3L792.4 98.7L792.7 98.1L793.0 97.5L793.4 96.9L793.7 96.3L794.0 95.7L794.3 95.2L794.6 94.6L794.8 94.0L795.1 93.4L795.4 92.9L795.7 92.3L795.9 91.8L796.2 91.2L796.4 90.7L796.7 90.1L796.9 89.6L797.1 89.1L797.3 88.6L797.5 88.1L797.7 87.6L797.9 87.1L798.1 86.6L798.2 86.1L798.4 85.6L798.5 85.1L798.6 84.7L798.7 84.2L798.8 83.8L798.9 83.3L799.0 82.9L799.1 82.5L799.1 82.1L799.1 81.6L799.1 81.2L799.1 80.9L799.1 80.5L799.1 80.1L799.0 79.7L799.0 79.4L798.9 79.1L798.8 78.7L798.6 78.4L798.5 78.1L798.3 77.8" stroke="#ff2000" stroke-dasharray="1.39 2.29"/>
<path d="M798.3 77.8L798.1 77.5L797.8 77.3L797.6 77.0L797.3 76.8L797.0 76.6L796.6 76.4L796.3 76.2L795.9 76.0L795.5 75.8L795.0 75.7L794.6 75.5L794.1 75.4L793.6 75.3L793.0 75.2L792.5 75.1L791.9 75.0L791.3 74.9L790.6 74.8L789.9 74.8L789.2 74.8L788.5 74.7L787.7 74.7L787.0 74.7L786.1 74.7L785.3 74.8L784.4 74.8" stroke="#ff2000"/>
<path d="M741.0 244.0L741.7 243.3L742.4 242.7L743.2 242.0L743.9 241.3L744.6 240.7L745.3 240.0L746.1 239.3L746.8 238.7L747.5 238.0L748.2 237.4L749.0 236.7L749.7 236.0L750.5 235.4L751.2 234.7L751.9 234.1L752.7 233.4L753.4 232.7L754.2 232.1L754.9 231.4L755.7 230.8L756.4 230.1L757.2 229.5L757.9 228.8L758.7 228.2L759.4 227.5L760.2 226.8L760.9 226.2L761.7 225.5L762.5 224.9L763.2 224.2L764.0 223.6L764.8 223.0L765.5 222.3L766.3 221.7L767.1 221.0L767.8 220.4L768.6 219.7L769.4 219.1L770.2 218.4L770.9 217.8L771.7 217.2L772.5 216.5L773.3 215.9L774.1 215.2L774.8 214.6L775.6 214.0L776.4 213.3L777.2 212.7L778.0 212.1L778.8 211.4L779.5 210.8L780.3 210.2L781.1 209.5L781.9 208.9L782.7 208.3L783.5 207.7L784.3 207.0L785.1 206.4L785.9 205.8L786.7 205.2L787.5 204.5L788.3 203.9L789.1 203.3L789.9 202.7L790.7 202.1L791.5 201.4L792.3 200.8L793.1 200.2L793.9 199.6L794.7 199.0L795.5 198.4L796.3 197.8L797.1 197.2L797.9 196.6L798.7 196.0L799.5 195.4L800.3 194.7L801.1 194.1L802.0 193.5L802.8 192.9L803.6 192.3L804.4 191.8L805.2 191.2L806.0 190.6L806.8 190.0L807.6 189.4L808.4 188.8L809.3 188.2L810.1 187.6L810.9 187.0L811.7 186.4L812.5 185.9L813.3 185.3L814.1 184.7L815.0 184.1L815.8 183.5L816.6 183.0L817.4 182.4L818.2 181.8L819.0 181.3L819.8 180.7L820.7 180.1L821.5 179.6L822.3 179.0L823.1 178.4L823.9 177.9L824.7 177.3L825.5 176.8L826.4 176.2L827.2 175.7L828.0 175.1L828.8 174.6L829.6 174.0L830.4 173.5L831.2 172.9L832.1 172.4L832.9 171.8L833.7 171.3L834.5 170.8L835.3 170.2L836.1 169.7L836.9 169.2L837.8 168.7L838.6 168.1L839.4 167.6L840.2 167.1L841.0 166.6L841.8 166.1L842.6 165.6L843.4 165.0L844.2 164.5L845.1 164.0L845.9 163.5L846.7 163.0L847.5 162.5L848.3 162.0L849.1 161.5L849.9 161.0L850.7 160.6L851.5 160.1L852.3 159.6L853.1 159.1L853.9 158.6L854.7 158.2L855.5 157.7L856.3 157.2L857.1 156.8L858.0 156.3L858.8 155.8L859.6 155.4L860.4 154.9L861.2 154.5L862.0 154.0L862.8 153.6L863.5 153.1L864.3 152.7L865.1 152.3L865.9 151.8L866.7 151.4L867.5 151.0L868.3 150.5L869.1 150.1L869.9 149.7L870.7 149.3L871.5 148.9L872.3 148.5L873.1 148.1L873.9 147.7L874.7 147.3L875.4 146.9L876.2 146.5L877.0 146.1L877.8 145.7L878.6 145.4L879.4 145.0L880.2 144.6L881.0 144.3L881.7 143.9L882.5 143.5L883.3 143.2L884.1 142.8L884.9 142.5L885.7 142.1L886.4 141.8L887.2 141.5L888.0 141.1L888.8 140.8L889.6 140.5L890.3 140.2L891.1 139.9L891.9 139.6L892.7 139.3L893.5 139.0L894.2 138.7L895.0 138.4L895.8 138.1L896.6 137.8L897.3 137.5L898.1 137.3L898.9 137.0L899.7 136.7L900.5 136.5L901.2 136.2L902.0 136.0L902.8 135.7L903.6 135.5L904.3 135.3L905.1 135.0L905.9 134.8L906.7 134.6L907.4 134.4L908.2 134.2L909.0 134.0L909.8 133.8L910.6 133.6L911.3 133.4L912.1 133.2L912.9 133.1L913.7 132.9L914.5 132.7L915.2 132.6L916.0 132.4L916.8 132.3L917.6 132.1L918.4 132.0L919.2 131.8L919.9 131.7L920.7 131.6L921.5 131.5L922.3 131.4L923.1 131.3L923.9 131.2L924.7 131.1L925.5 131.0L926.3 130.9L927.1 130.8L927.8 130.7L928.6 130.7L929.4 130.6L930.2 130.6L931.0 130.5L931.8 130.5L932.7 130.4L933.5 130.4L934.3 130.4L935.1 130.3L935.9 130.3L936.7 130.3L937.5 130.3L938.3 130.3L939.1 130.3L940.0 130.3L940.8 130.4L941.6 130.4L942.4 130.4L943.3 130.5L944.1 130.5L944.9 130.5L945.7 130.6L946.6 130.7L947.4 130.7L948.3 130.8L949.1 130.9L949.9 131.0L950.8 131.0L951.6 131.1L952.5 131.2L953.3 131.3L954.2 131.4L955.0 131.6L955.9 131.7L956.8 131.8L957.6 131.9L958.5 132.1L959.4 132.2L960.2 132.4L961.1 132.5L962.0 132.7L962.9 132.8L963.8 133.0L964.7 133.2L965.5 133.4L966.4 133.6L967.3 133.7L968.2 133.9L969.1 134.1L970.0 134.4L970.9 134.6L971.8 134.8L972.8 135.0L973.7 135.2L974.6 135.5L975.5 135.7L976.4 135.9L977.4 136.2L978.3 136.4L979.2 136.7L980.1 137.0L981.1 137.2L982.0 137.5L983.0 137.8L983.9 138.0L984.9 138.3L985.8 138.6L986.8 138.9L987.7 139.2L988.7 139.5L989.6 139.8L990.6 140.1L991.6 140.4L992.5 140.8L993.5 141.1L994.5 141.4L995.5 141.7L996.4 142.1L997.4 142.4L998.4 142.8L999.4 143.1L1000.4 143.5L1001.4 143.8L1002.4 144.2L1003.4 144.5L1004.4 144.9L1005.4 145.3L1006.4 145.7L1007.4 146.0L1008.4 146.4L1009.4 146.8L1010.4 147.2L1011.4 147.6L1012.5 148.0L1013.5 148.4L1014.5 148.8L1015.5 149.2L1016.6 149.6L1017.6 150.0L1018.6 150.5L1019.7 150.9L1020.7 151.3L1021.7 151.7L1022.8 152.2L1023.8 152.6L1024.9 153.0L1025.9 153.5L1027.0 153.9L1028.0 154.4L1029.1 154.8L1030.1 155.3L1031.2 155.7L1032.2 156.2L1033.3 156.7L1034.3 157.1L1035.4 157.6L1036.5 158.1L1037.5 158.5L1038.6 159.0L1039.7 159.5L1040.7 160.0L1041.8 160.5L1042.9 160.9L1044.0 161.4L1045.0 161.9L1046.1 162.4L1047.2 162.9L1048.3 163.4L1049.3 163.9L1050.4 164.4L1051.5 164.9L1052.6 165.4L1053.7 166.0L1054.8 166.5L1055.8 167.0L1056.9 167.5L1058.0 168.0L1059.1 168.6L1060.2 169.1L1061.3 169.6L1062.4 170.1L1063.5 170.7L1064.5 171.2L1065.6 171.7L1066.7 172.3L1067.8 172.8L1068.9 173.4L1070.0 173.9" stroke="#e010ff" stroke-dasharray="1.39 2.29"/>
<path d="M1070.0 173.9L1071.1 174.4L1072.1 175.0L1073.2 175.5L1074.3 176.0L1075.4 176.6L1076.4 177.1L1077.5 177.6L1078.6 178.2L1079.7 178.7L1080.7 179.3L1081.8 179.8L1082.9 180.3L1084.0 180.9L1085.0 181.4L1086.1 182.0" stroke="#e010ff"/>
<path d="M601.7 165.0L602.8 164.2L604.0 163.4L605.1 162.7L606.2 161.9L607.4 161.1L608.5 160.3L609.7 159.6L610.9 158.8L612.0 158.0L613.2 157.2L614.4 156.5L615.5 155.7L616.7 154.9L617.9 154.2L619.1 153.4L620.3 152.6L621.5 151.8L622.7 151.1L623.9 150.3L625.1 149.5L626.3 148.8L627.5 148.0L628.8 147.2L630.0 146.5L631.2 145.7L632.4 144.9L633.7 144.2L634.9 143.4L636.2 142.6L637.4 141.9L638.7 141.1L639.9 140.3L641.2 139.6L642.4 138.8L643.7 138.1L644.9 137.3L646.2 136.5L647.5 135.8L648.7 135.0L650.0 134.3L651.3 133.5L652.6 132.7L653.9 132.0L655.1 131.2L656.4 130.5L657.7 129.7L659.0 129.0L660.3 128.2L661.6 127.5L662.9 126.7L664.2 126.0L665.5 125.2L666.8 124.5L668.1 123.7L669.4 123.0L670.7 122.2L672.0 121.5L673.3 120.8L674.7 120.0L676.0 119.3L677.3 118.5L678.6 117.8L679.9 117.1L681.2 116.3L682.5 115.6L683.9 114.9L685.2 114.1L686.5 113.4L687.8 112.7L689.1 112.0L690.5 111.2L691.8 110.5L693.1 109.8L694.4 109.1L695.7 108.3L697.0 107.6L698.3 106.9L699.7 106.2L701.0 105.5L702.3 104.8L703.6 104.1L704.9 103.4L706.2 102.6L707.5 101.9L708.8 101.2L710.1 100.5L711.4 99.9L712.7 99.2L714.0 98.5L715.2 97.8L716.5 97.1L717.8 96.4L719.1 95.7L720.3 95.0L721.6 94.4L722.9 93.7L724.1 93.0L725.4 92.4L726.6 91.7L727.8 91.0L729.1 90.4L730.3 89.7L731.5 89.1L732.7 88.4L733.9 87.8L735.1 87.2L736.3 86.5L737.4 85.9L738.6 85.3L739.7 84.7L740.9 84.0L742.0 83.4L743.1 82.8L744.2 82.2L745.3 81.6L746.4 81.0L747.5 80.4L748.5 79.9L749.5 79.3L750.5 78.7L751.5 78.2L752.5 77.6L753.5 77.1L754.4 76.5L755.4 76.0L756.3 75.5L757.1 75.0L758.0 74.4L758.8 73.9L759.6 73.5L760.4 73.0L761.2 72.5L761.9 72.0L762.6 71.6M1040.4 71.1L1038.4 70.7L1036.4 70.3L1034.4 69.9L1032.5 69.5L1030.7 69.1L1028.8 68.7L1027.0 68.3L1025.2 68.0L1023.5 67.6L1021.8 67.3L1020.2 67.0L1018.5 66.7L1017.0 66.4L1015.4 66.1L1013.9 65.9L1012.5 65.6L1011.1 65.4L1009.7 65.2L1008.4 65.0L1007.1 64.8L1005.9 64.7L1004.7 64.5L1003.5 64.4L1002.4 64.3L1001.4 64.2L1000.4 64.1L999.4 64.1L998.5 64.0L997.6 64.0L996.8 64.0L996.0 64.0L995.2 64.0L994.5 64.1L993.8 64.1L993.2 64.2L992.6 64.3L992.1 64.4L991.6 64.5L991.2 64.7L990.7 64.8L990.3 65.0L990.0 65.2L989.7 65.4L989.4 65.7L989.2 65.9L988.9 66.2L988.8 66.4L988.6 66.7L988.5 67.0L988.4 67.3L988.3 67.7L988.3 68.0L988.3 68.3L988.3 68.7L988.4 69.1L988.4 69.5L988.5 69.9L988.6 70.3L988.7 70.7L988.9 71.2L989.1 71.6L989.2 72.1L989.4 72.5L989.7 73.0L989.9 73.5L990.2 74.0L990.4 74.5L990.7 75.0L991.0 75.5" stroke="#0014d2" stroke-dasharray="1.39 2.29"/>
<path d="M991.0 75.5L991.3 76.0L991.6 76.5L991.9 77.1L992.3 77.6L992.6 78.2L993.0 78.7L993.4 79.3L993.7 79.8L994.1 80.4L994.5 81.0L994.9 81.6L995.4 82.2L995.8 82.8L996.2 83.4L996.6 84.0L997.1 84.6L997.5 85.2L998.0 85.8L998.4 86.4L998.9 87.1L999.4 87.7L999.9 88.3L1000.3 89.0L1000.8 89.6L1001.3 90.2L1001.8 90.9L1002.3 91.5L1002.8 92.2" stroke="#0014d2"/>
<path d="M990.0 77.2L1014.4 97.8" stroke="#808080"/>
<path d="M1002.8 85.6L1023.9 94.2" stroke="#808080"/>
</g>
<g fill="#ff6040">
<rect x="1129.0" y="126.0" width="2" height="2"/>
<rect x="1134.0" y="126.0" width="2" height="2"/>
<rect x="1104.0" y="149.0" width="2" height="2"/>
<rect x="1122.9" y="165.1" width="2" height="2"/>
<rect x="844.3" y="56.2" width="2" height="2"/>
<rect x="783.4" y="73.8" width="2" height="2"/>
<rect x="1085.1" y="181.0" width="2" height="2"/>
<rect x="1001.8" y="91.2" width="2" height="2"/>
</g>
<g stroke="#ff0000" stroke-width="1" fill="none">
<path d="M736.6 315.2h5M739.1 312.7v5"/>
<path d="M726.5 319.5h5M729.0 317.0v5"/>
<path d="M748.2 324.4h5M750.7 321.9v5"/>
<path d="M735.5 263.5h5M738.0 261.0v5"/>
<path d="M732.8 266.4h5M735.3 263.9v5"/>
<path d="M731.3 265.0h5M733.8 262.5v5"/>
<path d="M738.5 244.0h5M741.0 241.5v5"/>
<path d="M599.2 165.0h5M601.7 162.5v5"/>
</g>
<g fill="none" stroke-width="2.08">
<path d="M702.9 318.2L703.0 317.0L703.1 315.7L703.3 314.5L703.6 313.2L703.9 312.0L704.3 310.8L704.8 309.6L705.4 308.4L706.0 307.3L706.6 306.2L707.4 305.1L708.2 304.1L709.0 303.1L709.9 302.1L710.9 301.2L711.9 300.3L712.9 299.5L714.0 298.7L715.1 298.0L716.3 297.4L717.5 296.8L718.7 296.2L719.9 295.7L721.1 295.3L722.4 295.0L723.6 294.7L724.9 294.4L726.2 294.3L727.4 294.2L728.7 294.1L729.9 294.2L731.2 294.3L732.4 294.4L733.6 294.7L734.8 295.0L736.0 295.3L737.1 295.7L738.2 296.2L739.3 296.8L740.3 297.4L741.3 298.0L742.3 298.7L743.2 299.5L744.1 300.3L744.9 301.2L745.7 302.1L746.4 303.1L747.1 304.1L747.7 305.1L748.3 306.2L748.8 307.3L749.3 308.4L749.7 309.6L750.1 310.8L750.4 312.0L750.7 313.2L750.8 314.5L751.0 315.7L751.1 317.0L751.1 318.2L751.0 319.5L750.9 320.7L750.8 322.0L750.6 323.2L750.3 324.4L750.0 325.6L749.6 326.8L749.1 328.0L748.6 329.1L748.1 330.2L747.5 331.3L746.8 332.3L746.1 333.3L745.4 334.3L744.6 335.2L743.7 336.1L742.8 336.9L741.9 337.7L740.9 338.4L739.9 339.0L738.8 339.6L737.8 340.2L736.6 340.7L735.5 341.1L734.3 341.5L733.1 341.7L731.9 342.0L730.7 342.1L729.5 342.2L728.2 342.3L726.9 342.2L725.7 342.1L724.4 342.0L723.2 341.7L721.9 341.5L720.7 341.1L719.4 340.7L718.2 340.2L717.0 339.6L715.9 339.0L714.7 338.4L713.6 337.7L712.6 336.9L711.5 336.1L710.6 335.2L709.6 334.3L708.7 333.3L707.9 332.3L707.1 331.3L706.4 330.2L705.8 329.1L705.2 328.0L704.6 326.8L704.2 325.6L703.8 324.4L703.5 323.2L703.2 322.0L703.0 320.7L703.0 319.5L702.9 318.2Z" stroke="#ee82ee"/>
<path d="M709.6 268.0L710.0 266.8L710.4 265.5L710.9 264.3L711.5 263.0L712.1 261.8L712.8 260.6L713.6 259.4L714.5 258.2L715.4 257.1L716.3 255.9L717.3 254.8L718.4 253.8L719.5 252.8L720.6 251.8L721.8 250.8L723.1 249.9L724.3 249.1L725.6 248.3L726.9 247.6L728.2 246.9L729.5 246.3L730.9 245.7L732.2 245.2L733.6 244.8L734.9 244.4L736.2 244.1L737.6 243.8L738.9 243.7L740.2 243.6L741.4 243.5L742.7 243.6L743.9 243.7L745.1 243.8L746.2 244.1L747.3 244.4L748.4 244.8L749.4 245.2L750.4 245.7L751.3 246.3L752.2 246.9L753.1 247.6L753.8 248.3L754.6 249.1L755.2 249.9L755.8 250.8L756.4 251.8L756.9 252.8L757.3 253.8L757.7 254.8L758.0 255.9L758.3 257.1L758.4 258.2L758.6 259.4L758.6 260.6L758.6 261.8L758.6 263.0L758.5 264.3L758.3 265.5L758.1 266.8L757.8 268.0L757.4 269.3L757.0 270.6L756.5 271.8L756.0 273.0L755.4 274.2L754.8 275.4L754.1 276.6L753.4 277.7L752.6 278.9L751.8 279.9L750.9 281.0L750.0 282.0L749.1 283.0L748.1 283.9L747.0 284.8L746.0 285.7L744.9 286.5L743.8 287.2L742.6 287.9L741.4 288.5L740.2 289.1L739.0 289.7L737.8 290.1L736.5 290.5L735.3 290.9L734.0 291.2L732.7 291.4L731.5 291.5L730.2 291.6L728.9 291.7L727.7 291.6L726.5 291.5L725.2 291.4L724.0 291.2L722.8 290.9L721.7 290.5L720.6 290.1L719.5 289.7L718.4 289.1L717.4 288.5L716.4 287.9L715.5 287.2L714.6 286.5L713.8 285.7L713.0 284.8L712.3 283.9L711.7 283.0L711.1 282.0L710.6 281.0L710.1 279.9L709.7 278.9L709.4 277.7L709.2 276.6L709.0 275.4L708.9 274.2L708.9 273.0L709.0 271.8L709.1 270.6L709.3 269.3L709.6 268.0Z" stroke="#ff2000"/>
<path d="M718.4 246.5L718.9 245.2L719.4 243.9L720.1 242.7L720.7 241.4L721.5 240.2L722.3 239.0L723.2 237.8L724.2 236.6L725.2 235.4L726.3 234.3L727.4 233.2L728.6 232.1L729.8 231.1L731.0 230.1L732.3 229.1L733.6 228.2L734.9 227.4L736.3 226.6L737.7 225.8L739.0 225.1L740.4 224.5L741.8 223.9L743.2 223.4L744.6 223.0L746.0 222.6L747.4 222.3L748.7 222.0L750.0 221.9L751.4 221.8L752.6 221.7L753.9 221.8L755.1 221.9L756.2 222.0L757.4 222.3L758.4 222.6L759.5 223.0L760.4 223.4L761.4 223.9L762.3 224.5L763.1 225.1L763.8 225.8L764.5 226.6L765.2 227.4L765.8 228.2L766.3 229.1L766.8 230.1L767.2 231.1L767.5 232.1L767.8 233.2L768.0 234.3L768.1 235.4L768.2 236.6L768.2 237.8L768.2 239.0L768.0 240.2L767.9 241.4L767.6 242.7L767.3 243.9L767.0 245.2L766.6 246.5L766.1 247.7L765.5 248.9L765.0 250.2L764.3 251.4L763.6 252.6L762.9 253.8L762.1 255.0L761.2 256.1L760.4 257.2L759.4 258.3L758.4 259.3L757.4 260.3L756.4 261.3L755.3 262.2L754.2 263.1L753.0 263.9L751.9 264.7L750.7 265.5L749.4 266.2L748.2 266.8L747.0 267.4L745.7 267.9L744.4 268.3L743.1 268.7L741.8 269.1L740.5 269.4L739.2 269.6L738.0 269.7L736.7 269.8L735.4 269.9L734.2 269.8L732.9 269.7L731.7 269.6L730.5 269.4L729.4 269.1L728.3 268.7L727.2 268.3L726.1 267.9L725.1 267.4L724.2 266.8L723.3 266.2L722.4 265.5L721.6 264.7L720.9 263.9L720.2 263.1L719.6 262.2L719.0 261.3L718.5 260.3L718.1 259.3L717.7 258.3L717.5 257.2L717.3 256.1L717.1 255.0L717.1 253.8L717.1 252.6L717.2 251.4L717.4 250.2L717.6 248.9L718.0 247.7L718.4 246.5Z" stroke="#e010ff"/>
<path d="M538.4 174.4L540.6 173.1L543.0 171.8L545.5 170.6L548.0 169.3L550.6 168.1L553.3 166.8L556.0 165.6L558.8 164.4L561.6 163.2L564.5 162.0L567.3 160.9L570.2 159.8L573.1 158.7L575.9 157.7L578.7 156.7L581.5 155.7L584.3 154.8L587.0 153.9L589.6 153.1L592.2 152.4L594.6 151.7L597.0 151.1L599.3 150.6L601.5 150.1L603.5 149.7L605.4 149.3L607.2 149.1L608.8 148.9L610.3 148.8L611.6 148.7L612.8 148.8L613.8 148.9L614.7 149.1L615.4 149.3L615.9 149.7L616.3 150.1L616.5 150.6L616.6 151.1L616.5 151.7L616.2 152.4L615.8 153.1L615.3 153.9L614.6 154.8L613.8 155.7L612.8 156.7L611.7 157.7L610.5 158.7L609.2 159.8L607.8 160.9L606.3 162.0L604.6 163.2L602.9 164.4L601.1 165.6L599.2 166.8L597.3 168.1L595.3 169.3L593.2 170.6L591.0 171.8L588.9 173.1L586.6 174.4L584.4 175.6L582.1 176.8L579.8 178.0L577.4 179.2L575.1 180.4L572.7 181.6L570.3 182.7L568.0 183.8L565.6 184.9L563.2 185.9L560.9 186.9L558.6 187.9L556.3 188.8L554.0 189.7L551.8 190.5L549.5 191.3L547.4 192.1L545.2 192.7L543.2 193.4L541.1 194.0L539.2 194.5L537.3 195.0L535.4 195.4L533.6 195.8L531.9 196.1L530.3 196.4L528.7 196.6L527.3 196.8L525.9 196.8L524.6 196.9L523.3 196.8L522.2 196.8L521.2 196.6L520.3 196.4L519.5 196.1L518.8 195.8L518.2 195.4L517.7 195.0L517.4 194.5L517.1 194.0L517.0 193.4L517.0 192.7L517.1 192.1L517.3 191.3L517.7 190.5L518.2 189.7L518.8 188.8L519.6 187.9L520.5 186.9L521.5 185.9L522.7 184.9L523.9 183.8L525.3 182.7L526.8 181.6L528.5 180.4L530.2 179.2L532.1 178.0L534.1 176.8L536.2 175.6L538.4 174.4Z" stroke="#0014d2"/>
</g>
<g font-family="'DejaVu Sans','Liberation Sans',sans-serif" font-size="10.42" fill="#fff" text-anchor="middle">
<text x="727.0" y="321.6">OER</text>
<text x="733.8" y="271.0">STA</text>
<text x="742.7" y="249.2">NTA</text>
<text x="565.3" y="176.2">KUM</text>
</g>
<g font-family="'DejaVu Sans Mono','Liberation Mono',monospace" font-size="13.89" fill="#fff" xml:space="preserve">
<text x="316" y="29.90">RU0003</text>
<text x="316" y="42.90">Beg: 20251107 15:34:32 (sol = 225.12°)</text>
<text x="316" y="56.60">End: 20251107 21:03:58 (sol = 225.35°)</text>
<text x="316" y="69.20">--------------------------------------</text>
<text x="316" y="81.80">...: 6</text>
<text x="316" y="94.90">OER: 3</text>
<text x="316" y="108.00">STA: 3</text>
<text x="316" y="121.30">KUM: 1</text>
<text x="316" y="134.60">NTA: 1</text>
</g>
<clipPath id="axclip"><rect x="20.5" y="641.5" width="1765.0" height="201.0"/></clipPath>
<g clip-path="url(#axclip)" font-family="'DejaVu Sans','Liberation Sans',sans-serif" font-size="27.78" fill="#505050">
<text transform="translate(148.5 697.7) rotate(-90)">APR</text>
<text transform="translate(295.0 702.2) rotate(-90)">MAY</text>
<text transform="translate(436.0 690.4) rotate(-90)">JUN</text>
<text transform="translate(576.7 683.5) rotate(-90)">JUL</text>
<text transform="translate(724.6 701.9) rotate(-90)">AUG</text>
<text transform="translate(871.4 695.8) rotate(-90)">SEP</text>
<text transform="translate(1016.6 701.4) rotate(-90)">OCT</text>
<text transform="translate(1170.0 705.3) rotate(-90)">NOV</text>
<text transform="translate(1319.0 702.2) rotate(-90)">DEC</text>
<text transform="translate(1469.0 687.5) rotate(-90)">JAN</text>
<text transform="translate(1628.5 697.6) rotate(-90)">FEB</text>
<text transform="translate(1766.5 707.0) rotate(-90)">MAR</text>
</g>
<path d="M1125.0 842.5V641.5" stroke="#ff0000" stroke-width="2.08" stroke-dasharray="7.7 3.33" fill="none"/>
<g stroke-width="4.17" fill="none">
<path d="M106.2 834.0H130.0" stroke="#ee82ee"/>
<path d="M165.0 834.0H345.0" stroke="#ee82ee"/>
<path d="M366.2 834.0H625.0" stroke="#ee82ee"/>
<path d="M636.0 834.0H787.0" stroke="#ee82ee"/>
<path d="M807.0 834.0H900.0" stroke="#ee82ee"/>
<path d="M920.0 834.0H973.0" stroke="#ee82ee"/>
<path d="M984.0 834.0H1066.0" stroke="#ee82ee"/>
<path d="M1082.0 834.0H1204.0" stroke="#ee82ee"/>
<path d="M1244.0 834.0H1326.0" stroke="#ee82ee"/>
<path d="M1337.0 834.0H1356.0" stroke="#ee82ee"/>
<path d="M1381.0 834.0H1444.0" stroke="#ee82ee"/>
<path d="M1459.0 834.0H1512.0" stroke="#ee82ee"/>
<path d="M1523.0 834.0H1547.0" stroke="#ee82ee"/>
<path d="M1724.0 834.0H1748.0" stroke="#ee82ee"/>
<path d="M1758.0 834.0H1782.0" stroke="#ee82ee"/>
<path d="M165.0 818.0H188.8" stroke="#e014f5"/>
<path d="M224.2 818.0H286.8" stroke="#e014f5"/>
<path d="M312.0 818.0H340.8" stroke="#e014f5"/>
<path d="M366.2 818.0H493.0" stroke="#e014f5"/>
<path d="M508.0 818.0H654.0" stroke="#e014f5"/>
<path d="M704.0 818.0H738.0" stroke="#e014f5"/>
<path d="M773.0 818.0H846.0" stroke="#e014f5"/>
<path d="M871.0 818.0H988.0" stroke="#e014f5"/>
<path d="M1003.0 818.0H1017.0" stroke="#e014f5"/>
<path d="M1062.0 818.0H1213.0" stroke="#e014f5"/>
<path d="M1244.0 818.0H1267.0" stroke="#e014f5"/>
<path d="M1293.0 818.0H1316.0" stroke="#e014f5"/>
<path d="M1342.0 818.0H1365.0" stroke="#e014f5"/>
<path d="M1386.0 818.0H1429.0" stroke="#e014f5"/>
<path d="M1459.0 818.0H1483.0" stroke="#e014f5"/>
<path d="M1548.0 818.0H1571.0" stroke="#e014f5"/>
<path d="M165.0 802.0H188.8" stroke="#ff1e00"/>
<path d="M258.2 802.0H488.0" stroke="#ff1e00"/>
<path d="M508.0 802.0H615.0" stroke="#ff1e00"/>
<path d="M626.0 802.0H718.0" stroke="#ff1e00"/>
<path d="M729.0 802.0H826.0" stroke="#ff1e00"/>
<path d="M949.0 802.0H1150.0" stroke="#ff1e00"/>
<path d="M1160.0 802.0H1248.0" stroke="#ff1e00"/>
<path d="M1258.0 802.0H1444.0" stroke="#ff1e00"/>
<path d="M1459.0 802.0H1483.0" stroke="#ff1e00"/>
<path d="M1553.0 802.0H1576.0" stroke="#ff1e00"/>
<path d="M194.0 785.0H218.0" stroke="#ffaa0f"/>
<path d="M322.0 785.0H507.0" stroke="#ffaa0f"/>
<path d="M518.0 785.0H542.0" stroke="#ffaa0f"/>
<path d="M557.0 785.0H684.0" stroke="#ffaa0f"/>
<path d="M807.0 785.0H831.0" stroke="#ffaa0f"/>
<path d="M954.0 785.0H973.0" stroke="#ffaa0f"/>
<path d="M989.0 785.0H1125.0" stroke="#ffaa0f"/>
<path d="M1155.0 785.0H1218.0" stroke="#ffaa0f"/>
<path d="M1244.0 785.0H1267.0" stroke="#ffaa0f"/>
<path d="M1317.0 785.0H1341.0" stroke="#ffaa0f"/>
<path d="M1396.0 785.0H1419.0" stroke="#ffaa0f"/>
<path d="M1464.0 785.0H1650.0" stroke="#ffaa0f"/>
<path d="M341.0 769.0H370.0" stroke="#ffee00"/>
<path d="M410.0 769.0H448.0" stroke="#ffee00"/>
<path d="M469.0 769.0H493.0" stroke="#ffee00"/>
<path d="M528.0 769.0H546.0" stroke="#ffee00"/>
<path d="M562.0 769.0H591.0" stroke="#ffee00"/>
<path d="M616.0 769.0H649.0" stroke="#ffee00"/>
<path d="M959.0 769.0H988.0" stroke="#ffee00"/>
<path d="M1062.0 769.0H1086.0" stroke="#ffee00"/>
<path d="M1101.0 769.0H1125.0" stroke="#ffee00"/>
<path d="M1160.0 769.0H1194.0" stroke="#ffee00"/>
<path d="M1249.0 769.0H1272.0" stroke="#ffee00"/>
<path d="M1425.0 769.0H1512.0" stroke="#ffee00"/>
<path d="M420.0 752.0H444.0" stroke="#9bf528"/>
<path d="M533.0 752.0H556.0" stroke="#9bf528"/>
<path d="M567.0 752.0H591.0" stroke="#9bf528"/>
<path d="M621.0 752.0H743.0" stroke="#9bf528"/>
<path d="M969.0 752.0H1135.0" stroke="#9bf528"/>
<path d="M1185.0 752.0H1346.0" stroke="#9bf528"/>
<path d="M1469.0 752.0H1493.0" stroke="#9bf528"/>
<path d="M430.0 736.0H453.0" stroke="#55cd0f"/>
<path d="M577.0 736.0H733.0" stroke="#55cd0f"/>
<path d="M994.0 736.0H1105.0" stroke="#55cd0f"/>
<path d="M1116.0 736.0H1223.0" stroke="#55cd0f"/>
<path d="M1263.0 736.0H1292.0" stroke="#55cd0f"/>
<path d="M1489.0 736.0H1512.0" stroke="#55cd0f"/>
<path d="M592.0 720.0H615.0" stroke="#00eb78"/>
<path d="M655.0 720.0H772.0" stroke="#00eb78"/>
<path d="M1072.0 720.0H1243.0" stroke="#00eb78"/>
<path d="M1263.0 720.0H1287.0" stroke="#00eb78"/>
<path d="M596.0 703.0H733.0" stroke="#00d4f5"/>
<path d="M1092.0 703.0H1120.0" stroke="#00d4f5"/>
<path d="M1200.0 703.0H1223.0" stroke="#00d4f5"/>
<path d="M1273.0 703.0H1326.0" stroke="#00d4f5"/>
<path d="M1111.0 687.0H1135.0" stroke="#0014c8"/>
</g>
<g stroke="#fff" stroke-opacity="0.36" stroke-width="2.08" stroke-dasharray="2.08 3.44" fill="none">
<path d="M75.0 641.5V842.5"/>
<path d="M219.0 641.5V842.5"/>
<path d="M365.0 641.5V842.5"/>
<path d="M506.0 641.5V842.5"/>
<path d="M651.0 641.5V842.5"/>
<path d="M797.0 641.5V842.5"/>
<path d="M940.0 641.5V842.5"/>
<path d="M1091.0 641.5V842.5"/>
<path d="M1239.0 641.5V842.5"/>
<path d="M1394.0 641.5V842.5"/>
<path d="M1548.0 641.5V842.5"/>
<path d="M1687.0 641.5V842.5"/>
</g>
<g stroke="#fff" stroke-width="2.35" fill="none">
<path d="M113.8 834.0h8.3M118.0 829.8v8.3"/>
<path d="M240.8 834.0h8.3M245.0 829.8v8.3"/>
<path d="M510.9 834.0h8.3M515.0 829.8v8.3"/>
<path d="M706.6 834.0h8.3M710.8 829.8v8.3"/>
<path d="M833.9 834.0h8.3M838.0 829.8v8.3"/>
<path d="M961.9 834.0h8.3M966.0 829.8v8.3"/>
<path d="M986.9 834.0h8.3M991.0 829.8v8.3"/>
<path d="M1116.8 834.0h8.3M1121.0 829.8v8.3"/>
<path d="M1295.8 834.0h8.3M1300.0 829.8v8.3"/>
<path d="M1341.8 834.0h8.3M1346.0 829.8v8.3"/>
<path d="M1412.8 834.0h8.3M1417.0 829.8v8.3"/>
<path d="M1481.8 834.0h8.3M1486.0 829.8v8.3"/>
<path d="M1530.8 834.0h8.3M1535.0 829.8v8.3"/>
<path d="M1731.8 834.0h8.3M1736.0 829.8v8.3"/>
<path d="M1765.8 834.0h8.3M1770.0 829.8v8.3"/>
<path d="M172.6 818.0h8.3M176.8 813.9v8.3"/>
<path d="M255.8 818.0h8.3M260.0 813.9v8.3"/>
<path d="M323.6 818.0h8.3M327.8 813.9v8.3"/>
<path d="M437.9 818.0h8.3M442.0 813.9v8.3"/>
<path d="M598.9 818.0h8.3M603.0 813.9v8.3"/>
<path d="M716.9 818.0h8.3M721.0 813.9v8.3"/>
<path d="M793.9 818.0h8.3M798.0 813.9v8.3"/>
<path d="M939.9 818.0h8.3M944.0 813.9v8.3"/>
<path d="M1005.9 818.0h8.3M1010.0 813.9v8.3"/>
<path d="M1152.8 818.0h8.3M1157.0 813.9v8.3"/>
<path d="M1250.8 818.0h8.3M1255.0 813.9v8.3"/>
<path d="M1299.8 818.0h8.3M1304.0 813.9v8.3"/>
<path d="M1349.8 818.0h8.3M1354.0 813.9v8.3"/>
<path d="M1402.8 818.0h8.3M1407.0 813.9v8.3"/>
<path d="M1466.8 818.0h8.3M1471.0 813.9v8.3"/>
<path d="M1554.8 818.0h8.3M1559.0 813.9v8.3"/>
<path d="M174.6 802.0h8.3M178.8 797.9v8.3"/>
<path d="M378.9 802.0h8.3M383.0 797.9v8.3"/>
<path d="M544.9 802.0h8.3M549.0 797.9v8.3"/>
<path d="M682.9 802.0h8.3M687.0 797.9v8.3"/>
<path d="M741.9 802.0h8.3M746.0 797.9v8.3"/>
<path d="M1074.8 802.0h8.3M1079.0 797.9v8.3"/>
<path d="M1216.8 802.0h8.3M1221.0 797.9v8.3"/>
<path d="M1304.8 802.0h8.3M1309.0 797.9v8.3"/>
<path d="M1466.8 802.0h8.3M1471.0 797.9v8.3"/>
<path d="M1559.8 802.0h8.3M1564.0 797.9v8.3"/>
<path d="M201.6 785.0h8.3M205.8 780.9v8.3"/>
<path d="M400.9 785.0h8.3M405.0 780.9v8.3"/>
<path d="M525.4 785.0h8.3M529.5 780.9v8.3"/>
<path d="M638.9 785.0h8.3M643.0 780.9v8.3"/>
<path d="M814.9 785.0h8.3M819.0 780.9v8.3"/>
<path d="M959.9 785.0h8.3M964.0 780.9v8.3"/>
<path d="M1040.8 785.0h8.3M1045.0 780.9v8.3"/>
<path d="M1187.8 785.0h8.3M1192.0 780.9v8.3"/>
<path d="M1250.8 785.0h8.3M1255.0 780.9v8.3"/>
<path d="M1324.8 785.0h8.3M1329.0 780.9v8.3"/>
<path d="M1402.8 785.0h8.3M1407.0 780.9v8.3"/>
<path d="M1545.8 785.0h8.3M1550.0 780.9v8.3"/>
<path d="M355.9 769.0h8.3M360.0 764.9v8.3"/>
<path d="M426.9 769.0h8.3M431.0 764.9v8.3"/>
<path d="M476.4 769.0h8.3M480.5 764.9v8.3"/>
<path d="M535.9 769.0h8.3M540.0 764.9v8.3"/>
<path d="M570.9 769.0h8.3M575.0 764.9v8.3"/>
<path d="M630.9 769.0h8.3M635.0 764.9v8.3"/>
<path d="M973.9 769.0h8.3M978.0 764.9v8.3"/>
<path d="M1069.8 769.0h8.3M1074.0 764.9v8.3"/>
<path d="M1108.8 769.0h8.3M1113.0 764.9v8.3"/>
<path d="M1177.8 769.0h8.3M1182.0 764.9v8.3"/>
<path d="M1255.8 769.0h8.3M1260.0 764.9v8.3"/>
<path d="M1466.8 769.0h8.3M1471.0 764.9v8.3"/>
<path d="M427.9 752.0h8.3M432.0 747.9v8.3"/>
<path d="M539.4 752.0h8.3M543.5 747.9v8.3"/>
<path d="M574.9 752.0h8.3M579.0 747.9v8.3"/>
<path d="M703.9 752.0h8.3M708.0 747.9v8.3"/>
<path d="M1094.8 752.0h8.3M1099.0 747.9v8.3"/>
<path d="M1270.8 752.0h8.3M1275.0 747.9v8.3"/>
<path d="M1476.8 752.0h8.3M1481.0 747.9v8.3"/>
<path d="M437.9 736.0h8.3M442.0 731.9v8.3"/>
<path d="M630.9 736.0h8.3M635.0 731.9v8.3"/>
<path d="M1038.8 736.0h8.3M1043.0 731.9v8.3"/>
<path d="M1167.8 736.0h8.3M1172.0 731.9v8.3"/>
<path d="M1274.8 736.0h8.3M1279.0 731.9v8.3"/>
<path d="M1496.8 736.0h8.3M1501.0 731.9v8.3"/>
<path d="M598.9 720.0h8.3M603.0 715.9v8.3"/>
<path d="M726.9 720.0h8.3M731.0 715.9v8.3"/>
<path d="M1187.8 720.0h8.3M1192.0 715.9v8.3"/>
<path d="M1270.8 720.0h8.3M1275.0 715.9v8.3"/>
<path d="M687.9 703.0h8.3M692.0 698.9v8.3"/>
<path d="M1101.8 703.0h8.3M1106.0 698.9v8.3"/>
<path d="M1206.8 703.0h8.3M1211.0 698.9v8.3"/>
<path d="M1299.8 703.0h8.3M1304.0 698.9v8.3"/>
<path d="M1118.8 687.0h8.3M1123.0 682.9v8.3"/>
</g>
<g font-family="'DejaVu Sans','Liberation Sans',sans-serif" font-size="10.42" fill="#fff" text-anchor="middle">
<text x="117.1" y="831.5">KSE</text>
<text x="255.0" y="831.5">ETA</text>
<text x="495.5" y="831.5">NZC</text>
<text x="710.8" y="831.5">NDA</text>
<text x="853.9" y="831.5">SPE</text>
<text x="946.3" y="831.5">ARD</text>
<text x="1024.8" y="831.5">EGE</text>
<text x="1142.8" y="831.5">NTA</text>
<text x="1284.9" y="831.5">MON</text>
<text x="1343.7" y="831.5">URS</text>
<text x="1412.0" y="831.5">AHY</text>
<text x="1485.8" y="831.5">GUM</text>
<text x="1535.3" y="831.5">OHY</text>
<text x="1735.8" y="831.5">XHE</text>
<text x="1770.3" y="831.5">EVI</text>
<text x="176.5" y="815.1">AVB</text>
<text x="255.0" y="815.1">ELY</text>
<text x="323.9" y="815.1">CAM</text>
<text x="432.0" y="815.1">SSG</text>
<text x="578.8" y="815.1">PCA</text>
<text x="720.5" y="815.1">AUD</text>
<text x="809.2" y="815.1">AUR</text>
<text x="931.0" y="815.1">DSX</text>
<text x="1010.9" y="815.1">OCU</text>
<text x="1138.0" y="815.1">OER</text>
<text x="1254.9" y="815.1">DKD</text>
<text x="1304.1" y="815.1">DSV</text>
<text x="1353.2" y="815.1">ALY</text>
<text x="1407.9" y="815.1">JLE</text>
<text x="1471.8" y="815.1">SCC</text>
<text x="1559.0" y="815.1">FEV</text>
<text x="176.2" y="798.7">LYR</text>
<text x="372.7" y="798.7">JMC</text>
<text x="559.0" y="798.7">JPE</text>
<text x="671.4" y="798.7">PAU</text>
<text x="774.2" y="798.7">NIA</text>
<text x="1050.0" y="798.7">STA</text>
<text x="1206.4" y="798.7">NOO</text>
<text x="1353.6" y="798.7">COM</text>
<text x="1470.6" y="798.7">NCC</text>
<text x="1564.3" y="798.7">FED</text>
<text x="206.1" y="782.3">HVI</text>
<text x="412.4" y="782.3">ARI</text>
<text x="529.7" y="782.3">SZC</text>
<text x="618.7" y="782.3">CAP</text>
<text x="818.3" y="782.3">NUE</text>
<text x="961.2" y="782.3">OCT</text>
<text x="1059.3" y="782.3">ORI</text>
<text x="1186.7" y="782.3">AMO</text>
<text x="1255.2" y="782.3">DPC</text>
<text x="1329.3" y="782.3">XVI</text>
<text x="1407.5" y="782.3">QUA</text>
<text x="1559.7" y="782.3">AAN</text>
<text x="353.3" y="765.9">TAH</text>
<text x="431.6" y="765.9">JEA</text>
<text x="481.5" y="765.9">JIP</text>
<text x="538.8" y="765.9">PPS</text>
<text x="578.8" y="765.9">ZCS</text>
<text x="632.8" y="765.9">GDR</text>
<text x="971.3" y="765.9">DRA</text>
<text x="1073.3" y="765.9">LUM</text>
<text x="1112.9" y="765.9">RPU</text>
<text x="1177.4" y="765.9">THA</text>
<text x="1259.4" y="765.9">PSU</text>
<text x="1470.8" y="765.9">XCB</text>
<text x="431.8" y="749.5">JRC</text>
<text x="544.4" y="749.5">CAN</text>
<text x="578.2" y="749.5">FAN</text>
<text x="681.4" y="749.5">PER</text>
<text x="1050.3" y="749.5">CTA</text>
<text x="1265.6" y="749.5">HYD</text>
<text x="1481.3" y="749.5">XUM</text>
<text x="441.7" y="733.1">COR</text>
<text x="658.0" y="733.1">SDA</text>
<text x="1049.0" y="733.1">LMI</text>
<text x="1166.4" y="733.1">LEO</text>
<text x="1274.7" y="733.1">EHY</text>
<text x="1500.8" y="733.1">ECV</text>
<text x="604.0" y="716.7">JXA</text>
<text x="716.0" y="716.7">KCG</text>
<text x="1156.7" y="716.7">AND</text>
<text x="1274.9" y="716.7">DAD</text>
<text x="666.4" y="700.3">ERI</text>
<text x="1108.5" y="700.3">SLD</text>
<text x="1211.3" y="700.3">ORS</text>
<text x="1300.0" y="700.3">GEM</text>
<text x="1123.0" y="683.9">KUM</text>
</g>
<rect x="20.5" y="641.5" width="1765.0" height="201.0" fill="none" stroke="#fff" stroke-width="1.1"/>
<g stroke="#fff" stroke-width="1.1">
<path d="M20.5 842.5v4.9"/>
<path d="M265.6 842.5v4.9"/>
<path d="M510.8 842.5v4.9"/>
<path d="M755.9 842.5v4.9"/>
<path d="M1001.1 842.5v4.9"/>
<path d="M1246.2 842.5v4.9"/>
<path d="M1491.3 842.5v4.9"/>
<path d="M1736.5 842.5v4.9"/>
</g>
<g font-family="'DejaVu Sans','Liberation Sans',sans-serif" font-size="13.89" fill="#fff" text-anchor="middle">
<text x="19.7" y="862.3">0</text>
<text x="264.8" y="862.3">50</text>
<text x="510.0" y="862.3">100</text>
<text x="755.1" y="862.3">150</text>
<text x="1000.3" y="862.3">200</text>
<text x="1245.4" y="862.3">250</text>
<text x="1490.5" y="862.3">300</text>
<text x="1735.7" y="862.3">350</text>
<text x="902.5" y="881.5">Solar longitude (deg)</text>
</g>
</svg>
</body></html>
